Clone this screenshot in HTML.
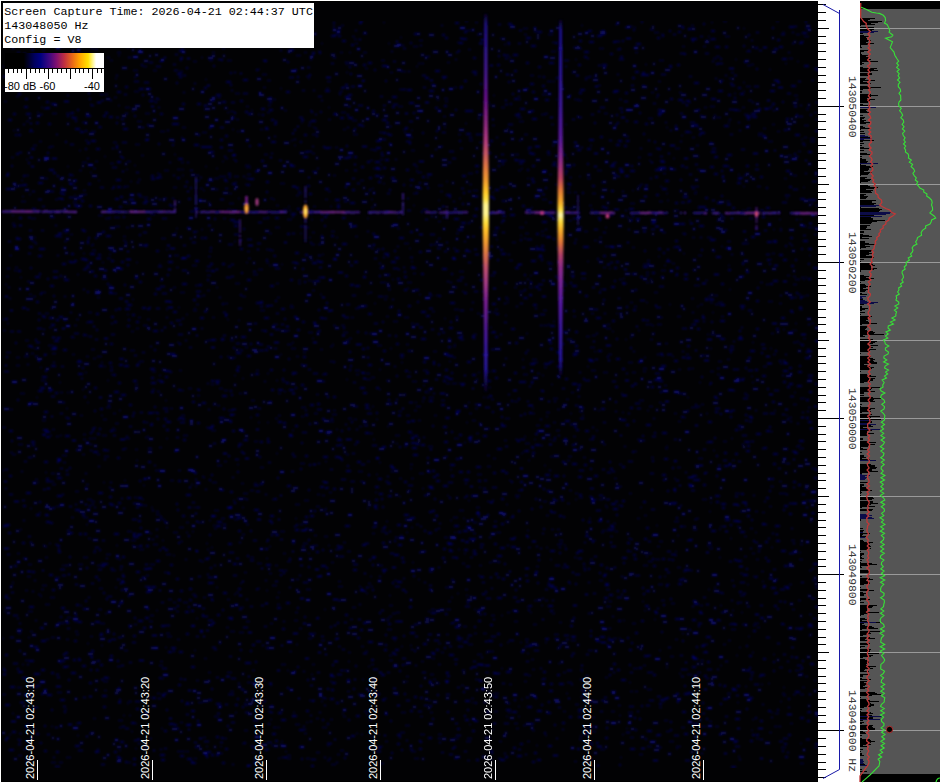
<!DOCTYPE html><html><head><meta charset="utf-8"><style>
html,body{margin:0;padding:0;background:#fff;width:941px;height:783px;overflow:hidden;position:relative}
.abs{position:absolute}
.mono{font-family:"Liberation Mono",monospace}
.sans{font-family:"Liberation Sans",sans-serif}
#label{left:3px;top:3px;width:311px;height:45px;background:#fff;color:#000;font-size:11.7px;line-height:14px}
#label div{white-space:pre;margin-left:1.3px}
.tl{color:#fff;font-size:11px;white-space:nowrap;transform-origin:0 0;transform:rotate(-90deg)}
.fl{color:#383838;font-size:11.4px;white-space:pre;transform-origin:0 0;transform:rotate(90deg)}
</style></head><body>
<svg class="abs" style="left:0;top:0" width="941" height="783" viewBox="0 0 941 783"><defs><linearGradient id="g1" x1="0" y1="14" x2="0" y2="392" gradientUnits="userSpaceOnUse"><stop offset="0.0000" stop-color="#180c70" stop-opacity="0.3"/><stop offset="0.0265" stop-color="#1e1080" stop-opacity="1"/><stop offset="0.0820" stop-color="#2c1490" stop-opacity="1"/><stop offset="0.1614" stop-color="#481490" stop-opacity="1"/><stop offset="0.2275" stop-color="#681088" stop-opacity="1"/><stop offset="0.2937" stop-color="#902a80" stop-opacity="1"/><stop offset="0.3333" stop-color="#b03a80" stop-opacity="1"/><stop offset="0.3730" stop-color="#c85a60" stop-opacity="1"/><stop offset="0.4048" stop-color="#e07840" stop-opacity="1"/><stop offset="0.4392" stop-color="#f09a30" stop-opacity="1"/><stop offset="0.4709" stop-color="#ffc828" stop-opacity="1"/><stop offset="0.4894" stop-color="#ffe040" stop-opacity="1"/><stop offset="0.5053" stop-color="#fff490" stop-opacity="1"/><stop offset="0.5291" stop-color="#fff490" stop-opacity="1"/><stop offset="0.5503" stop-color="#ffe040" stop-opacity="1"/><stop offset="0.5714" stop-color="#ffc028" stop-opacity="1"/><stop offset="0.6032" stop-color="#f09a30" stop-opacity="1"/><stop offset="0.6376" stop-color="#d87048" stop-opacity="1"/><stop offset="0.6720" stop-color="#c05070" stop-opacity="1"/><stop offset="0.7169" stop-color="#a03888" stop-opacity="1"/><stop offset="0.7566" stop-color="#7a2090" stop-opacity="1"/><stop offset="0.8095" stop-color="#5a1a90" stop-opacity="1"/><stop offset="0.8757" stop-color="#3a18a0" stop-opacity="1"/><stop offset="0.9418" stop-color="#24149a" stop-opacity="1"/><stop offset="1.0000" stop-color="#180c70" stop-opacity="0.2"/></linearGradient><linearGradient id="g2" x1="0" y1="20" x2="0" y2="375" gradientUnits="userSpaceOnUse"><stop offset="0.0000" stop-color="#180c70" stop-opacity="0.3"/><stop offset="0.0282" stop-color="#1a1088" stop-opacity="1"/><stop offset="0.1408" stop-color="#2a1598" stop-opacity="1"/><stop offset="0.2535" stop-color="#40189a" stop-opacity="1"/><stop offset="0.3380" stop-color="#5a1a98" stop-opacity="1"/><stop offset="0.3944" stop-color="#8a2a88" stop-opacity="1"/><stop offset="0.4451" stop-color="#b84060" stop-opacity="1"/><stop offset="0.4789" stop-color="#e07838" stop-opacity="1"/><stop offset="0.5155" stop-color="#f8b028" stop-opacity="1"/><stop offset="0.5352" stop-color="#ffe040" stop-opacity="1"/><stop offset="0.5493" stop-color="#fff8b0" stop-opacity="1"/><stop offset="0.5662" stop-color="#ffe040" stop-opacity="1"/><stop offset="0.5915" stop-color="#f8b028" stop-opacity="1"/><stop offset="0.6254" stop-color="#e07838" stop-opacity="1"/><stop offset="0.6620" stop-color="#b04068" stop-opacity="1"/><stop offset="0.6986" stop-color="#8a2a88" stop-opacity="1"/><stop offset="0.7887" stop-color="#5a1aa0" stop-opacity="1"/><stop offset="0.8732" stop-color="#3a18a0" stop-opacity="1"/><stop offset="0.9577" stop-color="#24149a" stop-opacity="1"/><stop offset="1.0000" stop-color="#180c70" stop-opacity="0.3"/></linearGradient>
<filter id="nb" x="0" y="0" width="100%" height="100%"><feGaussianBlur stdDeviation="0.9"/></filter>
<filter id="b1" x="-50%" y="-50%" width="200%" height="200%"><feGaussianBlur stdDeviation="0.8"/></filter>
<filter id="b2" x="-50%" y="-50%" width="200%" height="200%"><feGaussianBlur stdDeviation="1.2"/></filter>
</defs><rect x="1" y="1" width="817" height="781" fill="#000"/><rect x="2" y="2" width="815" height="779" fill="#020204"/><g filter="url(#nb)"><path fill="#04044a" d="M333 175h3v1h-3zM221 59h2v2h-2zM248 113h4v2h-4zM138 317h3v1h-3zM586 336h4v1h-4zM586 675h2v2h-2zM478 620h3v2h-3zM815 205h5v1h-5zM296 644h2v1h-2zM170 371h2v2h-2zM686 100h4v2h-4zM360 629h3v2h-3zM97 297h3v1h-3zM720 338h5v2h-5zM365 193h4v1h-4zM225 315h2v1h-2zM510 103h2v2h-2zM369 720h3v1h-3zM182 175h2v1h-2zM605 207h3v2h-3zM709 548h4v1h-4zM800 717h4v2h-4zM405 127h3v2h-3zM70 234h3v1h-3zM551 124h3v1h-3zM357 637h3v2h-3zM501 498h3v2h-3zM492 729h2v1h-2zM307 679h2v2h-2zM234 225h4v2h-4zM31 49h3v2h-3zM742 378h3v1h-3zM234 502h2v2h-2zM360 180h4v1h-4zM745 686h2v1h-2zM201 237h2v2h-2zM515 267h4v2h-4zM515 154h4v1h-4zM60 275h2v2h-2zM465 541h4v2h-4zM209 479h2v2h-2zM454 344h2v1h-2zM160 754h5v2h-5zM142 499h2v1h-2zM500 187h5v1h-5zM443 548h3v2h-3zM367 347h2v2h-2zM569 490h3v1h-3zM531 659h3v1h-3zM809 255h2v1h-2zM694 285h3v1h-3zM529 605h3v2h-3zM87 643h2v1h-2zM429 295h4v1h-4zM728 265h2v1h-2zM187 227h3v2h-3zM212 317h3v1h-3zM20 277h2v1h-2zM519 585h2v2h-2zM237 371h2v1h-2zM357 76h2v1h-2zM760 282h3v1h-3zM711 321h2v2h-2zM277 477h2v2h-2zM338 581h3v1h-3zM318 244h3v1h-3zM392 106h3v2h-3zM207 275h4v1h-4zM93 168h3v1h-3zM308 332h5v1h-5zM600 749h5v1h-5zM643 565h5v1h-5zM633 668h5v1h-5zM138 33h3v1h-3zM299 746h4v2h-4zM479 142h4v1h-4zM89 505h2v2h-2zM520 481h3v2h-3zM217 97h4v1h-4zM238 530h3v2h-3zM5 524h5v2h-5zM746 165h3v2h-3zM298 280h3v1h-3zM569 583h2v1h-2zM295 518h2v1h-2zM426 372h3v2h-3zM310 515h4v2h-4zM660 186h2v1h-2zM779 481h3v1h-3zM208 41h5v2h-5zM765 557h2v2h-2zM370 149h5v1h-5zM256 414h3v2h-3zM321 43h2v1h-2zM784 505h4v2h-4zM402 561h3v2h-3zM113 250h2v1h-2zM700 132h5v2h-5zM797 61h2v1h-2zM116 122h2v2h-2zM598 217h3v2h-3zM287 344h5v1h-5zM723 686h3v1h-3zM512 711h5v2h-5zM235 704h3v2h-3zM36 733h3v2h-3zM321 219h2v2h-2zM151 423h2v1h-2zM83 190h3v1h-3zM389 403h3v2h-3zM4 101h3v1h-3zM128 595h2v2h-2zM202 402h4v2h-4zM374 506h2v2h-2zM642 435h2v2h-2zM622 368h3v2h-3zM306 24h5v1h-5zM397 278h3v2h-3zM793 175h4v1h-4zM329 492h3v1h-3zM403 184h2v2h-2zM36 514h4v2h-4zM459 198h2v1h-2zM302 321h3v2h-3zM757 287h2v2h-2zM594 213h3v1h-3zM104 690h3v1h-3zM488 257h3v2h-3zM302 259h2v1h-2zM599 219h2v2h-2zM682 27h2v2h-2zM379 369h2v1h-2zM337 439h5v2h-5zM563 516h2v2h-2zM421 311h5v2h-5zM54 340h5v2h-5zM20 393h5v1h-5zM375 492h2v1h-2zM566 166h5v2h-5zM639 400h5v1h-5zM113 413h3v1h-3zM189 599h2v1h-2zM532 181h3v2h-3zM777 709h2v2h-2zM317 617h2v2h-2zM378 478h4v2h-4zM5 654h3v2h-3zM411 130h2v1h-2zM376 114h3v1h-3zM751 730h2v1h-2zM505 315h2v1h-2zM361 646h3v1h-3zM630 302h3v1h-3zM245 347h3v1h-3zM51 672h3v2h-3zM646 424h5v2h-5zM379 612h2v2h-2zM51 324h4v2h-4zM228 173h3v2h-3zM374 69h2v2h-2zM670 67h2v1h-2zM365 332h2v2h-2zM425 618h3v1h-3zM640 507h2v1h-2zM251 745h2v2h-2zM655 169h5v2h-5zM594 475h4v2h-4zM2 66h2v1h-2zM245 184h2v1h-2zM566 693h2v1h-2zM180 541h3v1h-3zM51 762h5v1h-5zM449 497h2v2h-2zM109 288h2v1h-2zM769 732h3v1h-3zM569 716h3v2h-3zM224 108h4v1h-4zM243 228h2v2h-2zM400 357h4v1h-4zM647 730h5v2h-5zM545 735h2v1h-2zM177 169h2v1h-2zM756 68h2v2h-2zM548 701h2v2h-2zM212 229h2v1h-2zM773 670h2v2h-2zM137 121h5v1h-5zM346 454h3v1h-3zM635 52h3v1h-3zM296 195h3v1h-3zM297 76h2v2h-2zM529 287h4v1h-4zM221 737h2v2h-2zM765 109h3v1h-3zM312 290h3v1h-3zM647 260h3v1h-3zM774 726h4v1h-4zM761 352h2v2h-2zM793 284h4v1h-4zM475 679h5v1h-5zM536 377h2v1h-2zM195 285h5v1h-5zM675 125h2v2h-2zM153 330h5v2h-5zM202 132h5v1h-5zM399 496h2v1h-2zM811 468h5v1h-5zM649 324h3v1h-3zM658 148h3v2h-3zM645 738h2v2h-2zM411 751h5v1h-5zM110 60h3v1h-3zM802 225h4v2h-4zM526 37h5v2h-5zM422 488h2v1h-2zM260 301h3v2h-3zM541 245h3v2h-3zM134 91h5v1h-5zM151 382h5v2h-5zM705 280h3v1h-3zM216 94h5v2h-5zM105 613h2v1h-2zM563 672h3v1h-3zM121 589h2v2h-2zM144 505h3v1h-3zM149 738h3v1h-3zM554 634h5v1h-5zM340 117h4v2h-4zM348 117h5v2h-5zM799 559h4v1h-4zM301 384h3v2h-3zM812 141h3v1h-3zM43 429h5v2h-5zM52 429h3v1h-3zM715 726h4v1h-4zM685 669h3v1h-3zM577 748h3v2h-3zM794 452h4v2h-4zM16 717h3v1h-3zM219 176h5v1h-5zM92 244h2v1h-2zM88 321h5v2h-5zM262 74h5v1h-5zM17 687h5v1h-5zM500 644h2v2h-2zM695 191h2v1h-2zM662 188h5v2h-5zM798 484h3v2h-3zM241 483h3v1h-3zM276 453h2v1h-2zM562 722h3v2h-3zM554 587h3v2h-3zM602 30h3v2h-3zM551 384h2v1h-2zM535 286h4v2h-4zM605 227h2v1h-2zM369 433h4v1h-4zM355 308h4v1h-4zM211 600h3v1h-3zM787 628h4v1h-4zM40 367h2v1h-2zM658 112h5v2h-5zM165 400h2v1h-2zM50 285h4v2h-4zM109 503h3v2h-3zM129 404h3v2h-3zM246 167h5v1h-5zM201 57h2v1h-2zM101 415h2v1h-2zM349 351h2v2h-2zM186 751h3v1h-3zM154 293h3v2h-3zM28 298h4v2h-4zM173 287h3v1h-3zM124 284h2v2h-2zM269 265h2v1h-2zM427 187h2v2h-2zM657 37h3v2h-3zM455 22h4v2h-4zM447 62h3v1h-3zM750 528h3v1h-3zM58 551h3v2h-3zM656 525h2v1h-2zM783 509h2v2h-2zM590 630h2v2h-2zM458 549h2v1h-2zM64 319h2v2h-2zM28 564h4v1h-4zM92 250h4v1h-4zM321 277h4v1h-4zM107 380h2v1h-2zM128 497h3v2h-3zM613 638h4v1h-4zM55 392h3v2h-3zM363 276h3v1h-3zM545 212h2v2h-2zM518 706h2v1h-2zM258 145h4v1h-4zM42 315h2v2h-2zM172 144h2v2h-2zM606 567h2v2h-2zM136 321h3v2h-3zM208 582h5v2h-5zM563 331h4v2h-4zM319 52h2v2h-2zM526 580h3v2h-3zM505 297h3v1h-3zM358 471h5v1h-5zM452 383h5v1h-5zM532 118h5v2h-5zM647 746h5v1h-5zM107 25h3v1h-3zM8 532h3v2h-3zM597 258h2v2h-2zM511 328h4v2h-4zM449 550h4v2h-4zM368 62h4v2h-4zM12 713h2v1h-2zM603 372h5v1h-5zM327 396h2v2h-2zM523 451h5v1h-5zM525 233h4v1h-4zM63 666h4v1h-4zM546 547h2v1h-2zM126 169h2v1h-2zM594 351h2v1h-2zM598 85h3v1h-3zM179 343h2v2h-2zM619 279h3v1h-3zM401 712h5v1h-5zM251 110h2v1h-2zM119 364h4v2h-4zM361 588h2v2h-2zM292 373h2v2h-2zM682 46h3v1h-3zM134 115h2v2h-2zM808 151h4v2h-4zM247 184h3v2h-3zM416 406h5v1h-5zM452 622h3v1h-3zM95 576h3v2h-3zM737 602h2v2h-2zM239 349h2v1h-2zM372 533h3v1h-3zM320 111h2v2h-2zM735 429h3v2h-3zM27 695h5v2h-5zM412 381h5v1h-5zM43 435h2v1h-2zM699 134h2v2h-2zM632 247h3v1h-3zM436 474h3v2h-3zM798 151h3v1h-3zM721 593h3v1h-3zM801 673h2v2h-2zM62 193h3v2h-3zM208 672h3v1h-3zM725 519h5v2h-5zM249 27h4v2h-4zM658 380h5v2h-5zM726 166h4v1h-4zM119 727h3v1h-3zM213 65h2v2h-2zM298 193h4v1h-4zM502 215h4v2h-4zM82 162h5v1h-5zM406 169h3v2h-3zM655 559h5v1h-5zM738 338h5v2h-5zM664 385h3v1h-3zM566 399h3v1h-3zM308 638h4v1h-4zM413 112h2v2h-2zM34 646h4v2h-4zM170 408h3v1h-3zM578 712h3v1h-3zM557 352h4v2h-4zM494 693h5v1h-5zM152 697h4v2h-4zM407 288h2v1h-2zM209 582h5v1h-5zM261 686h2v1h-2zM259 747h3v1h-3zM60 435h2v1h-2zM17 739h4v1h-4zM755 717h2v2h-2zM46 639h3v1h-3zM693 269h3v2h-3zM459 42h4v2h-4zM687 410h2v2h-2zM708 296h3v1h-3zM164 730h3v2h-3zM627 550h2v2h-2zM223 339h2v1h-2zM592 500h3v2h-3zM345 614h3v2h-3zM746 708h2v2h-2zM245 165h5v1h-5zM783 370h5v2h-5zM652 272h3v2h-3zM242 378h2v1h-2zM689 485h3v2h-3zM792 330h2v1h-2zM739 336h3v2h-3zM196 618h2v1h-2zM71 517h3v1h-3zM244 742h2v1h-2zM134 636h2v1h-2zM591 370h5v1h-5zM28 345h4v2h-4zM630 748h5v2h-5zM21 180h2v1h-2zM94 387h3v2h-3zM372 556h4v2h-4zM794 392h2v1h-2zM94 49h4v1h-4zM558 534h2v1h-2zM757 186h4v1h-4zM728 269h3v2h-3zM354 419h3v1h-3zM29 131h5v1h-5zM662 432h5v2h-5zM644 250h2v2h-2zM728 465h2v1h-2zM335 456h5v2h-5zM512 242h4v1h-4zM789 294h2v2h-2zM341 25h3v1h-3zM701 645h4v2h-4zM55 235h5v2h-5zM306 722h2v1h-2zM11 157h3v1h-3zM708 36h2v1h-2zM51 345h2v1h-2zM501 160h4v2h-4zM281 741h2v1h-2zM72 65h2v1h-2zM571 392h3v1h-3zM44 689h3v2h-3zM708 441h5v2h-5zM90 656h2v1h-2zM573 353h5v2h-5zM325 487h4v1h-4zM391 261h5v2h-5zM147 88h4v2h-4zM669 65h3v2h-3zM155 27h5v1h-5zM535 697h2v2h-2zM392 279h2v1h-2zM267 80h4v1h-4zM559 302h3v2h-3zM382 65h5v2h-5zM44 750h3v2h-3zM624 283h3v1h-3zM339 93h2v2h-2zM540 445h3v1h-3zM579 494h3v2h-3zM486 201h2v2h-2zM413 575h2v2h-2zM789 417h3v1h-3zM80 605h2v1h-2zM773 241h4v2h-4zM699 225h5v2h-5zM145 437h2v1h-2zM283 553h3v1h-3zM263 700h3v2h-3zM432 718h2v2h-2zM391 467h4v2h-4zM674 521h5v1h-5zM457 229h2v1h-2zM75 631h3v1h-3zM740 595h5v1h-5zM692 758h3v1h-3zM164 170h5v1h-5zM738 178h3v2h-3zM221 176h5v1h-5zM230 691h4v1h-4zM343 716h3v1h-3zM538 559h2v2h-2zM20 529h2v1h-2zM312 633h4v1h-4zM483 298h2v2h-2zM615 124h2v2h-2zM157 693h3v1h-3zM360 481h3v1h-3zM117 186h4v2h-4zM36 61h4v1h-4zM715 156h3v2h-3zM747 700h5v1h-5zM493 331h2v2h-2zM246 140h2v2h-2zM556 141h3v2h-3zM584 569h2v2h-2zM720 605h2v1h-2zM177 178h3v1h-3zM125 107h5v1h-5zM76 634h3v1h-3zM635 729h2v2h-2zM779 493h4v1h-4zM153 544h5v1h-5zM812 512h2v2h-2zM339 91h4v1h-4zM642 72h3v2h-3zM506 709h5v2h-5zM698 625h2v2h-2zM657 546h3v1h-3zM803 279h2v1h-2zM438 333h2v2h-2zM18 134h3v2h-3zM308 489h2v2h-2zM301 364h2v2h-2zM454 438h5v1h-5zM626 424h3v2h-3zM520 642h2v1h-2zM694 124h4v2h-4zM773 280h5v2h-5zM694 82h5v2h-5zM769 490h2v2h-2zM592 541h2v2h-2zM605 677h3v1h-3zM728 389h5v2h-5zM207 549h2v1h-2zM193 299h3v2h-3zM799 343h2v1h-2zM283 422h3v2h-3zM297 666h2v2h-2zM14 63h4v2h-4zM405 370h3v2h-3zM346 379h2v1h-2zM535 444h5v2h-5zM348 719h2v2h-2zM36 685h3v2h-3zM82 389h2v1h-2zM606 589h4v1h-4zM480 134h3v1h-3zM350 359h4v1h-4zM814 234h3v1h-3zM179 50h4v2h-4zM411 420h4v2h-4zM443 485h5v2h-5zM632 215h2v2h-2zM779 219h2v1h-2zM25 760h2v1h-2zM489 152h2v2h-2zM745 414h2v2h-2zM15 134h2v2h-2zM806 109h3v1h-3zM588 568h2v2h-2zM575 493h3v1h-3zM211 384h3v1h-3zM585 762h3v1h-3zM761 684h2v1h-2zM206 21h2v2h-2zM655 612h3v2h-3zM168 651h4v2h-4zM679 579h4v2h-4zM688 28h4v1h-4zM105 112h3v2h-3zM344 217h2v1h-2zM118 720h5v1h-5zM443 77h2v2h-2zM31 353h3v1h-3zM773 354h3v1h-3zM552 42h3v1h-3zM815 102h4v1h-4zM323 456h5v2h-5zM552 145h3v1h-3zM225 315h2v2h-2zM256 370h3v1h-3zM614 90h5v2h-5zM16 96h3v1h-3zM462 203h2v2h-2zM420 734h5v1h-5zM747 118h3v2h-3zM212 52h3v1h-3zM215 380h5v2h-5zM12 215h2v1h-2zM186 67h2v2h-2zM230 84h2v2h-2zM135 384h3v1h-3zM808 278h3v2h-3zM681 135h2v1h-2zM485 290h2v1h-2zM388 399h2v2h-2zM450 520h2v1h-2zM730 524h2v2h-2zM493 198h2v2h-2zM123 216h2v2h-2zM482 265h3v1h-3zM387 133h2v2h-2zM247 555h2v2h-2zM102 231h3v2h-3zM722 507h3v2h-3zM682 640h2v2h-2zM18 633h3v1h-3zM413 46h5v1h-5zM497 259h2v2h-2zM223 218h3v1h-3zM775 350h2v2h-2zM790 186h2v1h-2zM730 416h2v2h-2zM60 192h2v2h-2zM731 438h2v1h-2zM108 38h3v1h-3zM181 162h3v1h-3zM309 700h5v1h-5zM263 679h2v2h-2zM60 660h5v2h-5zM337 30h3v2h-3zM781 747h5v1h-5zM767 259h3v2h-3zM632 451h5v1h-5zM467 361h4v2h-4zM711 39h5v1h-5zM617 486h5v1h-5zM89 733h2v1h-2zM180 292h5v1h-5zM118 105h2v1h-2zM345 96h4v2h-4zM429 511h3v2h-3zM87 291h2v2h-2zM641 74h5v2h-5zM748 357h3v2h-3zM434 415h3v1h-3zM143 34h2v1h-2zM651 489h2v2h-2zM536 566h3v1h-3zM743 45h2v2h-2zM211 339h5v2h-5zM735 718h5v2h-5zM537 759h4v2h-4zM52 353h4v1h-4zM646 272h3v1h-3zM489 562h3v1h-3zM73 659h3v2h-3zM260 705h4v1h-4zM490 750h3v2h-3zM800 763h4v1h-4zM468 110h5v2h-5zM678 369h3v1h-3zM716 117h5v1h-5zM325 188h4v2h-4zM179 417h3v2h-3zM250 490h4v1h-4zM714 173h4v2h-4zM59 21h2v2h-2zM310 404h4v2h-4zM316 280h4v2h-4zM803 240h5v2h-5zM532 91h3v2h-3zM683 253h2v1h-2zM584 56h3v2h-3zM136 460h2v1h-2zM80 447h2v2h-2zM338 548h5v1h-5zM389 595h2v1h-2zM666 585h2v2h-2zM241 451h2v2h-2zM244 572h3v1h-3zM731 629h5v1h-5zM455 109h2v2h-2zM312 338h2v1h-2zM147 218h4v2h-4zM150 533h2v1h-2zM720 413h2v2h-2zM606 606h5v1h-5zM493 472h3v2h-3zM490 140h3v2h-3zM625 599h3v1h-3zM399 89h3v1h-3zM388 43h2v1h-2zM756 164h2v2h-2zM41 107h2v1h-2zM24 356h5v1h-5zM446 354h3v2h-3zM240 515h2v1h-2zM157 380h5v1h-5zM639 718h2v2h-2zM617 669h3v2h-3zM153 70h4v1h-4zM706 413h2v1h-2zM86 524h2v1h-2zM622 466h3v2h-3zM461 685h3v1h-3zM49 169h5v2h-5zM267 539h2v2h-2zM90 104h2v1h-2zM482 756h2v2h-2zM514 287h3v1h-3zM230 506h2v2h-2zM791 85h5v2h-5zM322 719h2v2h-2zM166 554h5v1h-5zM416 192h2v2h-2zM276 597h3v1h-3zM782 624h3v1h-3zM396 612h4v1h-4zM31 346h2v2h-2zM651 223h4v1h-4zM252 747h4v1h-4zM216 587h2v1h-2zM105 218h5v1h-5zM711 30h4v2h-4zM729 624h4v1h-4zM209 204h2v1h-2zM395 435h5v1h-5zM716 455h2v2h-2zM57 458h4v2h-4zM745 395h4v1h-4zM380 282h4v1h-4zM157 173h2v1h-2zM490 624h3v2h-3zM785 63h2v1h-2zM517 265h2v1h-2zM268 105h3v1h-3zM82 454h3v1h-3zM459 271h5v1h-5zM811 80h3v1h-3zM106 554h5v1h-5zM174 255h5v1h-5zM5 739h2v2h-2zM345 275h3v2h-3zM412 447h5v2h-5zM645 123h3v2h-3zM103 706h3v2h-3zM605 505h2v1h-2zM734 97h2v2h-2zM228 617h5v2h-5zM714 396h3v2h-3zM450 469h2v1h-2zM119 410h2v1h-2zM661 600h4v1h-4zM211 515h5v2h-5zM677 535h2v1h-2zM682 633h2v1h-2zM531 508h2v2h-2zM368 747h3v2h-3zM712 38h3v1h-3zM236 369h3v2h-3zM756 211h3v1h-3zM432 470h3v2h-3zM159 677h2v1h-2zM64 711h2v2h-2zM179 76h3v2h-3zM793 404h4v1h-4zM263 41h3v2h-3zM802 32h5v2h-5zM194 232h2v1h-2zM206 746h2v1h-2zM792 609h3v1h-3zM335 549h5v1h-5zM127 264h2v2h-2zM428 392h2v1h-2zM411 267h5v2h-5zM603 267h3v1h-3zM71 116h2v1h-2zM444 441h4v2h-4zM175 123h4v2h-4zM368 364h4v2h-4zM376 693h4v2h-4zM692 137h3v1h-3zM371 248h3v1h-3zM680 223h5v2h-5zM266 259h2v2h-2zM385 80h2v2h-2zM330 719h3v1h-3zM485 223h4v1h-4zM752 652h2v1h-2zM707 545h5v1h-5zM73 202h4v1h-4zM237 471h2v2h-2zM25 660h5v1h-5zM720 320h5v2h-5zM148 412h5v2h-5zM468 222h2v2h-2zM524 274h2v2h-2zM379 493h4v2h-4zM29 660h5v2h-5zM165 376h3v2h-3zM784 178h3v1h-3zM520 235h2v1h-2zM495 309h3v1h-3zM3 330h3v1h-3zM732 468h2v1h-2zM178 542h2v2h-2zM446 418h3v1h-3zM741 612h2v1h-2zM663 604h2v2h-2zM178 684h3v2h-3zM68 679h2v2h-2zM565 124h2v1h-2zM271 522h2v2h-2zM119 358h5v1h-5zM504 44h2v1h-2zM322 418h3v2h-3zM600 564h3v2h-3zM474 609h2v1h-2zM379 462h2v1h-2zM501 668h2v1h-2zM136 328h3v1h-3zM404 693h2v2h-2zM454 758h4v1h-4zM133 70h5v1h-5zM811 323h3v1h-3zM750 678h2v2h-2zM122 556h3v2h-3zM602 64h5v2h-5zM284 391h2v1h-2zM281 264h2v1h-2zM374 150h3v1h-3zM568 220h4v1h-4zM428 472h3v1h-3zM50 597h5v1h-5zM740 305h5v2h-5zM590 468h2v2h-2zM523 108h2v2h-2zM614 267h3v2h-3zM181 390h3v1h-3zM180 751h5v1h-5zM108 209h3v2h-3zM197 422h3v2h-3zM684 733h4v2h-4zM585 430h4v2h-4zM146 545h3v2h-3zM178 389h3v2h-3zM687 202h2v1h-2zM583 563h2v2h-2zM231 357h3v2h-3zM212 425h2v2h-2zM98 254h3v2h-3zM518 113h2v2h-2zM129 626h2v2h-2zM410 179h4v2h-4zM200 317h4v2h-4zM514 401h4v1h-4zM442 557h3v2h-3zM181 137h2v1h-2zM216 525h5v2h-5zM61 199h3v1h-3zM33 39h3v2h-3zM602 441h2v2h-2zM601 408h4v2h-4zM69 532h4v2h-4zM102 435h5v1h-5zM444 537h4v1h-4zM389 126h3v1h-3zM581 696h2v2h-2zM147 124h2v2h-2zM396 375h2v2h-2zM573 316h3v1h-3zM2 427h4v1h-4zM125 242h2v2h-2zM126 227h3v1h-3zM555 184h3v1h-3zM413 205h2v1h-2zM772 27h2v2h-2zM421 661h3v1h-3zM132 415h2v2h-2zM300 141h2v2h-2zM291 213h5v2h-5zM639 112h2v2h-2zM456 458h3v2h-3zM107 258h4v1h-4zM742 107h3v1h-3zM529 152h3v2h-3zM18 444h5v1h-5zM551 529h3v1h-3zM700 115h2v1h-2zM376 419h2v1h-2zM247 662h4v2h-4zM396 343h3v2h-3zM222 263h3v2h-3zM552 440h4v1h-4zM391 177h4v2h-4zM147 587h3v2h-3zM46 101h3v2h-3zM756 433h5v2h-5zM240 294h2v2h-2zM547 262h5v1h-5zM395 257h4v2h-4zM457 728h3v2h-3zM239 607h5v1h-5zM665 343h3v1h-3zM666 584h4v1h-4zM39 501h2v2h-2zM641 705h2v2h-2zM409 372h2v1h-2zM749 218h4v1h-4zM292 715h5v2h-5zM748 34h2v2h-2zM318 309h2v2h-2zM376 140h5v2h-5zM522 205h3v2h-3zM458 531h3v2h-3zM432 658h3v1h-3zM102 262h2v1h-2zM719 557h2v1h-2zM198 702h5v1h-5zM489 213h2v2h-2zM282 378h2v2h-2zM542 199h5v1h-5zM154 406h2v2h-2zM348 428h2v2h-2zM505 521h2v1h-2zM104 366h2v1h-2zM574 761h3v1h-3zM310 579h2v1h-2zM83 230h3v2h-3zM746 86h5v1h-5zM747 65h4v1h-4zM501 470h4v2h-4zM31 441h4v2h-4zM682 711h4v2h-4zM425 391h2v2h-2zM751 64h3v1h-3zM136 536h3v2h-3zM222 161h2v1h-2zM322 254h2v1h-2zM123 236h3v1h-3zM507 612h3v1h-3zM438 664h3v1h-3zM576 552h3v2h-3zM269 401h3v1h-3zM509 480h2v1h-2zM242 706h2v2h-2zM716 501h3v2h-3zM10 452h3v1h-3zM603 255h3v2h-3zM532 359h5v1h-5zM622 40h2v2h-2zM460 148h3v1h-3zM529 294h3v2h-3zM219 643h2v1h-2zM370 736h3v1h-3zM661 365h5v2h-5zM95 237h2v2h-2zM82 665h4v2h-4zM502 578h3v2h-3zM621 679h5v2h-5zM46 107h4v2h-4zM255 661h2v2h-2zM115 587h2v1h-2zM528 547h3v1h-3zM746 450h4v2h-4zM28 637h2v1h-2zM420 685h2v2h-2zM139 480h2v2h-2zM131 331h3v1h-3zM626 120h2v2h-2zM419 40h4v1h-4zM724 452h3v2h-3zM768 301h5v1h-5zM353 688h2v2h-2zM570 625h3v2h-3zM543 310h4v1h-4zM711 22h2v1h-2zM742 263h2v2h-2zM286 25h2v2h-2zM751 519h2v2h-2zM131 722h4v2h-4zM9 749h5v2h-5zM565 173h2v2h-2zM48 147h3v1h-3zM545 638h4v2h-4zM746 243h3v1h-3zM523 374h5v1h-5zM684 234h2v1h-2zM351 44h3v2h-3zM589 726h5v1h-5zM477 313h3v1h-3zM502 200h2v2h-2zM627 637h2v2h-2zM147 201h2v1h-2zM752 342h2v1h-2zM272 733h4v2h-4zM777 39h3v2h-3zM304 281h2v2h-2zM62 263h4v2h-4zM348 94h4v2h-4zM149 100h5v2h-5zM801 277h3v1h-3zM27 576h4v1h-4zM451 372h2v2h-2zM607 324h3v1h-3zM96 751h4v1h-4zM774 48h4v2h-4zM63 462h3v1h-3zM237 131h2v1h-2zM600 136h3v2h-3zM333 410h3v1h-3zM381 152h2v2h-2zM435 529h2v2h-2zM99 635h4v1h-4zM230 631h5v1h-5zM708 421h4v2h-4zM669 167h2v1h-2zM341 87h2v2h-2zM186 494h5v2h-5zM75 614h2v2h-2zM354 444h3v1h-3zM636 218h4v2h-4zM6 276h3v1h-3zM308 35h4v1h-4zM401 557h3v2h-3zM18 671h5v2h-5zM38 182h5v2h-5zM275 565h3v1h-3zM810 114h2v2h-2zM97 565h5v1h-5zM795 670h5v1h-5zM770 259h2v1h-2zM351 421h2v2h-2zM212 482h5v1h-5zM348 418h4v1h-4zM582 415h2v1h-2zM320 575h2v2h-2zM736 110h5v1h-5zM432 425h2v2h-2zM178 480h3v2h-3zM311 244h4v1h-4zM753 576h5v1h-5zM166 527h2v1h-2zM376 412h2v2h-2zM268 723h2v2h-2zM271 389h3v2h-3zM667 259h2v2h-2zM466 595h2v1h-2zM120 196h3v2h-3zM579 411h3v1h-3zM589 139h5v2h-5zM190 187h2v2h-2zM679 673h2v1h-2zM175 232h2v1h-2zM91 245h2v1h-2zM98 609h4v1h-4zM380 267h4v2h-4zM452 257h3v2h-3zM728 94h3v2h-3zM46 478h3v2h-3zM671 502h2v2h-2zM451 475h3v2h-3zM544 367h3v1h-3zM643 593h2v2h-2zM362 348h3v2h-3zM232 430h3v2h-3zM317 403h3v2h-3zM518 398h2v2h-2zM240 248h3v2h-3zM762 581h2v1h-2zM484 101h3v2h-3zM156 250h3v2h-3zM112 428h3v1h-3zM661 161h4v2h-4zM11 165h2v2h-2zM54 346h3v1h-3zM463 192h2v2h-2zM532 408h2v1h-2zM414 33h4v2h-4zM770 106h3v1h-3zM109 254h2v1h-2zM670 98h3v2h-3zM716 56h4v1h-4zM97 356h5v1h-5zM110 366h2v1h-2zM123 240h2v1h-2zM81 200h3v2h-3zM791 540h4v1h-4zM229 203h5v1h-5zM111 316h3v2h-3zM367 508h2v1h-2zM464 80h3v2h-3zM392 637h5v2h-5zM598 350h4v2h-4zM155 41h4v2h-4zM615 531h3v1h-3zM264 154h4v1h-4zM230 415h3v1h-3zM261 160h3v2h-3zM74 621h5v1h-5zM697 328h3v2h-3zM307 185h3v2h-3zM93 718h3v1h-3zM588 521h3v2h-3zM531 381h3v1h-3zM501 423h2v2h-2zM204 109h4v1h-4zM489 387h2v1h-2zM670 656h4v1h-4zM464 553h2v1h-2zM129 715h2v1h-2zM423 370h5v1h-5zM596 742h3v1h-3zM316 752h4v1h-4zM305 516h3v2h-3zM653 333h2v1h-2zM154 349h2v2h-2zM682 233h4v1h-4zM484 152h5v2h-5zM119 602h4v2h-4zM164 521h2v2h-2zM118 687h2v2h-2zM557 249h3v1h-3zM372 589h2v2h-2zM560 543h3v1h-3zM76 723h2v1h-2zM266 249h5v1h-5zM209 127h2v2h-2zM374 303h2v1h-2zM336 237h2v1h-2zM194 758h3v1h-3zM380 159h3v1h-3zM72 354h3v1h-3zM553 81h2v1h-2zM748 100h4v1h-4zM709 511h2v1h-2zM520 108h3v2h-3zM565 170h3v2h-3zM476 466h5v2h-5zM42 376h5v2h-5zM309 464h2v2h-2zM125 308h5v2h-5zM727 359h3v1h-3zM572 383h5v2h-5zM304 135h3v1h-3zM629 208h5v2h-5zM241 272h2v2h-2zM92 430h2v2h-2zM507 302h2v1h-2zM669 304h2v1h-2zM665 180h4v2h-4zM161 519h4v1h-4zM526 333h2v1h-2zM557 529h3v1h-3zM329 421h5v1h-5zM793 694h3v1h-3zM168 599h4v1h-4zM677 467h4v1h-4zM489 105h2v1h-2zM78 621h4v2h-4zM304 500h5v1h-5zM514 621h4v1h-4zM65 141h2v2h-2zM300 463h5v1h-5zM15 267h3v1h-3zM132 111h2v1h-2zM385 714h3v1h-3zM753 540h2v2h-2zM455 663h2v2h-2zM101 645h2v1h-2zM193 232h3v1h-3zM311 530h3v1h-3zM230 515h3v2h-3zM296 579h3v1h-3zM67 115h2v2h-2zM525 352h2v2h-2zM457 593h2v1h-2zM623 562h2v2h-2zM722 175h2v2h-2zM286 91h4v2h-4zM78 564h5v1h-5zM575 59h2v1h-2zM9 734h2v1h-2zM88 538h3v1h-3zM758 135h3v1h-3zM68 261h4v1h-4zM330 147h2v1h-2zM372 110h3v2h-3zM600 289h2v1h-2zM794 95h4v1h-4zM605 737h3v2h-3zM749 667h2v2h-2zM781 317h4v2h-4zM410 42h2v2h-2zM554 724h2v2h-2zM9 475h3v2h-3zM480 83h2v2h-2zM265 548h3v2h-3zM682 578h3v1h-3zM451 597h2v1h-2zM488 102h2v1h-2zM685 158h3v1h-3zM398 544h4v2h-4zM742 624h4v1h-4zM379 763h5v1h-5zM277 607h4v2h-4zM136 571h4v2h-4zM283 209h5v1h-5zM30 267h2v2h-2zM550 348h3v2h-3zM522 359h2v1h-2zM239 430h3v1h-3zM647 689h5v1h-5zM566 566h3v2h-3zM220 489h2v2h-2zM738 174h2v1h-2zM523 725h3v1h-3zM804 65h5v2h-5zM267 441h3v2h-3zM382 569h5v2h-5zM427 470h3v2h-3zM747 445h3v2h-3zM380 164h2v1h-2zM350 202h5v2h-5zM732 689h5v2h-5zM327 723h2v2h-2zM216 754h3v2h-3zM416 170h2v1h-2zM235 182h2v1h-2zM42 585h5v1h-5zM180 59h2v2h-2zM70 184h5v1h-5zM638 330h2v1h-2zM346 64h2v1h-2zM131 540h5v1h-5zM707 237h5v1h-5zM164 572h5v1h-5zM503 54h2v2h-2zM767 241h5v2h-5zM723 644h3v1h-3zM117 52h4v1h-4zM150 615h4v1h-4zM326 567h2v2h-2zM805 21h2v2h-2zM590 559h3v1h-3zM115 217h5v1h-5zM815 70h4v1h-4zM260 744h2v2h-2zM449 327h4v2h-4zM206 270h4v1h-4zM154 31h2v1h-2zM622 557h5v2h-5zM583 378h2v2h-2zM802 198h3v2h-3zM497 597h5v2h-5zM45 431h5v2h-5zM755 576h2v2h-2zM543 170h4v2h-4zM713 58h4v1h-4zM472 702h2v1h-2zM391 752h2v2h-2zM623 284h2v1h-2zM334 34h4v1h-4zM433 361h2v2h-2zM187 255h3v2h-3zM75 128h5v2h-5zM173 650h2v2h-2zM801 344h3v2h-3zM245 111h3v2h-3zM433 244h2v1h-2zM431 609h4v1h-4zM139 88h5v2h-5zM312 664h3v1h-3zM110 163h4v1h-4zM611 526h3v2h-3zM229 176h2v2h-2zM129 30h4v1h-4zM270 369h3v2h-3zM729 463h2v2h-2zM65 417h3v1h-3zM180 722h3v1h-3zM66 757h5v1h-5zM156 560h4v2h-4zM779 667h4v1h-4zM257 588h3v1h-3zM540 506h2v2h-2zM625 92h3v2h-3zM658 167h5v2h-5zM538 248h5v1h-5zM17 399h2v2h-2zM790 297h3v2h-3zM517 117h5v1h-5zM29 294h3v1h-3zM212 622h3v2h-3zM254 725h3v1h-3zM532 165h3v1h-3zM362 679h2v1h-2zM630 26h3v1h-3zM467 760h3v1h-3zM710 239h5v2h-5zM278 421h4v2h-4zM163 425h2v2h-2zM542 94h5v1h-5zM448 338h3v1h-3zM239 393h3v1h-3zM716 63h2v2h-2zM756 328h3v2h-3zM752 116h5v2h-5zM205 754h3v2h-3zM723 165h5v2h-5zM691 368h3v1h-3zM755 511h3v1h-3zM691 407h2v1h-2zM161 759h4v2h-4zM643 264h5v1h-5zM44 411h4v2h-4zM763 128h3v1h-3zM681 416h3v2h-3zM746 271h3v2h-3zM289 210h2v1h-2zM196 680h3v1h-3zM563 711h3v1h-3zM431 652h4v2h-4zM244 439h4v1h-4zM640 184h3v1h-3zM221 339h2v2h-2zM815 130h3v2h-3zM705 197h3v2h-3zM549 174h3v1h-3zM51 348h5v2h-5zM161 728h2v1h-2zM37 673h3v2h-3zM578 716h4v2h-4zM445 432h2v1h-2zM247 682h5v1h-5zM575 331h3v2h-3zM542 221h5v2h-5zM740 531h5v2h-5zM331 231h4v1h-4zM724 125h5v2h-5zM55 577h5v1h-5zM639 754h4v1h-4zM169 723h5v2h-5zM325 487h3v2h-3zM390 72h3v1h-3zM211 547h2v1h-2zM362 694h2v1h-2zM573 310h2v2h-2zM25 725h3v1h-3zM99 428h2v2h-2zM110 343h3v2h-3zM623 590h3v2h-3zM160 661h3v1h-3zM720 703h2v2h-2zM658 114h3v2h-3zM610 536h3v1h-3zM34 687h3v1h-3zM469 724h2v1h-2zM684 693h5v2h-5zM550 456h5v1h-5zM420 741h2v2h-2zM674 488h2v2h-2zM648 561h5v1h-5zM634 717h2v2h-2zM110 655h3v2h-3zM408 350h2v2h-2zM779 303h3v1h-3zM612 331h2v1h-2zM725 46h3v2h-3zM100 633h3v2h-3zM659 703h3v2h-3zM637 518h3v1h-3zM23 184h4v2h-4zM85 600h2v2h-2zM688 132h4v1h-4zM392 652h3v2h-3zM732 610h2v1h-2zM311 219h2v1h-2zM232 33h2v2h-2zM57 175h2v2h-2zM770 283h3v2h-3zM271 745h4v1h-4zM482 593h2v2h-2zM99 588h4v1h-4zM324 225h2v2h-2zM166 429h3v2h-3zM466 133h5v2h-5zM74 325h3v1h-3zM493 458h3v1h-3zM182 283h5v2h-5zM472 338h4v1h-4zM583 567h3v1h-3zM159 174h2v2h-2zM766 497h3v2h-3zM110 249h2v2h-2zM762 523h3v1h-3zM97 660h3v2h-3zM386 122h3v2h-3zM132 723h5v1h-5zM686 354h3v1h-3zM356 715h4v2h-4zM354 261h4v2h-4zM675 202h3v2h-3zM145 113h5v1h-5zM783 259h4v2h-4zM518 716h2v1h-2zM23 505h3v2h-3zM634 383h3v2h-3zM481 664h3v2h-3zM50 522h3v2h-3zM443 116h3v1h-3zM240 239h2v2h-2zM57 495h5v2h-5zM86 567h2v2h-2zM87 499h5v1h-5zM474 720h4v2h-4zM45 557h3v1h-3zM38 360h2v2h-2zM815 469h2v2h-2zM157 391h3v1h-3zM128 625h3v1h-3zM115 226h5v1h-5zM50 146h4v1h-4zM466 741h5v1h-5zM449 549h2v2h-2zM241 336h5v2h-5zM382 321h2v2h-2zM269 573h3v1h-3zM274 255h2v2h-2zM344 157h5v2h-5zM739 591h3v2h-3zM471 495h4v2h-4zM549 62h5v2h-5zM326 213h3v2h-3zM531 45h5v2h-5zM761 571h3v1h-3zM290 307h4v1h-4zM250 557h4v1h-4zM569 208h5v1h-5zM182 257h5v2h-5zM244 703h2v1h-2zM568 581h2v2h-2zM751 236h4v2h-4zM537 373h3v1h-3zM186 522h3v1h-3zM419 748h3v2h-3zM496 239h2v1h-2zM333 396h3v2h-3zM556 247h2v1h-2zM710 302h3v1h-3zM233 154h3v2h-3zM29 246h4v2h-4zM176 578h3v2h-3zM612 163h3v2h-3zM578 64h3v2h-3zM124 448h3v1h-3zM159 375h2v1h-2zM575 499h2v1h-2zM734 740h4v2h-4zM449 361h2v1h-2zM320 294h2v1h-2zM747 584h2v1h-2zM574 426h3v2h-3zM673 247h3v1h-3zM642 319h3v2h-3zM114 751h3v2h-3zM197 720h2v2h-2zM535 573h2v2h-2zM808 227h5v1h-5zM368 313h4v2h-4zM504 282h3v2h-3zM454 738h5v1h-5zM57 692h5v1h-5zM651 457h3v1h-3zM695 479h5v2h-5zM445 369h3v2h-3zM282 628h3v2h-3zM76 604h3v2h-3zM22 307h4v2h-4zM694 320h5v2h-5zM111 367h2v1h-2zM32 208h4v2h-4zM482 354h4v1h-4zM483 397h2v1h-2zM807 107h2v1h-2zM559 216h3v2h-3zM698 458h5v1h-5zM735 453h3v2h-3zM104 94h4v1h-4zM290 305h3v1h-3zM428 532h4v2h-4zM494 696h4v2h-4zM714 239h2v1h-2zM35 62h4v2h-4zM119 268h4v2h-4zM796 292h2v2h-2zM231 394h2v2h-2zM328 107h2v1h-2zM603 444h3v1h-3zM607 644h2v2h-2zM696 518h3v1h-3zM616 261h3v2h-3zM238 588h3v2h-3zM427 457h2v2h-2zM811 513h4v1h-4zM676 748h2v1h-2zM176 503h2v2h-2zM75 640h2v1h-2zM348 156h4v2h-4zM411 266h3v2h-3zM82 230h3v1h-3zM295 425h3v2h-3zM170 564h3v2h-3zM230 605h5v1h-5zM308 280h3v1h-3zM394 540h2v2h-2zM449 543h4v2h-4zM292 543h3v1h-3zM705 472h3v1h-3zM354 156h3v2h-3zM799 552h2v1h-2zM542 375h2v1h-2zM710 348h2v1h-2zM93 358h3v1h-3zM281 719h5v2h-5zM633 309h3v2h-3zM531 110h3v2h-3zM341 459h2v2h-2zM543 528h2v2h-2zM322 697h3v1h-3zM692 619h4v2h-4zM117 660h2v2h-2zM599 237h3v1h-3zM703 484h3v2h-3zM414 696h3v2h-3zM409 248h2v1h-2zM115 198h4v2h-4zM91 650h3v2h-3zM143 627h3v2h-3zM741 493h3v2h-3zM459 140h2v2h-2zM582 192h2v2h-2zM632 452h2v1h-2zM584 733h4v2h-4zM478 372h2v1h-2zM388 289h3v1h-3zM91 131h5v1h-5zM306 76h4v1h-4zM696 646h2v2h-2zM159 678h5v1h-5zM230 72h2v2h-2zM316 260h3v1h-3zM463 641h5v2h-5zM514 699h2v2h-2zM333 361h2v2h-2zM641 21h2v2h-2zM195 550h3v1h-3zM658 256h2v1h-2zM425 77h4v2h-4zM614 478h3v1h-3zM57 58h4v1h-4zM754 623h5v1h-5zM106 598h2v2h-2zM66 408h2v1h-2zM77 109h2v2h-2zM165 370h5v2h-5zM446 614h2v1h-2zM736 655h2v1h-2zM701 404h3v1h-3zM541 259h2v2h-2zM591 209h2v2h-2zM707 678h2v1h-2zM137 546h5v1h-5zM124 365h5v2h-5zM646 282h3v1h-3zM17 85h3v2h-3zM447 711h2v2h-2zM776 21h3v1h-3zM450 302h5v2h-5zM224 461h3v1h-3zM652 558h2v2h-2zM606 727h2v2h-2zM147 30h3v2h-3zM287 670h2v1h-2zM343 129h3v1h-3zM681 165h3v2h-3zM497 555h5v2h-5zM2 694h4v1h-4zM629 682h2v1h-2zM26 113h5v2h-5zM453 258h3v2h-3zM258 144h3v2h-3zM25 590h3v1h-3zM41 248h4v2h-4zM211 474h2v2h-2zM516 611h3v1h-3zM395 694h4v1h-4zM363 64h3v2h-3zM732 207h3v2h-3zM350 365h2v2h-2zM338 586h5v1h-5zM580 669h3v1h-3zM456 410h5v1h-5zM681 26h3v1h-3zM666 446h2v1h-2zM178 158h5v2h-5zM621 393h2v1h-2zM235 283h5v1h-5zM289 558h2v2h-2zM32 444h3v2h-3zM134 617h2v2h-2zM569 184h2v2h-2zM184 283h2v1h-2zM611 711h4v1h-4zM268 711h3v1h-3zM596 430h2v1h-2zM799 309h4v1h-4zM12 223h3v1h-3zM211 688h2v2h-2zM368 666h2v1h-2zM545 113h3v1h-3zM119 750h2v1h-2zM634 558h3v2h-3zM713 450h2v1h-2zM548 605h5v2h-5zM565 548h2v2h-2zM402 589h3v2h-3zM535 198h2v1h-2zM417 172h5v1h-5zM723 21h4v1h-4zM16 357h4v1h-4zM158 39h3v2h-3zM280 354h2v1h-2zM99 126h2v1h-2zM60 392h3v1h-3zM211 754h3v2h-3zM233 500h2v1h-2zM411 478h3v1h-3zM746 51h5v1h-5zM547 490h3v2h-3zM573 436h3v1h-3zM615 24h3v1h-3zM312 52h3v2h-3zM545 425h5v2h-5zM486 351h2v2h-2zM780 228h2v1h-2zM264 330h3v2h-3zM473 57h3v2h-3zM699 611h3v2h-3zM465 719h4v2h-4zM729 78h4v1h-4zM90 172h2v1h-2zM709 721h3v1h-3zM813 563h5v2h-5zM406 676h3v1h-3zM247 251h3v1h-3zM680 179h2v2h-2zM430 244h2v2h-2zM538 76h3v1h-3zM536 233h3v2h-3zM632 190h2v1h-2zM711 530h5v2h-5zM378 747h3v2h-3zM186 633h3v2h-3zM45 472h2v1h-2zM808 263h2v2h-2zM93 451h5v2h-5zM417 301h2v2h-2zM378 746h5v1h-5zM267 373h2v1h-2zM414 650h2v2h-2zM357 331h2v2h-2zM575 583h2v2h-2zM301 122h2v1h-2zM692 666h4v2h-4zM308 125h3v1h-3zM258 269h5v1h-5zM69 556h2v2h-2zM598 520h4v2h-4zM295 69h2v2h-2zM617 590h2v2h-2zM570 275h5v1h-5zM814 227h2v1h-2zM489 196h5v2h-5zM347 114h2v2h-2zM304 616h2v2h-2zM75 491h4v1h-4zM341 112h5v1h-5zM173 555h2v1h-2zM28 611h3v1h-3zM172 123h4v2h-4zM203 737h3v1h-3zM116 145h2v2h-2zM491 694h2v2h-2zM260 441h3v2h-3zM704 107h3v1h-3zM195 746h2v2h-2zM44 461h4v2h-4zM468 402h2v1h-2zM16 237h2v1h-2zM487 691h3v1h-3zM333 114h3v1h-3zM574 192h3v1h-3zM39 114h4v1h-4zM616 144h4v2h-4zM682 417h4v1h-4zM104 456h5v1h-5zM271 534h2v2h-2zM37 112h2v1h-2zM401 362h2v1h-2zM537 710h5v2h-5zM406 344h3v1h-3zM217 614h3v2h-3zM227 209h4v1h-4zM269 546h2v1h-2zM176 611h3v1h-3zM177 177h3v1h-3zM387 618h2v1h-2zM532 730h3v1h-3zM408 431h4v2h-4zM646 527h3v2h-3zM721 283h3v2h-3zM76 449h3v2h-3zM158 143h2v2h-2zM442 76h5v2h-5zM437 248h4v1h-4zM343 327h2v2h-2zM614 653h2v1h-2zM116 558h3v1h-3zM325 147h5v2h-5zM697 285h3v1h-3zM42 50h3v1h-3zM616 114h2v2h-2zM806 399h3v2h-3zM619 99h3v1h-3zM545 187h2v2h-2zM24 175h5v1h-5zM34 237h2v1h-2zM699 382h2v1h-2zM12 731h4v2h-4zM47 694h5v2h-5zM654 32h5v1h-5zM541 114h5v1h-5zM77 735h2v1h-2zM541 249h4v2h-4zM783 448h5v2h-5zM601 627h3v1h-3zM458 50h2v2h-2zM601 32h5v2h-5zM341 325h4v1h-4zM633 554h3v2h-3zM201 146h5v2h-5zM675 246h5v2h-5zM531 153h4v2h-4zM466 526h5v2h-5zM125 86h3v2h-3zM234 519h4v1h-4zM446 194h5v2h-5zM524 34h3v1h-3zM733 585h2v2h-2zM447 495h2v1h-2zM733 742h4v1h-4zM271 705h2v1h-2zM48 345h5v1h-5zM214 510h5v1h-5zM207 340h5v1h-5zM211 598h2v2h-2zM385 741h3v1h-3zM91 140h5v2h-5zM410 517h5v2h-5zM210 624h3v2h-3zM258 713h2v1h-2zM330 206h2v1h-2zM335 147h3v1h-3zM84 259h4v2h-4zM550 683h3v2h-3zM433 476h3v2h-3zM808 407h3v1h-3zM120 358h3v2h-3zM541 605h2v1h-2zM789 584h3v1h-3zM230 219h5v2h-5zM345 186h2v2h-2zM519 227h5v1h-5zM556 430h4v1h-4zM205 146h5v2h-5zM57 461h2v2h-2zM21 201h5v1h-5zM685 131h5v2h-5zM492 192h2v1h-2zM476 171h2v2h-2zM677 567h4v1h-4zM585 295h3v2h-3zM414 758h5v1h-5zM768 141h5v1h-5zM218 752h2v1h-2zM379 275h2v2h-2zM763 585h3v2h-3zM382 506h2v2h-2zM41 589h3v1h-3zM19 650h2v2h-2zM114 97h3v1h-3zM567 682h5v1h-5zM549 342h3v2h-3zM256 69h4v1h-4zM691 298h3v1h-3zM618 620h3v2h-3zM694 519h3v1h-3zM389 655h3v1h-3zM316 551h3v2h-3zM80 131h4v2h-4zM38 39h5v1h-5zM240 649h2v2h-2zM612 320h3v2h-3zM537 582h2v2h-2zM444 376h5v2h-5zM296 55h5v1h-5zM626 216h2v1h-2zM613 41h4v1h-4zM155 101h2v2h-2zM198 199h4v1h-4zM373 168h5v1h-5zM760 720h3v2h-3zM800 743h2v1h-2zM612 526h3v1h-3zM725 36h5v1h-5zM579 92h3v2h-3zM64 232h4v1h-4zM247 174h4v1h-4zM64 241h3v1h-3zM510 214h5v2h-5zM429 680h2v2h-2zM644 655h5v2h-5zM431 84h4v1h-4zM423 361h3v2h-3zM640 276h3v2h-3zM273 199h2v1h-2zM363 392h4v2h-4zM794 153h2v2h-2zM478 480h3v2h-3zM397 228h3v1h-3zM52 507h3v2h-3zM528 460h2v1h-2zM40 293h2v2h-2zM710 502h2v1h-2zM567 183h4v2h-4zM245 704h2v2h-2zM27 281h3v1h-3zM309 74h2v2h-2zM490 327h2v1h-2zM123 449h2v1h-2zM280 183h5v1h-5zM633 29h2v2h-2zM405 664h2v1h-2zM60 616h2v2h-2zM416 444h4v1h-4zM186 314h2v1h-2zM549 690h4v2h-4zM738 425h3v2h-3zM587 261h2v1h-2zM242 534h3v1h-3zM139 281h3v2h-3zM411 261h2v1h-2zM17 629h5v2h-5zM592 499h5v1h-5zM478 609h5v2h-5zM489 686h2v1h-2zM33 76h3v2h-3zM96 669h2v1h-2zM562 567h5v1h-5zM688 200h3v2h-3zM781 550h5v2h-5zM486 68h2v1h-2zM94 427h2v1h-2zM504 734h2v1h-2zM614 174h3v2h-3zM473 215h4v2h-4zM111 570h5v1h-5zM453 517h5v1h-5zM390 348h2v1h-2zM219 388h4v1h-4zM630 347h2v2h-2zM815 340h4v2h-4zM716 475h2v2h-2zM327 688h2v2h-2zM779 255h3v1h-3zM191 625h4v2h-4zM372 245h3v1h-3zM349 338h3v1h-3zM397 734h4v2h-4zM403 635h2v2h-2zM156 514h4v1h-4zM589 518h2v1h-2zM36 397h2v1h-2zM287 755h4v1h-4zM38 26h4v2h-4zM533 362h5v1h-5zM478 575h2v1h-2zM423 397h2v2h-2zM692 40h2v2h-2zM145 617h4v2h-4zM444 132h2v1h-2zM133 380h4v2h-4zM79 170h3v1h-3zM711 98h5v2h-5zM405 725h5v1h-5zM701 376h2v2h-2zM86 115h5v2h-5zM349 627h3v2h-3zM504 563h2v2h-2zM193 310h4v1h-4zM133 758h3v2h-3zM658 248h3v2h-3zM65 31h2v2h-2zM571 655h2v2h-2zM404 481h3v2h-3zM571 640h5v1h-5zM445 587h4v1h-4zM75 120h2v2h-2zM724 465h4v2h-4zM338 437h2v1h-2zM286 602h4v2h-4zM752 734h3v2h-3zM65 435h5v2h-5zM429 400h4v2h-4zM83 439h3v1h-3zM559 683h5v2h-5zM611 286h4v2h-4zM410 710h3v2h-3zM592 438h2v2h-2zM303 356h3v2h-3zM590 743h3v2h-3zM312 153h3v1h-3zM611 246h4v2h-4zM51 481h3v1h-3zM160 381h3v2h-3zM394 640h2v1h-2zM730 351h2v2h-2zM446 181h2v1h-2zM378 734h2v1h-2zM394 580h3v1h-3zM578 384h3v2h-3zM126 44h2v2h-2zM233 347h2v2h-2zM195 486h2v1h-2zM590 145h2v1h-2zM721 195h2v2h-2zM234 112h2v2h-2zM628 538h3v1h-3zM138 497h4v2h-4zM485 428h5v1h-5zM177 509h2v2h-2zM197 103h4v2h-4zM528 609h2v2h-2zM209 60h4v1h-4zM82 122h4v1h-4zM421 63h3v1h-3zM598 410h2v1h-2zM721 246h2v1h-2zM235 221h5v2h-5zM297 607h2v2h-2zM221 489h3v2h-3zM182 103h3v2h-3zM394 554h5v2h-5zM313 206h3v1h-3zM295 724h5v1h-5zM535 249h2v1h-2zM320 349h3v1h-3zM706 636h5v2h-5zM244 730h4v1h-4zM629 649h3v2h-3zM198 134h2v2h-2zM483 29h2v1h-2zM282 21h3v1h-3zM729 289h2v1h-2zM465 110h3v2h-3zM89 682h3v2h-3zM221 518h4v1h-4zM239 443h2v1h-2zM383 22h2v1h-2zM333 488h3v2h-3zM435 683h5v1h-5zM705 651h2v1h-2zM101 362h2v1h-2zM495 574h2v1h-2zM196 304h3v1h-3zM389 660h4v1h-4zM635 691h3v1h-3zM262 114h2v2h-2zM625 339h2v1h-2zM174 451h3v1h-3zM783 493h3v1h-3zM25 98h3v2h-3zM547 151h3v2h-3zM53 172h3v2h-3zM463 530h5v2h-5zM345 525h5v2h-5zM515 439h3v1h-3zM556 77h3v2h-3zM354 39h3v1h-3zM150 368h5v2h-5zM314 510h2v2h-2zM385 481h4v1h-4zM390 465h3v2h-3zM796 446h3v1h-3zM375 486h4v2h-4zM422 176h3v2h-3zM814 477h3v2h-3zM748 416h3v1h-3zM287 61h2v2h-2zM18 755h4v1h-4zM547 712h4v2h-4zM179 527h5v1h-5zM438 185h5v1h-5zM186 532h2v1h-2zM118 43h2v1h-2zM484 435h3v2h-3zM533 304h4v2h-4zM365 432h4v2h-4zM359 586h2v1h-2zM766 430h4v2h-4zM94 275h3v2h-3zM659 576h2v2h-2zM266 558h2v1h-2zM284 318h2v2h-2zM81 258h5v2h-5zM700 605h3v1h-3zM18 270h3v2h-3zM16 153h3v2h-3zM202 476h2v1h-2zM106 235h5v2h-5zM38 390h5v2h-5zM100 623h3v1h-3zM135 449h3v1h-3zM691 683h2v1h-2zM35 276h5v2h-5zM776 328h3v2h-3zM237 366h3v2h-3zM168 261h5v2h-5zM74 195h2v1h-2zM288 206h2v1h-2zM455 626h4v2h-4zM29 606h5v2h-5zM347 439h5v1h-5zM86 82h5v1h-5zM554 437h2v2h-2zM90 253h5v2h-5zM324 609h2v1h-2zM559 540h4v1h-4zM562 461h3v2h-3zM259 45h4v2h-4zM638 157h3v1h-3zM466 249h2v1h-2zM429 397h5v1h-5zM773 229h2v1h-2zM326 302h2v2h-2zM590 347h5v1h-5zM160 516h2v2h-2zM468 500h2v1h-2zM145 139h3v2h-3zM808 421h4v2h-4zM666 193h2v1h-2zM31 42h3v2h-3zM183 439h3v2h-3zM734 559h3v2h-3zM717 202h5v2h-5zM619 464h3v1h-3zM138 179h3v1h-3zM695 404h2v2h-2zM810 141h3v1h-3zM44 178h4v1h-4zM222 762h3v2h-3zM5 704h5v2h-5zM505 472h3v1h-3zM604 597h4v2h-4zM51 726h2v1h-2zM193 61h4v1h-4zM59 382h2v1h-2zM800 694h4v1h-4zM453 248h3v1h-3zM666 731h4v1h-4zM182 418h3v2h-3zM134 165h2v1h-2zM663 173h3v1h-3zM386 380h3v1h-3zM79 533h3v2h-3zM308 553h2v1h-2zM798 445h3v1h-3zM559 203h5v1h-5zM517 440h3v2h-3zM482 153h2v1h-2zM501 186h2v1h-2zM133 534h2v2h-2zM524 289h2v2h-2zM721 316h3v1h-3zM528 675h3v1h-3zM599 580h4v1h-4zM689 629h2v2h-2zM743 28h2v1h-2zM371 659h3v2h-3zM216 287h2v1h-2zM369 189h2v2h-2zM6 352h5v1h-5zM703 644h5v1h-5zM539 398h5v1h-5zM191 666h4v2h-4zM69 174h3v2h-3zM39 248h3v2h-3zM747 298h2v2h-2zM228 507h4v2h-4zM527 706h5v2h-5zM586 534h2v2h-2zM395 335h2v2h-2zM531 446h3v2h-3zM28 686h2v1h-2zM287 219h5v1h-5zM51 709h2v2h-2zM572 285h2v2h-2zM180 590h3v2h-3zM696 145h3v1h-3zM653 674h3v2h-3zM795 691h5v2h-5zM646 590h4v2h-4zM743 82h2v1h-2zM800 398h5v1h-5zM811 199h5v2h-5zM546 412h4v1h-4zM10 409h3v1h-3zM273 727h4v1h-4zM267 112h3v1h-3zM693 479h5v2h-5zM374 739h2v2h-2zM340 444h3v1h-3zM556 351h5v1h-5zM98 77h4v1h-4zM428 446h5v1h-5zM384 526h2v2h-2zM147 608h2v2h-2zM615 386h3v2h-3zM410 645h2v1h-2zM814 112h3v1h-3zM700 660h4v1h-4zM779 254h4v2h-4zM352 36h3v1h-3zM143 479h3v1h-3zM194 308h2v1h-2zM430 712h3v1h-3zM160 131h5v1h-5zM438 200h2v1h-2zM304 52h3v1h-3zM355 370h5v1h-5zM374 690h3v1h-3zM209 251h3v1h-3zM558 663h2v1h-2zM647 263h3v2h-3zM693 723h5v2h-5zM353 689h2v1h-2zM495 336h3v2h-3zM367 293h2v1h-2zM459 471h4v2h-4zM660 699h3v2h-3zM36 77h2v2h-2zM702 702h2v2h-2zM429 486h3v2h-3zM483 633h4v1h-4zM333 22h2v2h-2zM156 511h3v1h-3zM365 68h3v1h-3zM35 339h2v2h-2zM583 246h3v2h-3zM472 420h4v1h-4zM49 543h2v1h-2zM345 84h3v2h-3zM317 494h3v1h-3zM364 305h3v2h-3zM621 679h5v2h-5zM51 103h5v2h-5zM404 317h5v1h-5zM230 421h2v2h-2zM177 751h4v1h-4zM20 66h2v1h-2zM445 680h4v2h-4zM43 316h3v2h-3zM572 444h3v2h-3zM311 674h2v1h-2zM144 568h4v2h-4zM135 748h2v1h-2zM165 549h3v2h-3zM655 176h3v2h-3zM125 761h2v2h-2zM55 544h3v1h-3zM93 438h3v1h-3zM114 533h5v2h-5zM793 342h4v1h-4zM398 106h5v1h-5zM12 582h2v1h-2zM494 711h4v1h-4zM766 187h2v2h-2zM237 517h4v2h-4zM372 557h3v2h-3zM85 487h2v1h-2zM459 641h2v1h-2zM275 418h3v1h-3zM616 358h4v2h-4zM205 79h2v1h-2zM485 672h4v1h-4zM200 188h3v1h-3zM352 189h3v2h-3zM718 592h5v1h-5zM423 643h4v2h-4zM332 682h4v2h-4zM625 175h4v2h-4zM519 291h5v1h-5zM14 565h3v2h-3zM421 338h5v2h-5zM525 450h4v2h-4zM325 90h5v2h-5zM161 238h5v1h-5zM748 636h2v1h-2zM587 148h4v2h-4zM621 505h2v2h-2zM683 571h3v1h-3zM170 480h4v1h-4zM194 208h5v2h-5zM65 652h3v2h-3zM548 34h5v1h-5zM398 217h2v1h-2zM371 199h2v1h-2zM663 479h2v2h-2zM688 368h2v2h-2zM605 246h5v1h-5zM777 608h2v2h-2zM526 62h3v2h-3zM316 135h2v2h-2zM666 667h2v1h-2zM472 666h5v2h-5zM543 488h2v2h-2zM501 425h5v2h-5zM544 179h3v2h-3zM730 411h2v2h-2zM98 127h4v1h-4zM243 440h5v1h-5zM573 47h2v1h-2zM780 363h2v1h-2zM684 53h2v2h-2zM695 687h2v1h-2zM543 76h2v2h-2zM202 615h2v2h-2zM109 362h3v2h-3zM180 678h2v2h-2zM570 413h2v1h-2zM710 106h5v1h-5zM780 701h2v1h-2zM419 251h3v2h-3zM174 154h2v1h-2zM446 673h2v1h-2zM145 244h3v2h-3zM788 734h3v2h-3zM624 145h3v2h-3zM786 198h2v1h-2zM813 267h5v2h-5zM156 28h5v1h-5zM338 646h3v1h-3zM589 76h3v1h-3zM203 190h2v1h-2zM799 440h5v2h-5zM502 143h3v2h-3zM424 530h2v2h-2zM173 311h4v2h-4zM557 674h3v2h-3zM460 87h2v2h-2zM342 40h4v2h-4zM550 610h2v2h-2zM96 670h3v1h-3zM487 455h3v1h-3zM588 30h4v2h-4zM336 429h2v1h-2zM23 53h3v2h-3zM810 138h5v1h-5zM682 526h4v1h-4zM308 539h2v2h-2zM631 385h3v2h-3zM750 417h3v2h-3zM784 565h4v2h-4zM743 91h2v1h-2zM781 623h3v2h-3zM188 535h2v2h-2zM201 561h3v1h-3zM359 426h3v1h-3zM331 689h3v2h-3zM266 590h2v1h-2zM98 215h5v1h-5zM269 109h4v2h-4zM506 671h5v2h-5zM88 312h4v1h-4zM642 587h2v2h-2zM347 551h4v1h-4zM654 379h4v2h-4zM100 67h3v2h-3zM217 405h3v1h-3zM694 603h5v2h-5zM358 124h4v2h-4zM238 320h2v1h-2zM286 382h3v2h-3zM224 179h3v2h-3zM473 522h4v1h-4zM789 58h4v1h-4zM618 246h2v1h-2zM574 285h3v2h-3zM454 309h2v1h-2zM352 120h5v1h-5zM531 723h3v2h-3zM692 655h2v2h-2zM106 677h3v2h-3zM633 309h2v2h-2zM22 542h3v2h-3zM46 521h4v2h-4zM157 418h2v2h-2zM413 273h3v1h-3zM123 240h3v1h-3zM519 121h5v1h-5zM297 208h3v2h-3zM295 529h4v2h-4zM660 317h3v1h-3zM420 697h3v2h-3zM545 642h2v1h-2zM411 150h4v1h-4zM387 255h2v2h-2zM246 262h2v1h-2zM278 712h4v2h-4zM399 446h2v2h-2zM180 57h3v2h-3zM311 111h2v2h-2zM635 289h2v2h-2zM692 475h5v2h-5zM530 281h2v2h-2zM97 69h2v1h-2zM568 234h2v2h-2zM83 608h4v2h-4zM349 52h2v1h-2zM784 129h3v2h-3zM31 148h4v2h-4zM98 180h2v1h-2zM584 464h3v2h-3zM104 156h2v1h-2zM176 228h2v1h-2zM757 627h3v1h-3zM766 207h4v2h-4zM132 299h2v1h-2zM227 319h2v1h-2zM713 250h2v2h-2zM531 207h2v1h-2zM365 404h4v2h-4zM355 236h3v1h-3zM573 164h2v2h-2zM744 556h3v1h-3zM799 448h5v1h-5zM710 382h2v2h-2zM142 307h4v2h-4zM309 237h2v1h-2zM626 306h2v2h-2zM128 319h2v2h-2zM229 193h3v1h-3zM670 729h2v2h-2zM46 436h4v2h-4zM333 258h3v2h-3zM463 518h2v1h-2zM438 643h3v1h-3zM553 398h5v1h-5zM379 565h4v1h-4zM584 51h5v2h-5zM255 37h2v1h-2zM662 558h3v2h-3zM322 495h3v1h-3zM112 293h5v1h-5zM419 294h2v1h-2zM123 715h2v1h-2zM606 328h5v1h-5zM704 675h3v2h-3zM140 527h2v2h-2zM399 478h3v1h-3zM523 28h5v1h-5zM621 419h5v2h-5zM238 444h5v1h-5zM438 734h4v1h-4zM447 675h3v2h-3zM501 523h3v2h-3zM443 380h3v2h-3zM328 191h3v1h-3zM222 303h2v2h-2zM111 260h3v2h-3zM314 535h3v1h-3zM234 176h5v1h-5zM581 671h2v1h-2zM293 38h4v2h-4zM538 66h3v2h-3zM625 136h4v1h-4zM681 727h4v1h-4zM78 205h4v2h-4zM578 550h5v2h-5zM229 420h3v2h-3zM576 429h3v2h-3zM312 171h5v1h-5zM392 582h2v2h-2zM633 555h2v1h-2zM124 186h5v1h-5zM806 295h3v1h-3zM515 342h3v2h-3zM388 623h3v2h-3zM495 377h3v2h-3zM589 439h3v1h-3zM143 66h4v1h-4zM210 263h3v2h-3zM566 158h2v1h-2zM202 614h2v1h-2zM26 492h5v2h-5zM13 225h3v2h-3zM150 564h5v1h-5zM676 273h2v2h-2zM260 483h3v2h-3zM617 487h2v2h-2zM59 316h4v2h-4zM803 338h3v1h-3zM411 442h5v2h-5zM588 650h5v1h-5zM275 740h3v2h-3zM252 670h3v1h-3zM246 621h4v1h-4zM204 237h3v2h-3zM216 736h3v2h-3zM493 672h3v2h-3zM643 133h2v2h-2zM109 291h3v2h-3zM159 549h2v2h-2zM544 732h2v2h-2zM195 260h4v2h-4zM324 373h3v2h-3zM720 214h3v2h-3zM355 43h3v1h-3zM633 420h2v2h-2zM51 365h5v2h-5zM317 331h3v1h-3zM327 745h3v1h-3zM50 435h2v1h-2zM502 163h2v2h-2zM731 72h3v1h-3zM706 718h2v2h-2zM721 170h2v2h-2zM38 255h4v2h-4zM760 617h4v2h-4zM559 515h3v2h-3zM181 415h4v1h-4zM749 697h4v2h-4zM557 409h3v1h-3zM674 460h3v2h-3zM469 140h4v1h-4zM32 571h3v2h-3zM185 611h4v2h-4zM643 501h3v2h-3zM553 498h2v2h-2zM676 267h3v2h-3zM3 525h5v2h-5zM475 22h3v1h-3zM654 619h2v1h-2zM123 128h5v2h-5zM6 356h2v2h-2zM41 292h5v1h-5zM223 738h4v1h-4zM710 142h2v2h-2zM300 41h5v2h-5zM508 23h4v2h-4zM261 330h5v1h-5zM413 193h5v1h-5zM47 152h2v2h-2zM228 694h4v1h-4zM24 106h4v2h-4zM556 166h3v1h-3zM670 721h2v2h-2zM370 586h3v1h-3zM553 238h2v2h-2zM801 627h2v2h-2zM791 265h3v2h-3zM608 639h5v2h-5zM348 661h2v1h-2zM34 348h4v1h-4zM526 536h2v1h-2zM573 355h3v1h-3zM103 419h4v1h-4zM250 343h2v2h-2zM371 664h3v1h-3zM248 23h4v2h-4zM397 581h5v2h-5zM514 159h3v1h-3zM512 93h2v2h-2zM784 361h2v2h-2zM289 435h4v2h-4zM613 91h4v2h-4zM78 373h5v2h-5zM282 330h5v2h-5zM653 565h3v2h-3zM758 108h3v2h-3zM760 674h5v2h-5zM476 433h3v1h-3zM708 589h2v1h-2zM567 503h3v1h-3zM95 451h2v1h-2zM98 492h5v2h-5zM673 502h4v2h-4zM572 276h2v2h-2zM56 751h3v2h-3zM22 196h2v1h-2zM128 701h4v1h-4zM135 277h3v2h-3zM578 387h2v2h-2zM731 766h5v2h-5zM473 334h4v1h-4zM276 380h2v1h-2zM363 52h4v1h-4zM555 212h2v1h-2zM527 606h2v1h-2zM771 478h3v2h-3zM318 330h3v1h-3zM720 665h2v1h-2zM191 710h4v2h-4zM117 161h4v2h-4zM445 353h4v2h-4zM749 655h3v2h-3zM782 32h3v1h-3zM383 183h2v1h-2zM615 401h2v2h-2zM614 280h2v2h-2zM575 345h3v2h-3zM492 411h2v2h-2zM411 437h3v2h-3zM697 169h3v1h-3zM707 334h2v1h-2zM66 113h5v1h-5zM444 318h2v1h-2zM740 93h4v2h-4zM314 323h2v2h-2zM399 237h5v2h-5zM362 307h2v1h-2zM299 628h3v1h-3zM673 504h2v1h-2zM487 380h4v2h-4zM56 436h3v1h-3zM82 45h3v1h-3zM717 374h3v1h-3zM124 480h2v1h-2zM740 212h2v1h-2zM649 406h4v1h-4zM800 297h2v2h-2zM500 759h5v2h-5zM474 626h2v2h-2zM789 383h4v2h-4zM546 515h3v1h-3zM435 70h5v2h-5zM632 372h4v1h-4zM514 723h4v1h-4zM654 292h4v1h-4zM23 175h2v2h-2zM597 170h5v1h-5zM237 698h2v2h-2zM230 618h3v2h-3zM795 134h5v2h-5zM544 465h2v1h-2zM663 698h4v2h-4zM117 666h4v1h-4zM772 103h3v2h-3zM161 694h4v1h-4zM31 685h2v1h-2zM52 113h5v1h-5zM291 140h2v1h-2zM727 693h4v1h-4zM610 53h3v2h-3zM439 295h2v2h-2zM465 700h5v2h-5zM441 400h4v1h-4zM278 592h2v1h-2zM308 210h4v1h-4zM662 474h4v2h-4zM34 673h3v2h-3zM41 641h5v1h-5zM664 576h2v1h-2zM539 249h2v1h-2zM527 536h2v2h-2zM385 644h2v2h-2zM454 525h5v2h-5zM742 262h2v2h-2zM647 410h2v1h-2zM74 640h3v2h-3zM646 556h2v1h-2zM325 199h3v1h-3zM438 364h2v2h-2zM814 680h2v1h-2zM582 519h2v2h-2zM634 121h4v2h-4zM295 252h4v2h-4zM691 38h4v1h-4zM815 119h3v1h-3zM22 664h2v1h-2zM453 357h3v1h-3zM113 633h2v2h-2zM814 747h5v1h-5zM646 275h3v1h-3zM330 626h2v2h-2zM66 639h3v1h-3zM300 524h3v1h-3zM36 301h3v2h-3zM619 168h4v2h-4zM622 734h2v1h-2zM159 61h4v1h-4zM454 218h5v2h-5zM162 695h3v2h-3zM748 50h2v2h-2zM646 74h3v2h-3zM85 140h3v1h-3zM40 742h2v2h-2zM487 514h2v2h-2zM667 490h2v2h-2zM38 685h3v1h-3zM3 668h2v2h-2zM121 394h5v2h-5zM292 372h5v2h-5zM642 601h2v1h-2zM790 637h2v2h-2zM88 85h4v2h-4zM490 759h3v1h-3zM772 124h3v1h-3zM253 274h5v1h-5zM808 248h4v2h-4zM536 246h2v2h-2zM284 110h3v1h-3zM608 601h4v1h-4zM350 619h3v1h-3zM265 127h3v2h-3zM508 712h3v1h-3zM421 444h4v2h-4zM701 726h5v1h-5zM529 644h5v2h-5zM292 342h2v1h-2zM486 166h3v1h-3zM38 319h2v2h-2zM350 73h2v2h-2zM89 205h3v2h-3zM322 481h3v1h-3zM64 709h3v1h-3zM331 562h3v1h-3zM275 300h2v2h-2zM91 349h4v1h-4zM138 620h5v2h-5zM397 314h5v1h-5zM281 757h3v1h-3zM622 282h3v2h-3zM363 622h4v2h-4zM375 161h5v2h-5zM182 127h4v1h-4zM585 536h5v1h-5zM702 317h3v2h-3zM442 34h3v2h-3zM2 470h2v1h-2zM348 652h3v1h-3zM515 589h2v2h-2zM57 477h5v2h-5zM687 674h5v1h-5zM731 623h4v1h-4zM147 308h3v2h-3zM45 604h5v1h-5zM300 468h2v2h-2zM429 683h3v1h-3zM458 134h3v1h-3zM493 275h2v1h-2zM459 434h3v2h-3zM660 353h3v2h-3zM42 420h4v1h-4zM25 726h3v2h-3zM256 302h5v2h-5zM560 644h2v2h-2zM587 366h2v1h-2zM18 93h3v2h-3zM543 213h3v1h-3zM142 94h2v2h-2zM808 711h3v1h-3zM806 417h3v2h-3zM305 455h3v2h-3zM473 190h5v1h-5zM786 118h3v2h-3zM415 402h2v1h-2zM127 161h4v1h-4zM608 637h2v1h-2zM537 430h2v2h-2zM698 255h4v1h-4zM513 54h5v2h-5zM169 204h3v2h-3zM357 461h4v2h-4zM209 520h2v1h-2zM195 180h5v1h-5zM532 452h3v2h-3zM242 743h4v1h-4zM237 498h3v1h-3zM160 280h3v1h-3zM773 453h5v2h-5zM19 217h3v2h-3zM271 119h3v2h-3zM474 633h3v1h-3zM222 101h4v2h-4zM103 592h2v2h-2zM221 338h3v2h-3zM103 482h2v1h-2zM493 95h2v1h-2zM801 667h2v2h-2zM383 571h2v2h-2zM496 313h3v2h-3zM493 231h5v1h-5zM715 495h5v2h-5zM553 321h2v1h-2zM418 579h2v1h-2zM255 373h4v2h-4zM173 187h4v1h-4zM78 360h3v2h-3zM433 351h4v1h-4zM325 461h2v1h-2zM620 171h3v2h-3zM214 218h2v2h-2zM638 361h3v2h-3zM206 427h5v1h-5zM631 219h2v2h-2zM246 178h3v1h-3zM465 21h3v1h-3zM541 231h3v1h-3zM199 296h3v1h-3zM579 739h3v1h-3zM524 134h4v1h-4zM557 544h4v1h-4zM39 512h2v1h-2zM718 302h5v1h-5zM773 240h4v1h-4zM567 460h3v1h-3zM30 508h2v1h-2zM475 165h4v2h-4zM601 182h5v1h-5zM4 87h2v2h-2zM234 594h2v1h-2zM118 55h2v1h-2zM113 186h2v2h-2zM551 577h2v1h-2zM261 108h4v2h-4zM72 175h2v1h-2zM664 265h2v1h-2zM165 647h2v1h-2zM247 766h2v1h-2zM35 479h3v1h-3zM469 538h4v2h-4zM610 468h3v2h-3zM311 214h2v1h-2zM88 237h2v2h-2zM194 650h2v1h-2zM491 615h4v1h-4zM603 299h2v2h-2zM762 375h4v2h-4zM674 413h3v1h-3zM390 720h2v2h-2zM679 92h3v1h-3zM520 160h5v2h-5zM675 551h2v1h-2zM117 457h3v2h-3zM508 43h2v2h-2zM115 423h4v1h-4zM16 238h5v2h-5zM325 508h2v1h-2zM376 147h5v2h-5zM389 143h2v2h-2zM41 669h4v2h-4zM125 485h2v2h-2zM689 102h2v1h-2zM677 64h3v2h-3zM445 417h5v1h-5zM444 127h2v1h-2zM742 210h2v1h-2zM290 279h3v2h-3zM726 201h4v1h-4zM602 206h3v2h-3zM776 540h4v2h-4zM39 141h3v1h-3zM491 752h2v2h-2zM396 443h2v1h-2zM517 755h5v2h-5zM782 101h2v2h-2zM617 122h2v2h-2zM755 47h3v2h-3zM769 426h2v2h-2zM90 669h2v2h-2zM327 81h4v1h-4zM151 178h4v2h-4zM119 33h2v2h-2zM269 101h3v2h-3zM436 480h4v2h-4zM372 233h2v1h-2zM476 759h3v2h-3zM305 528h3v2h-3zM362 81h2v1h-2zM782 58h5v2h-5zM600 636h5v2h-5zM515 114h5v2h-5zM76 197h5v2h-5zM674 478h2v1h-2zM652 325h2v1h-2zM585 77h5v1h-5zM134 497h3v1h-3zM151 586h5v2h-5zM678 421h3v1h-3zM240 100h3v2h-3zM659 541h4v1h-4zM167 274h2v2h-2zM386 521h2v1h-2zM188 606h2v2h-2zM523 381h3v2h-3zM694 193h3v1h-3zM342 217h3v2h-3zM769 108h3v1h-3zM801 248h2v2h-2zM395 257h3v2h-3zM515 495h5v1h-5zM802 660h2v2h-2zM802 687h3v1h-3zM82 62h2v1h-2zM809 391h3v2h-3zM91 501h4v1h-4zM559 645h3v1h-3zM491 399h3v1h-3zM270 198h3v1h-3zM333 325h3v1h-3zM574 99h5v1h-5zM314 423h5v1h-5zM298 283h3v1h-3zM287 233h3v2h-3zM676 517h2v2h-2zM124 650h4v1h-4zM397 743h3v2h-3zM150 424h3v2h-3zM412 562h2v1h-2zM440 191h3v1h-3zM751 376h2v1h-2zM656 97h2v1h-2zM216 168h2v1h-2zM448 346h3v2h-3zM648 118h5v1h-5zM286 602h2v1h-2zM143 325h5v1h-5zM629 664h2v2h-2zM291 348h5v1h-5zM114 217h3v1h-3zM464 715h2v2h-2zM466 30h5v1h-5zM790 159h2v1h-2zM762 216h3v2h-3zM17 36h4v2h-4zM143 202h4v2h-4zM675 240h3v2h-3zM626 140h3v2h-3zM469 184h3v1h-3zM62 622h2v2h-2zM612 529h3v1h-3zM774 410h2v1h-2zM518 170h3v1h-3zM351 735h4v2h-4zM807 712h4v1h-4zM432 311h3v1h-3zM200 631h3v2h-3zM213 525h2v1h-2zM127 40h4v2h-4zM384 296h4v1h-4zM156 288h5v2h-5zM782 693h3v1h-3zM87 264h2v2h-2zM694 186h5v1h-5zM230 491h3v2h-3zM750 350h5v2h-5zM59 623h2v1h-2zM644 538h3v2h-3zM494 521h3v1h-3zM579 40h3v2h-3zM798 600h3v1h-3zM800 544h3v1h-3zM773 654h2v1h-2zM137 363h3v1h-3zM466 422h2v1h-2zM738 380h3v1h-3zM230 390h2v2h-2zM387 629h5v1h-5zM541 704h2v2h-2zM730 614h2v1h-2zM107 596h2v1h-2zM107 283h2v2h-2zM507 642h2v1h-2zM575 704h4v1h-4zM400 535h3v1h-3zM295 263h2v1h-2zM430 674h4v1h-4zM188 198h3v2h-3zM666 127h2v1h-2zM366 593h2v1h-2zM789 513h3v2h-3zM509 684h3v1h-3zM752 553h3v1h-3zM696 750h2v2h-2zM173 141h2v1h-2zM611 503h5v2h-5zM788 698h2v2h-2zM451 431h2v2h-2zM203 44h4v1h-4zM809 500h5v2h-5zM200 748h2v1h-2zM483 435h2v2h-2zM376 168h5v2h-5zM208 699h4v2h-4zM775 713h4v1h-4zM691 25h3v1h-3zM535 498h2v2h-2zM310 110h2v1h-2zM530 363h5v2h-5zM532 669h3v1h-3zM368 474h2v2h-2zM235 93h5v1h-5zM610 529h3v2h-3zM470 557h3v1h-3zM546 236h5v2h-5zM410 468h2v1h-2zM321 701h2v1h-2zM222 417h3v1h-3zM533 624h4v1h-4zM277 28h3v1h-3zM509 260h4v1h-4zM581 25h2v1h-2zM789 26h5v2h-5zM17 553h3v1h-3zM139 88h2v2h-2zM343 332h5v1h-5zM364 711h4v1h-4zM714 437h2v2h-2zM103 449h3v2h-3zM532 413h3v1h-3zM305 414h3v2h-3zM627 542h3v2h-3zM795 330h2v1h-2zM521 699h2v1h-2zM338 35h3v2h-3zM746 568h2v2h-2zM233 357h3v1h-3zM139 549h5v1h-5zM800 219h2v1h-2zM384 649h3v2h-3zM796 114h2v2h-2zM177 73h5v2h-5zM807 720h3v2h-3zM73 64h3v2h-3zM404 243h4v1h-4zM734 109h4v2h-4zM83 334h3v2h-3zM544 363h5v2h-5zM95 621h5v2h-5zM308 566h2v2h-2zM214 178h5v1h-5zM47 278h2v2h-2zM652 460h2v2h-2zM295 504h5v1h-5zM467 738h5v1h-5zM745 441h5v2h-5zM574 557h3v1h-3zM738 756h2v1h-2zM144 45h3v1h-3zM270 515h4v2h-4zM619 638h2v1h-2zM234 375h2v1h-2zM511 481h2v2h-2zM16 365h4v1h-4zM71 337h4v1h-4zM85 372h2v1h-2zM487 501h3v1h-3zM252 644h3v2h-3zM758 548h3v1h-3zM69 467h2v2h-2zM87 240h2v2h-2zM783 329h2v1h-2zM735 493h5v1h-5zM397 524h4v2h-4zM166 249h2v1h-2zM294 620h4v1h-4zM278 727h2v1h-2zM272 499h2v1h-2zM108 640h3v2h-3zM217 521h5v2h-5zM653 741h3v1h-3zM358 306h3v2h-3zM478 515h2v2h-2zM435 244h2v1h-2zM61 187h2v1h-2zM180 755h4v2h-4zM222 609h2v2h-2zM67 392h2v1h-2zM89 438h3v1h-3zM260 467h4v1h-4zM290 165h5v2h-5zM771 333h3v1h-3zM451 579h3v1h-3zM127 304h5v2h-5zM74 260h3v2h-3zM201 229h2v1h-2zM518 510h2v2h-2zM490 651h4v1h-4zM22 677h5v2h-5zM534 600h4v1h-4zM730 538h2v1h-2zM173 532h5v1h-5zM737 526h2v1h-2zM166 709h2v2h-2zM548 582h2v2h-2zM372 564h2v2h-2zM689 539h4v1h-4zM4 670h2v2h-2zM40 627h4v2h-4zM657 734h4v2h-4zM686 104h2v2h-2zM519 381h5v2h-5zM609 268h2v1h-2zM484 613h2v2h-2zM118 308h3v2h-3zM97 454h3v1h-3zM166 438h2v1h-2zM705 300h3v1h-3zM675 555h2v1h-2zM5 284h2v1h-2zM562 154h4v2h-4zM529 412h3v2h-3zM123 187h2v1h-2zM603 575h3v2h-3zM170 322h3v2h-3zM784 586h5v2h-5zM217 465h5v1h-5zM772 253h3v1h-3zM783 687h2v1h-2zM318 51h3v1h-3zM650 339h3v1h-3zM642 85h3v2h-3zM303 156h5v2h-5zM60 663h2v1h-2zM547 585h2v1h-2zM324 536h4v1h-4zM191 484h2v1h-2zM410 231h3v2h-3zM793 276h3v1h-3zM588 727h5v1h-5zM121 580h3v2h-3zM381 674h4v2h-4zM354 225h3v2h-3zM597 35h5v2h-5zM171 206h5v1h-5zM100 408h3v2h-3zM290 43h3v1h-3zM623 278h2v1h-2zM25 80h5v2h-5zM667 200h2v1h-2zM185 704h5v1h-5zM791 656h2v2h-2zM594 240h3v1h-3zM227 672h5v1h-5zM250 417h2v1h-2zM758 133h5v1h-5zM353 134h5v1h-5zM796 34h4v1h-4zM805 28h5v1h-5zM676 746h5v1h-5zM177 342h2v1h-2zM125 438h5v1h-5zM753 630h3v2h-3zM287 561h4v1h-4zM282 381h4v1h-4zM408 305h3v2h-3zM243 493h5v1h-5zM711 151h5v2h-5zM539 31h3v2h-3zM220 753h2v1h-2zM143 485h2v1h-2zM362 125h2v2h-2zM710 371h4v1h-4zM462 175h4v2h-4zM659 707h3v1h-3zM799 42h4v2h-4zM306 29h4v2h-4zM149 621h4v1h-4zM305 37h2v1h-2zM331 764h5v1h-5zM513 747h3v2h-3zM111 504h3v2h-3zM509 57h2v1h-2zM500 38h2v1h-2zM208 35h5v2h-5zM717 368h3v1h-3zM618 140h4v2h-4zM71 112h3v2h-3zM785 756h3v2h-3zM276 283h3v1h-3zM535 571h3v2h-3zM725 248h3v1h-3zM305 254h3v2h-3zM630 203h5v1h-5zM768 431h5v1h-5zM647 672h2v1h-2zM227 60h5v1h-5zM436 130h2v2h-2zM249 178h5v2h-5zM596 640h3v2h-3zM399 670h2v2h-2zM266 181h3v2h-3zM150 214h5v1h-5zM453 346h3v1h-3zM386 274h4v2h-4zM94 410h2v2h-2zM95 751h3v2h-3zM368 641h5v2h-5zM475 702h2v2h-2zM225 303h3v1h-3zM56 338h4v1h-4zM569 177h3v1h-3zM709 384h2v1h-2zM468 644h5v1h-5zM28 405h2v1h-2zM389 189h2v2h-2zM330 698h4v2h-4zM290 43h4v2h-4zM227 356h2v1h-2zM203 597h3v1h-3zM226 627h3v1h-3zM665 448h3v1h-3zM604 113h4v1h-4zM512 610h2v1h-2zM174 724h3v2h-3zM737 702h2v1h-2zM618 705h3v1h-3zM243 498h3v1h-3zM25 190h3v1h-3zM630 337h2v1h-2zM589 496h3v1h-3zM316 394h3v1h-3zM256 709h2v1h-2zM613 42h3v1h-3zM786 415h2v1h-2zM23 500h2v1h-2zM806 351h3v2h-3zM574 242h2v2h-2zM32 241h4v1h-4zM432 510h3v2h-3zM809 570h3v1h-3zM684 278h4v2h-4zM769 69h2v1h-2zM197 395h3v1h-3zM739 647h2v1h-2zM48 391h3v1h-3zM395 649h4v2h-4zM560 683h3v2h-3zM389 616h3v1h-3zM59 762h4v1h-4zM551 610h3v1h-3zM567 192h4v1h-4zM426 315h4v2h-4zM810 663h4v2h-4zM176 82h2v2h-2zM162 547h3v2h-3zM288 358h2v2h-2zM779 46h4v2h-4zM775 525h5v2h-5zM381 531h5v1h-5zM456 639h4v1h-4zM498 55h2v2h-2zM63 349h4v2h-4zM511 25h3v2h-3zM673 158h2v1h-2zM95 161h3v1h-3zM30 631h3v1h-3zM223 408h2v2h-2zM276 205h3v1h-3zM52 589h3v2h-3zM9 430h4v2h-4zM87 402h2v1h-2zM658 584h5v1h-5zM795 279h5v1h-5zM486 711h4v2h-4zM88 183h3v2h-3zM674 210h5v1h-5zM356 441h3v2h-3zM457 42h2v1h-2zM151 507h2v1h-2zM44 355h2v1h-2zM545 99h4v2h-4zM634 27h2v1h-2zM220 139h3v2h-3zM81 229h3v1h-3zM275 534h4v2h-4zM312 54h2v1h-2zM409 102h5v2h-5zM209 534h2v2h-2zM321 640h4v1h-4zM193 507h2v1h-2zM158 99h2v1h-2zM140 45h4v1h-4zM804 125h5v1h-5zM718 361h4v1h-4zM209 151h5v2h-5zM238 198h2v1h-2zM49 327h3v1h-3zM225 135h3v2h-3zM359 22h3v2h-3zM430 705h2v2h-2zM401 749h2v2h-2zM710 166h4v2h-4zM242 296h4v1h-4zM561 272h2v1h-2zM520 239h2v2h-2zM109 292h4v2h-4zM670 598h2v2h-2zM485 591h2v2h-2zM371 207h3v1h-3zM792 551h4v1h-4zM728 640h3v1h-3zM472 374h4v2h-4zM189 588h3v2h-3zM293 712h2v1h-2zM63 667h4v1h-4zM444 105h3v2h-3zM51 637h4v1h-4zM436 649h3v2h-3zM737 560h5v2h-5zM103 563h5v2h-5zM480 279h3v2h-3zM635 632h3v2h-3zM386 316h3v1h-3zM414 435h4v2h-4zM631 165h2v2h-2zM768 710h3v2h-3zM250 650h2v2h-2zM186 181h2v2h-2zM782 360h3v1h-3zM151 377h3v2h-3zM50 217h5v1h-5zM346 72h2v1h-2zM763 366h4v1h-4zM445 101h3v1h-3zM744 536h3v1h-3zM654 432h2v2h-2zM659 60h5v1h-5zM66 622h3v2h-3zM198 389h2v2h-2zM737 182h4v2h-4zM691 39h4v1h-4zM769 506h3v1h-3zM67 617h4v1h-4zM719 529h2v1h-2zM361 734h2v1h-2zM68 83h5v2h-5zM101 565h4v2h-4zM132 30h4v2h-4zM436 295h4v1h-4zM752 382h2v1h-2zM447 542h4v2h-4zM290 49h4v2h-4zM10 686h5v2h-5zM170 353h5v2h-5zM609 461h2v2h-2zM138 504h5v2h-5zM299 729h5v2h-5zM563 285h4v1h-4zM547 154h4v1h-4zM356 374h3v1h-3zM278 758h2v1h-2zM331 35h5v2h-5zM546 416h2v1h-2zM178 599h3v2h-3zM302 268h2v2h-2zM137 27h3v2h-3zM662 35h2v2h-2zM83 557h5v1h-5zM230 111h4v1h-4zM114 321h3v2h-3zM464 222h2v2h-2zM473 533h3v1h-3zM464 442h2v1h-2zM797 156h2v1h-2zM33 296h3v1h-3zM594 122h2v2h-2zM465 250h4v2h-4zM631 642h2v2h-2zM92 68h3v1h-3zM393 665h5v2h-5zM246 524h3v1h-3zM127 497h4v2h-4zM52 484h4v1h-4zM480 654h2v1h-2zM211 430h5v1h-5zM751 113h5v2h-5zM23 25h3v2h-3zM591 497h2v1h-2zM602 530h3v1h-3zM313 545h5v1h-5zM461 222h4v2h-4zM151 391h3v2h-3zM273 99h3v1h-3zM93 552h3v1h-3zM451 273h2v2h-2zM661 276h3v2h-3zM113 374h3v2h-3zM296 187h3v2h-3zM278 415h3v1h-3zM443 426h4v2h-4zM622 412h2v1h-2zM660 160h4v2h-4zM777 131h3v1h-3zM630 691h3v1h-3zM223 43h2v2h-2zM755 369h3v2h-3zM376 457h3v2h-3zM2 319h2v1h-2zM340 52h3v1h-3zM349 66h2v2h-2zM784 506h3v1h-3zM375 499h3v2h-3zM467 471h3v2h-3zM549 362h2v2h-2zM589 360h5v2h-5zM525 443h5v1h-5zM344 757h2v2h-2zM265 349h3v2h-3zM630 737h4v1h-4zM534 752h3v2h-3zM702 499h5v1h-5zM337 754h3v1h-3zM260 129h3v1h-3zM744 393h3v1h-3zM280 744h2v1h-2zM420 716h3v1h-3zM219 417h4v2h-4zM691 324h3v1h-3zM475 208h3v2h-3zM270 250h4v1h-4zM488 640h5v2h-5zM389 605h4v1h-4zM389 134h3v2h-3zM801 139h2v1h-2zM445 613h2v2h-2zM381 498h2v2h-2zM532 447h2v2h-2zM629 493h3v1h-3zM252 752h2v1h-2zM744 114h5v1h-5zM116 147h2v2h-2zM592 335h4v1h-4zM364 272h2v1h-2zM75 509h5v2h-5zM770 348h2v1h-2zM619 715h2v1h-2zM4 611h2v1h-2zM664 720h4v1h-4zM531 178h3v2h-3zM208 557h2v1h-2zM587 178h4v1h-4zM672 559h2v2h-2zM373 688h2v1h-2zM599 572h2v2h-2zM492 370h4v2h-4zM141 155h3v1h-3zM797 385h5v2h-5zM206 756h2v2h-2zM750 672h2v1h-2zM49 317h4v2h-4zM700 304h3v1h-3zM384 299h3v1h-3zM181 700h2v2h-2zM214 528h3v1h-3zM686 357h5v2h-5zM226 81h5v2h-5zM271 141h5v2h-5zM84 533h3v2h-3zM534 439h2v1h-2zM78 66h2v1h-2zM506 504h2v1h-2zM498 561h2v2h-2zM260 310h5v1h-5zM771 547h2v1h-2zM721 80h3v1h-3zM543 325h5v1h-5zM179 651h4v2h-4zM613 523h3v1h-3zM109 496h3v2h-3zM332 344h2v1h-2zM328 119h3v1h-3zM641 620h3v2h-3zM33 145h4v1h-4zM656 194h3v2h-3zM659 201h4v1h-4zM366 714h2v1h-2zM693 407h5v1h-5zM739 330h2v2h-2zM2 638h2v1h-2zM173 602h3v1h-3zM467 709h2v2h-2zM675 148h5v1h-5zM783 695h3v1h-3zM28 162h2v2h-2zM701 249h2v2h-2zM368 583h3v1h-3zM550 361h4v1h-4zM41 640h5v2h-5zM419 182h2v2h-2zM666 697h3v2h-3zM505 756h3v2h-3zM77 53h3v1h-3zM283 572h2v2h-2zM542 85h3v2h-3zM135 144h5v1h-5zM331 418h2v2h-2zM746 645h2v2h-2zM133 412h2v2h-2zM118 382h3v2h-3zM300 233h2v1h-2zM301 119h3v2h-3zM718 90h5v2h-5zM369 333h4v1h-4zM136 262h2v1h-2zM96 329h2v2h-2zM136 708h3v2h-3zM138 520h3v2h-3zM619 764h2v2h-2zM312 262h5v2h-5zM466 495h2v2h-2zM573 617h2v2h-2zM630 407h3v2h-3zM646 302h2v1h-2zM456 233h3v1h-3zM743 186h2v1h-2zM382 542h3v2h-3zM152 389h3v1h-3zM545 474h5v2h-5zM592 185h3v2h-3zM228 455h2v2h-2zM376 387h3v2h-3zM680 629h3v1h-3zM156 177h3v2h-3zM599 48h5v1h-5zM269 233h3v1h-3zM316 718h3v1h-3zM767 560h3v2h-3zM459 383h4v1h-4zM747 515h3v2h-3zM330 681h2v1h-2zM254 483h3v1h-3zM95 78h5v1h-5zM755 532h2v1h-2zM99 549h2v2h-2zM176 267h3v1h-3zM216 587h2v1h-2zM383 132h3v2h-3zM404 132h2v1h-2zM503 187h4v1h-4zM86 356h3v1h-3zM224 390h4v1h-4zM419 473h5v1h-5zM632 77h3v2h-3zM674 360h4v2h-4zM731 580h3v1h-3zM280 531h5v1h-5zM643 371h3v1h-3zM306 710h3v2h-3zM5 318h3v2h-3zM497 633h3v2h-3zM405 243h4v1h-4zM632 623h4v1h-4zM183 602h5v1h-5zM79 150h2v1h-2zM60 699h5v2h-5zM134 77h2v1h-2zM411 434h2v1h-2zM281 308h4v2h-4zM448 601h3v1h-3zM743 574h5v2h-5zM248 258h3v1h-3zM76 319h3v1h-3zM756 559h3v1h-3zM41 693h2v2h-2zM343 542h3v1h-3zM106 407h5v1h-5zM409 606h3v2h-3zM160 113h3v2h-3zM643 665h3v1h-3zM506 299h3v1h-3zM480 576h4v2h-4zM551 51h5v1h-5zM516 634h3v1h-3zM407 421h3v2h-3zM83 335h5v1h-5zM558 215h3v1h-3zM192 531h2v1h-2zM768 683h2v1h-2zM607 356h2v2h-2zM506 716h2v1h-2zM805 277h2v1h-2zM629 551h3v1h-3zM197 294h2v2h-2zM323 146h2v2h-2zM193 231h5v1h-5zM234 241h2v1h-2zM632 273h3v2h-3zM71 672h5v2h-5zM662 701h3v1h-3zM803 501h2v2h-2zM156 610h2v1h-2zM225 748h3v2h-3zM753 625h3v1h-3zM222 48h3v1h-3zM369 177h3v2h-3zM394 250h2v2h-2zM793 297h4v1h-4zM555 42h3v2h-3zM501 107h4v1h-4zM608 354h4v1h-4zM714 587h2v1h-2zM64 279h5v2h-5zM211 425h2v2h-2zM590 635h2v2h-2zM408 137h5v1h-5zM583 457h3v1h-3zM648 553h4v1h-4zM514 70h3v2h-3zM30 129h2v2h-2zM587 163h2v2h-2zM455 250h4v2h-4zM183 435h5v1h-5zM78 659h3v2h-3zM207 279h2v2h-2zM104 45h3v2h-3zM177 639h3v1h-3zM774 605h3v2h-3zM685 569h5v2h-5zM803 187h2v1h-2zM21 67h2v1h-2zM182 169h2v1h-2zM609 214h4v2h-4zM564 438h3v2h-3zM541 679h4v1h-4zM110 430h3v2h-3zM645 64h2v1h-2zM554 475h5v2h-5zM53 295h2v2h-2zM369 559h2v2h-2zM321 213h2v2h-2zM630 539h3v1h-3zM692 237h3v1h-3zM505 418h5v1h-5zM87 75h2v1h-2zM687 692h5v2h-5zM678 583h4v2h-4zM383 167h3v2h-3zM548 264h5v1h-5zM402 664h2v2h-2zM538 257h5v1h-5zM500 547h5v2h-5zM327 760h3v1h-3zM611 190h3v2h-3zM521 651h3v2h-3zM404 289h3v2h-3zM203 477h2v1h-2zM800 198h5v2h-5zM469 413h3v1h-3zM498 758h3v1h-3zM322 727h5v1h-5zM51 473h4v1h-4zM756 300h3v2h-3zM72 117h5v2h-5zM208 427h5v2h-5zM671 603h4v1h-4zM678 99h5v2h-5zM773 463h3v2h-3zM233 563h4v2h-4zM723 698h4v2h-4zM143 421h2v2h-2zM698 206h5v2h-5zM429 90h5v2h-5zM273 255h3v1h-3zM178 169h3v1h-3zM382 119h5v2h-5zM277 297h3v1h-3zM141 64h2v2h-2zM236 119h3v1h-3zM84 396h2v2h-2zM456 364h2v1h-2zM523 298h5v1h-5zM86 322h4v1h-4zM628 712h5v1h-5zM353 569h4v2h-4zM630 170h5v2h-5zM550 325h5v2h-5zM354 128h2v2h-2zM134 624h3v1h-3zM208 256h3v1h-3zM179 43h5v2h-5zM661 270h5v1h-5zM740 573h3v1h-3zM117 756h3v2h-3zM266 305h3v2h-3zM591 731h5v1h-5zM299 21h3v2h-3zM606 530h5v1h-5zM651 92h3v1h-3zM476 404h2v1h-2zM501 615h2v1h-2zM82 514h3v2h-3zM486 371h4v1h-4zM477 511h2v2h-2zM151 22h2v2h-2zM79 511h2v1h-2zM125 34h5v1h-5zM266 541h2v1h-2zM112 188h2v1h-2zM99 365h4v2h-4zM98 579h2v2h-2zM748 357h2v1h-2zM568 456h4v1h-4zM251 400h4v1h-4zM789 186h3v2h-3zM715 398h4v1h-4zM320 486h4v2h-4zM591 313h3v1h-3zM205 166h2v1h-2zM454 746h2v2h-2zM346 470h5v2h-5zM132 545h2v1h-2zM719 684h2v2h-2zM303 543h5v1h-5zM57 545h3v2h-3zM446 609h5v1h-5zM609 594h4v2h-4zM750 740h3v2h-3zM525 639h4v1h-4zM400 732h5v1h-5zM298 191h3v1h-3zM289 651h3v1h-3zM314 413h4v1h-4zM560 329h2v1h-2zM159 447h3v1h-3zM484 594h2v1h-2zM428 737h4v2h-4zM146 591h5v2h-5zM242 507h2v1h-2zM186 724h5v2h-5zM687 345h3v2h-3zM798 294h3v1h-3zM531 260h5v2h-5zM269 97h3v1h-3zM442 268h5v2h-5zM372 188h2v1h-2zM524 297h3v2h-3zM511 546h5v2h-5zM347 691h3v1h-3zM720 304h5v2h-5zM114 391h5v2h-5zM132 314h3v2h-3zM561 499h3v2h-3zM346 342h4v1h-4zM330 675h3v2h-3zM661 631h2v2h-2zM468 49h3v1h-3zM379 132h5v1h-5zM331 235h3v2h-3zM596 743h2v1h-2zM86 484h3v1h-3zM240 583h2v1h-2zM527 646h5v1h-5zM498 165h2v2h-2zM61 607h4v2h-4zM456 309h3v1h-3zM362 372h3v2h-3zM510 538h5v2h-5zM243 79h5v2h-5zM235 36h3v2h-3zM207 751h4v2h-4zM489 395h3v1h-3zM464 31h3v2h-3zM326 88h3v1h-3zM279 211h3v1h-3zM516 99h5v1h-5zM752 719h2v1h-2zM789 367h3v2h-3zM410 464h3v1h-3zM321 565h5v2h-5zM815 383h2v2h-2zM369 409h2v1h-2zM269 520h3v2h-3zM89 98h2v2h-2zM720 526h2v1h-2zM273 324h5v1h-5zM445 456h3v1h-3zM187 758h5v2h-5zM28 611h5v1h-5zM77 274h2v1h-2zM784 601h2v2h-2zM744 441h4v1h-4zM367 161h3v2h-3zM644 610h2v1h-2zM152 371h4v1h-4zM444 98h4v1h-4zM146 575h3v1h-3zM695 38h2v2h-2zM12 39h5v2h-5zM365 408h4v1h-4zM161 625h4v2h-4zM689 220h2v1h-2zM111 227h3v1h-3zM14 270h3v1h-3zM398 310h2v2h-2zM674 490h2v2h-2zM305 151h3v2h-3zM220 356h2v2h-2zM96 313h3v2h-3zM178 470h3v1h-3zM473 553h4v2h-4zM461 383h4v2h-4zM762 135h4v2h-4zM267 422h2v1h-2zM270 623h3v1h-3zM382 699h3v2h-3zM211 270h4v2h-4zM67 166h2v1h-2zM337 204h3v2h-3zM548 745h4v2h-4zM795 323h2v1h-2zM477 474h5v1h-5zM85 130h2v2h-2zM472 730h3v2h-3zM392 613h4v1h-4zM738 177h5v2h-5zM634 306h3v1h-3zM791 312h3v1h-3zM785 245h2v2h-2zM404 271h2v2h-2zM167 307h3v1h-3zM714 295h4v1h-4zM672 263h3v1h-3zM414 410h3v1h-3zM115 78h2v1h-2zM433 679h3v1h-3zM808 199h4v2h-4zM198 522h5v1h-5zM581 278h5v1h-5zM120 648h2v1h-2zM514 98h4v2h-4zM186 25h3v2h-3zM365 651h3v1h-3zM392 96h5v2h-5zM658 747h4v1h-4zM516 497h3v1h-3zM166 309h2v1h-2zM616 338h2v2h-2zM770 90h5v2h-5zM335 638h2v2h-2zM652 221h4v2h-4zM675 618h5v2h-5zM538 190h5v2h-5zM476 507h4v1h-4zM521 453h2v1h-2zM741 379h3v2h-3zM350 284h4v2h-4zM469 436h2v2h-2zM292 430h2v1h-2zM270 285h4v2h-4zM267 438h2v2h-2zM580 89h5v2h-5zM127 46h2v2h-2zM614 162h3v1h-3zM194 472h3v2h-3zM210 567h2v2h-2zM441 404h4v2h-4zM192 265h5v1h-5zM416 524h3v1h-3zM350 481h5v1h-5zM643 368h4v1h-4zM237 464h2v1h-2zM465 123h2v1h-2zM12 454h4v1h-4zM661 355h3v1h-3zM306 589h5v1h-5zM120 741h4v2h-4zM110 568h4v1h-4zM463 691h2v2h-2zM721 503h5v2h-5zM3 38h4v1h-4zM328 545h2v1h-2zM577 149h4v2h-4zM77 361h5v2h-5zM535 433h3v2h-3zM116 545h2v1h-2zM341 430h2v2h-2zM815 606h3v2h-3zM797 341h2v1h-2zM117 91h4v2h-4zM649 160h2v1h-2zM11 440h2v2h-2zM58 622h3v1h-3zM463 626h3v1h-3zM6 188h5v2h-5zM449 654h5v2h-5zM663 252h2v2h-2zM448 543h2v1h-2zM206 543h2v1h-2zM355 285h5v2h-5zM456 411h4v2h-4zM111 374h5v1h-5zM401 646h2v1h-2zM461 335h2v2h-2zM177 605h2v2h-2zM220 746h2v1h-2zM166 421h5v2h-5zM712 312h2v1h-2zM784 743h3v2h-3zM153 412h5v1h-5zM400 37h2v1h-2zM702 315h2v2h-2zM411 527h2v1h-2zM556 99h2v1h-2zM532 761h3v2h-3zM352 607h4v1h-4zM385 634h2v2h-2zM459 510h5v1h-5zM782 363h3v1h-3zM272 585h5v1h-5zM715 411h3v2h-3zM41 380h5v1h-5zM192 594h4v1h-4zM403 129h4v1h-4zM404 276h3v2h-3zM497 448h5v2h-5zM370 160h3v1h-3zM804 137h3v1h-3zM359 344h3v1h-3zM400 354h4v2h-4zM545 600h3v1h-3zM83 517h5v1h-5zM266 191h2v2h-2zM147 436h2v1h-2zM296 356h3v1h-3zM339 457h3v2h-3zM119 206h3v2h-3zM158 41h3v2h-3zM236 592h3v1h-3zM367 461h3v1h-3zM239 632h5v1h-5zM450 321h2v2h-2zM462 291h2v1h-2zM804 36h5v1h-5zM541 235h4v1h-4zM342 243h5v2h-5zM127 314h2v1h-2zM109 285h3v1h-3zM677 699h3v2h-3zM259 456h2v2h-2zM501 416h2v2h-2zM589 205h3v1h-3zM438 221h3v1h-3zM563 475h2v2h-2zM487 466h4v1h-4zM717 619h2v2h-2zM274 123h3v2h-3zM148 461h3v2h-3zM425 145h4v1h-4zM479 487h2v1h-2zM467 602h2v2h-2zM312 134h4v1h-4zM320 317h3v2h-3zM809 614h3v1h-3zM316 506h4v1h-4zM514 372h3v2h-3zM305 523h2v1h-2zM385 159h4v2h-4zM547 214h5v2h-5zM236 352h5v2h-5zM19 225h3v1h-3zM707 661h3v2h-3zM787 386h3v2h-3zM737 685h3v2h-3zM159 264h2v1h-2zM372 527h3v1h-3zM96 148h4v2h-4zM434 498h2v2h-2zM325 199h2v1h-2zM446 634h3v1h-3zM605 583h4v2h-4zM258 422h2v1h-2zM372 406h2v1h-2zM147 319h3v1h-3zM626 140h4v1h-4zM564 283h2v1h-2zM657 94h2v2h-2zM265 129h4v1h-4zM127 325h3v2h-3zM521 168h2v1h-2zM620 757h2v1h-2zM373 439h2v1h-2zM763 658h3v2h-3zM278 211h3v1h-3zM728 122h2v1h-2zM550 510h2v2h-2zM342 713h2v1h-2zM621 111h2v2h-2zM661 34h3v1h-3zM179 71h4v1h-4zM188 388h4v1h-4zM470 309h3v1h-3zM596 317h5v2h-5zM90 636h3v1h-3zM283 369h2v2h-2zM19 733h3v1h-3zM527 653h2v1h-2zM552 164h4v2h-4zM274 498h3v2h-3zM366 379h5v1h-5zM584 231h4v1h-4zM264 317h5v2h-5zM698 209h2v1h-2zM518 490h5v1h-5zM266 262h3v1h-3zM697 109h3v2h-3zM96 451h2v1h-2zM423 385h2v1h-2zM550 210h5v1h-5zM379 389h2v1h-2zM628 362h5v1h-5zM805 357h5v2h-5zM532 165h3v2h-3zM134 211h4v1h-4zM727 154h5v2h-5zM799 365h2v2h-2zM145 245h2v2h-2zM259 42h5v1h-5zM227 112h2v1h-2zM311 120h5v2h-5zM422 132h2v2h-2zM127 531h5v1h-5zM366 407h3v2h-3zM456 557h2v2h-2zM448 355h5v2h-5zM565 420h5v2h-5zM505 473h3v1h-3zM715 304h4v1h-4zM44 725h2v2h-2zM578 476h4v2h-4zM287 485h4v2h-4zM669 741h5v1h-5zM40 387h5v2h-5zM662 169h5v1h-5zM45 370h2v2h-2zM26 159h2v1h-2zM747 208h4v1h-4zM738 87h3v2h-3zM527 178h2v1h-2zM363 590h3v2h-3zM471 698h3v1h-3zM393 321h5v1h-5zM40 596h2v1h-2zM458 229h5v2h-5zM511 400h2v2h-2zM204 87h3v2h-3zM26 121h3v1h-3zM472 71h5v2h-5zM580 48h2v1h-2zM677 316h4v1h-4zM356 733h2v1h-2zM564 545h2v1h-2zM30 402h3v2h-3zM167 636h5v1h-5zM415 289h4v2h-4zM644 515h3v1h-3zM536 425h4v1h-4zM425 56h5v1h-5zM222 395h5v2h-5zM378 181h3v2h-3zM6 737h3v2h-3zM265 749h2v2h-2zM675 639h3v1h-3zM143 197h5v1h-5zM33 708h2v1h-2zM204 658h3v1h-3zM345 170h3v1h-3zM313 127h2v1h-2zM130 181h2v1h-2zM264 61h3v1h-3zM507 42h3v1h-3zM501 253h5v2h-5zM17 668h2v2h-2zM246 106h3v1h-3zM495 573h3v2h-3zM280 88h2v1h-2zM500 249h3v2h-3zM748 125h2v1h-2zM100 664h3v2h-3zM227 599h3v1h-3zM805 676h3v1h-3zM618 505h4v1h-4zM346 145h2v2h-2zM779 360h2v2h-2zM740 511h3v1h-3zM456 316h2v2h-2zM119 559h2v1h-2zM103 681h5v1h-5zM294 129h2v2h-2zM384 698h3v1h-3zM703 23h2v2h-2zM13 113h3v2h-3zM598 641h3v1h-3zM770 486h4v1h-4zM669 30h2v2h-2zM658 81h3v1h-3zM404 514h5v2h-5zM578 709h4v2h-4zM367 218h2v1h-2zM657 324h5v1h-5zM62 455h5v1h-5zM745 210h3v1h-3zM486 317h3v1h-3zM795 259h2v2h-2zM454 532h2v1h-2zM286 330h4v1h-4zM450 464h5v2h-5zM83 434h3v1h-3zM524 681h3v1h-3zM15 342h2v2h-2zM689 570h4v1h-4zM783 381h3v2h-3zM406 415h4v1h-4zM732 460h3v1h-3zM756 738h3v1h-3zM620 56h3v2h-3zM192 401h3v2h-3zM672 356h2v1h-2zM771 712h2v1h-2zM745 504h2v2h-2zM812 580h5v1h-5zM170 301h2v2h-2zM162 381h2v2h-2zM788 155h4v1h-4zM407 89h5v2h-5zM418 63h2v1h-2zM87 242h2v2h-2zM693 658h5v2h-5zM622 500h3v2h-3zM49 389h4v2h-4zM466 407h2v1h-2zM552 613h3v1h-3zM186 702h3v2h-3zM119 699h2v2h-2zM347 679h3v2h-3zM636 43h5v2h-5zM75 745h5v2h-5zM131 731h2v1h-2zM179 370h3v1h-3zM799 628h3v2h-3zM429 568h4v2h-4zM350 284h3v1h-3zM525 222h2v1h-2zM446 383h4v1h-4zM613 508h5v2h-5zM214 716h5v1h-5zM561 151h3v2h-3zM294 316h3v2h-3zM562 290h3v1h-3zM411 323h3v1h-3zM462 38h5v2h-5zM309 193h3v2h-3zM526 88h3v1h-3zM303 352h3v1h-3zM247 279h4v2h-4zM85 148h2v2h-2zM428 700h3v1h-3zM27 723h2v1h-2zM210 146h2v2h-2zM127 762h4v1h-4zM250 530h2v2h-2zM370 576h2v1h-2zM278 389h5v2h-5zM22 75h2v2h-2zM381 60h4v1h-4zM790 310h3v2h-3zM578 100h4v1h-4zM263 87h3v1h-3zM235 712h2v1h-2zM645 605h4v2h-4zM464 479h5v2h-5zM11 585h2v1h-2zM684 685h2v2h-2zM419 740h2v2h-2zM121 261h3v2h-3zM45 313h4v1h-4zM405 591h2v2h-2zM266 564h5v2h-5zM275 217h4v2h-4zM464 292h3v2h-3zM766 284h3v1h-3zM471 436h2v1h-2zM437 694h2v2h-2zM543 678h3v1h-3zM31 218h5v1h-5zM448 378h5v2h-5zM745 367h2v2h-2zM658 109h4v2h-4zM660 391h2v2h-2zM37 482h2v1h-2zM697 672h4v1h-4zM450 623h4v1h-4zM465 589h3v1h-3zM83 253h2v1h-2zM48 123h3v2h-3zM164 418h3v2h-3zM330 346h3v1h-3zM599 499h4v1h-4zM687 397h2v1h-2zM644 357h2v1h-2zM475 408h3v1h-3zM254 509h5v2h-5zM115 309h2v2h-2zM639 667h3v2h-3zM304 134h3v1h-3zM808 378h4v1h-4zM133 536h3v2h-3zM431 612h5v2h-5zM210 247h2v2h-2zM480 40h4v1h-4zM182 515h3v2h-3zM727 241h4v1h-4zM677 701h2v2h-2zM267 217h2v2h-2zM103 115h3v2h-3zM45 514h3v2h-3zM360 387h5v2h-5zM756 734h3v2h-3zM139 234h2v2h-2zM559 622h3v1h-3zM803 145h3v1h-3zM121 35h5v1h-5zM762 512h3v1h-3zM676 693h3v2h-3zM82 367h2v2h-2zM232 129h2v1h-2zM376 474h2v1h-2zM664 458h4v2h-4zM312 701h2v1h-2zM512 515h2v2h-2zM247 355h4v2h-4zM318 261h5v2h-5zM706 442h2v1h-2zM477 654h4v1h-4zM767 388h2v2h-2zM301 442h2v2h-2zM557 231h5v1h-5zM102 695h5v2h-5zM406 532h2v1h-2zM258 114h2v1h-2zM588 741h4v1h-4zM410 632h5v2h-5zM473 550h3v2h-3zM715 46h5v2h-5zM492 303h4v2h-4zM530 83h4v2h-4zM194 144h5v2h-5zM166 633h4v1h-4zM705 298h3v2h-3zM378 182h2v1h-2zM737 505h3v1h-3zM39 273h2v2h-2zM723 441h4v1h-4zM221 753h2v1h-2zM495 227h4v2h-4zM570 282h2v2h-2zM609 674h2v2h-2zM444 647h2v2h-2zM559 552h2v2h-2zM80 415h3v1h-3zM398 411h4v1h-4zM71 336h2v1h-2zM116 179h5v2h-5zM328 310h2v2h-2zM441 652h3v1h-3zM640 359h2v1h-2zM108 212h4v1h-4zM490 275h5v1h-5zM296 524h2v2h-2zM549 439h2v1h-2zM55 199h3v1h-3zM672 467h2v2h-2zM49 574h4v2h-4zM205 558h4v2h-4zM349 369h2v2h-2zM623 620h2v1h-2zM579 497h4v1h-4zM54 36h5v2h-5zM97 433h3v2h-3zM530 75h4v1h-4zM171 647h5v2h-5zM13 130h2v1h-2zM108 404h2v2h-2zM555 162h2v1h-2zM383 282h3v1h-3zM493 312h3v1h-3zM295 387h2v2h-2zM318 277h5v1h-5zM162 540h2v1h-2zM118 502h3v2h-3zM601 532h3v1h-3zM177 419h3v1h-3zM445 37h3v2h-3zM422 401h2v1h-2zM469 440h3v2h-3zM468 173h5v1h-5zM659 650h2v1h-2zM497 64h3v2h-3zM499 741h3v1h-3zM771 587h5v2h-5zM109 217h2v1h-2zM562 343h2v2h-2zM527 169h2v2h-2zM504 160h3v1h-3zM464 549h4v2h-4zM191 610h3v2h-3zM433 363h2v2h-2zM56 506h4v1h-4zM278 393h3v1h-3zM401 621h2v1h-2zM266 647h3v2h-3zM294 145h2v1h-2zM148 438h2v1h-2zM789 670h2v2h-2zM406 681h2v1h-2zM103 623h2v1h-2zM703 46h3v1h-3zM592 540h4v1h-4zM739 429h3v1h-3zM113 430h3v1h-3zM113 142h4v1h-4zM78 658h2v1h-2zM312 232h3v1h-3zM82 194h5v1h-5zM337 622h2v2h-2zM769 263h2v2h-2zM55 626h2v1h-2zM415 166h3v1h-3zM228 410h5v1h-5zM800 669h2v1h-2zM659 402h3v1h-3zM401 71h5v1h-5zM734 93h2v1h-2zM404 446h3v1h-3zM461 384h3v2h-3zM245 662h3v2h-3zM801 41h3v1h-3zM122 157h2v2h-2zM373 233h2v2h-2zM111 188h2v1h-2zM524 436h2v1h-2zM109 116h4v2h-4zM130 350h5v1h-5zM697 306h2v1h-2zM744 61h3v2h-3zM496 532h5v1h-5zM155 470h5v1h-5zM572 463h5v2h-5zM322 549h2v2h-2zM260 36h2v2h-2zM479 680h4v2h-4zM547 81h5v1h-5zM637 439h4v1h-4zM207 290h3v1h-3zM495 189h4v2h-4zM613 663h3v2h-3zM782 750h2v2h-2zM228 543h4v2h-4zM592 193h4v1h-4zM211 380h3v2h-3zM30 726h2v1h-2zM703 206h3v2h-3zM428 611h2v1h-2zM787 275h3v1h-3zM304 733h3v1h-3zM589 41h5v2h-5zM323 698h4v1h-4zM337 545h2v2h-2zM7 323h2v1h-2zM616 313h2v1h-2zM635 71h4v2h-4zM281 664h5v1h-5zM306 758h4v1h-4zM413 454h5v2h-5zM472 538h4v2h-4zM227 725h2v2h-2zM695 126h4v1h-4zM464 626h3v1h-3zM582 407h2v2h-2zM815 743h4v2h-4zM280 574h2v2h-2zM516 728h3v1h-3zM454 87h3v1h-3zM261 302h2v2h-2zM301 407h5v1h-5zM76 207h3v1h-3zM355 665h2v2h-2zM321 235h2v2h-2zM720 58h2v2h-2zM384 253h5v2h-5zM216 703h5v2h-5zM651 386h3v2h-3zM462 563h3v1h-3zM407 282h5v1h-5zM56 319h3v2h-3zM139 361h5v1h-5zM90 432h2v2h-2zM543 501h4v1h-4zM335 199h5v2h-5zM479 565h3v1h-3zM764 447h3v2h-3zM550 550h5v2h-5zM558 49h5v1h-5zM449 196h2v2h-2zM36 122h3v2h-3zM107 57h3v1h-3zM361 166h3v2h-3zM233 159h2v1h-2zM46 79h3v2h-3zM388 495h4v2h-4zM257 563h5v1h-5zM87 142h3v2h-3zM362 544h4v2h-4zM191 762h5v2h-5zM773 661h2v2h-2zM435 107h3v2h-3zM626 728h2v1h-2zM531 382h2v2h-2zM256 70h2v1h-2zM38 594h3v1h-3zM534 27h2v1h-2zM592 717h3v1h-3zM725 229h2v2h-2zM536 745h2v1h-2zM371 377h4v1h-4zM619 48h2v2h-2zM772 401h3v2h-3zM101 563h2v1h-2zM308 78h2v1h-2zM295 612h3v1h-3zM270 685h2v1h-2zM301 758h2v2h-2zM790 237h3v2h-3zM775 592h3v2h-3zM800 296h5v1h-5zM235 160h2v2h-2zM524 413h2v2h-2zM798 371h4v2h-4zM548 324h2v1h-2zM662 232h4v1h-4zM540 390h4v1h-4zM790 723h3v1h-3zM57 337h4v1h-4zM553 422h3v1h-3zM643 266h5v2h-5zM494 543h3v2h-3zM133 635h3v2h-3zM254 441h4v1h-4zM324 216h3v2h-3zM25 340h4v1h-4zM678 31h3v2h-3zM309 423h2v2h-2zM421 211h2v2h-2zM565 378h3v2h-3zM151 175h3v2h-3zM289 389h5v2h-5zM585 729h2v2h-2zM735 59h2v1h-2zM287 758h4v1h-4zM377 345h5v1h-5zM418 420h3v1h-3zM332 414h5v1h-5zM675 275h3v1h-3zM793 481h3v2h-3zM9 255h3v1h-3zM332 664h2v2h-2zM375 175h5v2h-5zM765 541h3v2h-3zM460 86h3v2h-3zM301 416h3v1h-3zM275 227h5v1h-5zM572 637h3v1h-3zM127 703h2v1h-2zM366 373h4v1h-4zM610 165h3v2h-3zM78 722h3v2h-3zM285 751h2v1h-2zM520 743h3v2h-3zM287 687h2v2h-2zM23 749h3v1h-3zM527 530h2v1h-2zM230 340h4v1h-4zM589 759h4v1h-4zM225 181h3v1h-3zM223 592h4v2h-4zM530 275h2v1h-2zM387 426h2v1h-2zM760 176h3v2h-3zM178 307h2v1h-2zM616 514h2v2h-2zM126 203h3v1h-3zM543 671h3v2h-3zM654 141h2v2h-2zM336 702h3v2h-3zM492 125h3v1h-3zM554 638h5v1h-5zM71 253h3v2h-3zM62 565h2v1h-2zM579 176h2v1h-2zM309 633h4v2h-4zM347 465h2v2h-2zM200 522h2v1h-2zM297 329h3v2h-3zM530 612h2v1h-2zM225 158h3v1h-3zM550 559h2v1h-2zM508 81h2v2h-2zM277 604h3v1h-3zM158 520h2v1h-2zM249 145h2v2h-2zM683 196h5v2h-5zM806 500h2v1h-2zM726 698h3v1h-3zM247 211h2v2h-2zM664 169h2v1h-2zM504 440h3v1h-3zM270 719h2v1h-2zM382 248h2v2h-2zM606 507h2v1h-2zM292 453h2v2h-2zM159 665h4v1h-4zM527 741h3v1h-3zM733 520h5v2h-5zM382 446h4v2h-4zM322 374h5v1h-5zM398 314h3v1h-3zM351 317h3v1h-3zM8 119h4v2h-4zM416 66h2v1h-2zM716 256h5v2h-5zM585 246h4v2h-4zM29 194h2v1h-2zM438 238h3v1h-3zM421 273h3v2h-3zM383 350h3v2h-3zM232 183h4v2h-4zM199 284h3v2h-3zM510 517h4v1h-4zM340 750h4v1h-4zM786 170h4v2h-4zM253 762h3v1h-3zM693 600h3v2h-3zM436 516h2v1h-2zM311 765h3v2h-3z"/><path fill="#070766" d="M581 147h2v1h-2zM408 71h2v1h-2zM731 85h4v1h-4zM510 717h4v2h-4zM309 558h3v2h-3zM286 161h3v2h-3zM617 74h2v1h-2zM214 649h3v1h-3zM149 125h5v2h-5zM542 391h2v1h-2zM173 385h2v2h-2zM629 220h2v2h-2zM711 640h3v2h-3zM446 672h3v1h-3zM741 426h3v2h-3zM132 49h2v2h-2zM151 647h4v2h-4zM680 618h4v2h-4zM21 471h2v1h-2zM155 197h2v2h-2zM125 590h2v2h-2zM545 589h3v1h-3zM102 540h3v1h-3zM66 474h3v1h-3zM42 206h3v1h-3zM277 38h5v1h-5zM459 129h5v2h-5zM561 423h4v2h-4zM683 411h4v2h-4zM543 179h5v2h-5zM739 527h2v2h-2zM660 169h2v2h-2zM519 163h4v1h-4zM387 483h4v1h-4zM5 488h2v1h-2zM69 506h3v1h-3zM238 686h3v2h-3zM80 511h5v2h-5zM152 360h3v2h-3zM690 122h5v1h-5zM538 289h3v1h-3zM648 541h3v1h-3zM125 360h2v2h-2zM605 99h3v2h-3zM51 308h2v1h-2zM448 544h3v1h-3zM751 441h3v1h-3zM758 689h3v2h-3zM251 113h2v2h-2zM328 265h3v2h-3zM772 84h3v2h-3zM643 278h4v2h-4zM407 223h2v2h-2zM780 323h2v2h-2zM612 166h3v1h-3zM190 423h3v2h-3zM539 499h2v2h-2zM318 463h2v1h-2zM66 84h3v1h-3zM510 208h2v2h-2zM438 128h2v2h-2zM637 711h2v1h-2zM253 262h2v2h-2zM253 540h4v1h-4zM184 480h4v2h-4zM263 60h4v1h-4zM321 100h2v1h-2zM406 700h4v1h-4zM95 689h2v2h-2zM435 137h2v2h-2zM46 515h3v1h-3zM653 418h2v1h-2zM229 656h3v1h-3zM254 763h2v1h-2zM615 487h4v2h-4zM783 654h3v1h-3zM135 105h5v2h-5zM525 102h2v2h-2zM493 234h4v2h-4zM415 186h5v2h-5zM387 193h3v1h-3zM85 473h2v1h-2zM601 700h3v1h-3zM272 32h2v2h-2zM532 643h5v2h-5zM744 260h4v2h-4zM402 658h4v1h-4zM638 186h3v1h-3zM33 63h2v1h-2zM789 637h4v2h-4zM793 121h3v2h-3zM552 600h2v1h-2zM505 732h2v2h-2zM653 103h3v1h-3zM336 555h2v2h-2zM275 329h5v1h-5zM442 738h4v2h-4zM685 760h5v1h-5zM435 515h3v1h-3zM590 488h4v1h-4zM783 146h5v2h-5zM78 449h3v2h-3zM303 582h5v1h-5zM482 384h2v2h-2zM741 308h3v1h-3zM330 512h3v2h-3zM396 79h2v2h-2zM145 564h3v1h-3zM812 568h2v1h-2zM220 564h2v2h-2zM330 500h5v2h-5zM694 98h2v2h-2zM31 42h4v1h-4zM149 55h2v2h-2zM352 453h3v1h-3zM280 539h3v1h-3zM308 151h4v1h-4zM196 507h4v1h-4zM558 647h3v1h-3zM673 34h3v1h-3zM37 347h2v2h-2zM594 76h3v1h-3zM424 582h2v1h-2zM376 751h5v1h-5zM64 657h5v2h-5zM745 36h2v2h-2zM254 406h3v2h-3zM770 760h2v2h-2zM187 738h3v2h-3zM507 404h2v2h-2zM808 104h2v2h-2zM30 73h2v2h-2zM725 113h3v2h-3zM264 381h2v1h-2zM150 346h2v1h-2zM307 624h4v2h-4zM635 403h5v1h-5zM376 167h3v1h-3zM496 137h2v1h-2zM808 705h2v2h-2zM187 162h2v1h-2zM629 706h5v1h-5zM209 31h2v2h-2zM578 396h2v1h-2zM252 349h5v2h-5zM717 220h3v1h-3zM654 611h3v1h-3zM126 436h2v1h-2zM152 705h4v2h-4zM170 39h5v2h-5zM345 753h3v2h-3zM408 485h5v1h-5zM640 300h5v1h-5zM755 110h5v2h-5zM626 732h4v1h-4zM363 187h2v2h-2zM792 43h2v1h-2zM695 179h3v2h-3zM145 712h2v2h-2zM587 174h3v2h-3zM623 134h3v2h-3zM363 421h4v2h-4zM551 332h2v2h-2zM12 47h2v2h-2zM385 533h3v1h-3zM433 519h3v2h-3zM115 692h3v2h-3zM648 672h5v1h-5zM409 121h4v1h-4zM203 200h3v2h-3zM79 195h4v2h-4zM629 461h2v1h-2zM175 54h3v1h-3zM598 65h3v1h-3zM410 749h3v1h-3zM193 28h3v2h-3zM668 88h2v2h-2zM489 537h2v1h-2zM693 155h5v2h-5zM524 238h2v1h-2zM729 109h5v1h-5zM119 298h4v1h-4zM777 331h2v2h-2zM567 339h5v1h-5zM116 692h3v1h-3zM694 736h2v2h-2zM122 582h3v1h-3zM160 634h3v2h-3zM167 353h3v2h-3zM95 680h3v2h-3zM223 527h3v2h-3zM234 188h2v2h-2zM636 104h2v2h-2zM353 564h5v1h-5zM229 715h5v2h-5zM428 389h4v1h-4zM233 575h4v1h-4zM604 601h2v2h-2zM452 158h4v1h-4zM740 548h2v2h-2zM403 578h2v1h-2zM795 116h2v2h-2zM365 193h3v2h-3zM383 546h5v2h-5zM23 520h2v1h-2zM191 174h4v2h-4zM156 519h4v2h-4zM38 97h2v2h-2zM256 491h4v1h-4zM67 533h3v2h-3zM791 118h2v2h-2zM651 122h3v2h-3zM723 366h5v2h-5zM363 500h3v2h-3zM265 580h2v1h-2zM460 226h4v2h-4zM665 122h2v1h-2zM279 570h5v1h-5zM30 238h3v2h-3zM29 685h3v2h-3zM347 199h2v2h-2zM91 662h4v2h-4zM614 430h3v2h-3zM698 623h4v1h-4zM618 609h3v1h-3zM266 749h3v1h-3zM318 688h4v2h-4zM11 592h3v1h-3zM794 470h2v2h-2zM362 120h2v2h-2zM94 445h3v2h-3zM35 620h2v1h-2zM239 609h3v1h-3zM231 722h4v1h-4zM560 533h2v2h-2zM81 378h2v1h-2zM652 26h2v2h-2zM749 407h2v1h-2zM664 502h4v2h-4zM67 423h4v2h-4zM785 292h3v2h-3zM358 555h4v2h-4zM542 194h3v1h-3zM158 698h3v1h-3zM440 146h3v1h-3zM386 126h3v2h-3zM537 554h3v2h-3zM283 426h3v2h-3zM462 670h3v1h-3zM450 114h4v2h-4zM208 152h3v2h-3zM730 615h3v1h-3zM140 545h2v1h-2zM58 584h5v2h-5zM351 226h3v1h-3zM333 57h3v1h-3zM300 226h5v1h-5zM656 148h2v1h-2zM426 250h5v2h-5zM455 723h3v1h-3zM714 157h2v1h-2zM302 259h4v2h-4zM35 356h3v1h-3zM374 204h2v2h-2zM743 593h3v1h-3zM680 113h3v1h-3zM17 129h2v2h-2zM641 551h2v2h-2zM611 546h5v1h-5zM423 437h2v1h-2zM736 378h4v1h-4zM712 331h2v2h-2zM470 596h2v2h-2zM703 748h2v2h-2zM406 662h5v2h-5zM417 110h2v2h-2zM87 383h3v2h-3zM701 663h2v2h-2zM467 599h5v2h-5zM710 39h2v1h-2zM460 339h4v1h-4zM9 298h2v1h-2zM559 47h3v2h-3zM330 469h3v1h-3zM372 424h3v2h-3zM639 482h4v2h-4zM550 502h5v2h-5zM370 292h2v1h-2zM100 638h5v2h-5zM730 134h3v1h-3zM742 670h5v1h-5zM5 608h5v1h-5zM415 240h4v2h-4zM697 156h2v1h-2zM723 741h3v2h-3zM792 638h4v2h-4zM231 337h2v2h-2zM334 244h2v2h-2zM66 666h3v1h-3zM58 401h4v2h-4zM259 94h5v2h-5zM204 741h5v1h-5zM208 594h5v2h-5zM429 34h5v2h-5zM315 128h2v1h-2zM433 51h5v2h-5zM353 130h2v2h-2zM484 518h2v2h-2zM199 748h3v2h-3zM131 225h3v2h-3zM653 722h5v2h-5zM691 751h2v2h-2zM615 411h2v1h-2zM236 26h3v1h-3zM481 39h3v1h-3zM729 119h2v1h-2zM807 411h2v1h-2zM571 684h2v1h-2zM521 489h2v1h-2zM629 109h4v2h-4zM782 323h2v2h-2zM752 102h2v1h-2zM33 707h5v1h-5zM725 158h3v2h-3zM168 690h5v2h-5zM419 552h5v1h-5zM123 201h4v2h-4zM172 728h5v2h-5zM216 677h3v1h-3zM677 698h4v2h-4zM60 413h3v1h-3zM391 51h2v1h-2zM782 414h3v1h-3zM229 516h5v1h-5zM473 155h2v2h-2zM13 663h5v1h-5zM705 53h4v1h-4zM331 63h3v1h-3zM38 313h3v1h-3zM762 524h5v1h-5zM424 705h5v1h-5zM266 642h3v2h-3zM536 159h4v2h-4zM601 484h3v2h-3zM573 218h3v1h-3zM261 605h3v1h-3zM538 284h5v1h-5zM508 394h2v1h-2zM274 136h2v1h-2zM778 468h3v1h-3zM121 665h3v1h-3zM723 627h2v2h-2zM310 685h3v1h-3zM17 630h4v2h-4zM280 50h2v1h-2zM621 594h2v1h-2zM75 504h2v1h-2zM197 745h3v2h-3zM238 658h2v2h-2zM65 252h3v2h-3zM124 539h5v2h-5zM572 153h2v2h-2zM37 328h5v1h-5zM788 707h2v1h-2zM620 316h3v2h-3zM504 130h4v2h-4zM30 282h4v2h-4zM748 370h5v1h-5zM422 672h4v1h-4zM661 74h5v1h-5zM316 157h2v2h-2zM58 374h2v2h-2zM144 714h4v1h-4zM562 487h3v2h-3zM67 123h2v2h-2zM28 253h3v1h-3zM511 74h2v2h-2zM320 509h3v2h-3zM592 502h3v2h-3zM321 381h4v1h-4zM373 695h5v1h-5zM529 386h2v1h-2zM620 80h2v2h-2zM757 464h2v2h-2zM772 533h2v1h-2zM575 239h2v1h-2zM33 455h2v2h-2zM794 26h3v1h-3zM208 620h5v1h-5zM235 186h3v2h-3zM305 209h3v2h-3zM484 551h2v2h-2zM753 456h3v2h-3zM403 681h2v2h-2zM588 582h2v1h-2zM150 662h3v2h-3zM162 583h4v2h-4zM294 139h2v1h-2zM22 379h4v2h-4zM60 468h3v1h-3zM739 130h2v1h-2zM154 465h2v1h-2zM749 416h3v1h-3zM167 130h2v1h-2zM591 35h3v2h-3zM806 739h4v1h-4zM372 445h5v1h-5zM706 355h3v2h-3zM86 608h3v2h-3zM439 742h2v1h-2zM138 126h3v2h-3zM741 327h2v1h-2zM286 400h2v2h-2zM711 684h3v2h-3zM555 155h3v2h-3zM625 210h2v1h-2zM293 487h5v2h-5zM680 141h2v1h-2zM126 294h4v2h-4zM516 601h4v1h-4zM424 495h4v1h-4zM7 268h3v1h-3zM754 684h5v1h-5zM449 151h5v1h-5zM242 673h2v2h-2zM365 543h4v1h-4zM284 142h5v2h-5zM302 432h5v1h-5zM496 349h5v1h-5zM774 390h5v1h-5zM805 463h5v2h-5zM421 54h3v2h-3zM330 361h2v1h-2zM565 332h3v2h-3zM492 500h2v1h-2zM475 254h4v1h-4zM482 582h3v1h-3zM95 339h3v1h-3zM299 575h2v1h-2zM88 653h5v2h-5zM180 731h2v2h-2zM515 160h5v1h-5zM323 318h4v1h-4zM310 715h2v1h-2zM762 348h4v1h-4zM374 526h3v1h-3zM670 130h2v1h-2zM188 228h3v2h-3zM754 110h2v2h-2zM289 587h2v1h-2zM235 336h2v2h-2zM98 291h3v2h-3zM617 597h5v1h-5zM176 320h5v1h-5zM696 466h3v2h-3zM552 218h3v2h-3zM212 107h3v2h-3zM474 249h3v1h-3zM742 444h2v1h-2zM429 95h4v2h-4zM418 438h2v1h-2zM743 398h5v1h-5zM391 225h3v2h-3zM389 423h4v2h-4zM209 178h3v2h-3zM113 435h3v1h-3zM156 536h2v1h-2zM674 439h3v1h-3zM104 459h2v1h-2zM335 327h4v2h-4zM379 138h3v2h-3zM384 274h3v2h-3zM628 229h2v1h-2zM573 36h2v2h-2zM85 267h5v1h-5zM321 636h3v1h-3zM106 558h2v1h-2zM479 33h3v2h-3zM609 122h3v2h-3zM61 402h4v1h-4zM410 185h2v1h-2zM588 700h5v2h-5zM262 744h5v2h-5zM779 601h3v1h-3zM814 68h5v1h-5zM90 444h2v1h-2zM505 446h3v1h-3zM519 30h3v1h-3zM29 117h2v2h-2zM503 735h3v2h-3zM394 664h3v2h-3zM615 501h3v1h-3zM433 701h4v2h-4zM4 506h2v2h-2zM567 670h5v1h-5zM491 332h5v1h-5zM684 35h2v2h-2zM170 289h2v2h-2zM765 742h5v2h-5zM506 74h2v1h-2zM556 738h2v1h-2zM472 540h2v2h-2zM134 210h3v2h-3zM694 601h3v2h-3zM621 576h2v1h-2zM382 176h2v1h-2zM102 309h5v2h-5zM254 485h5v1h-5zM350 226h2v2h-2zM805 485h4v2h-4zM197 27h3v2h-3zM353 406h5v1h-5zM481 315h4v2h-4zM638 163h2v2h-2zM22 500h3v1h-3zM209 445h3v2h-3zM533 138h4v2h-4zM425 698h3v2h-3zM513 597h4v1h-4zM164 78h3v2h-3zM69 197h5v1h-5zM782 485h5v2h-5zM139 631h5v2h-5zM68 216h3v2h-3zM742 669h3v2h-3zM715 408h2v1h-2zM772 51h4v2h-4zM2 732h3v2h-3zM784 161h5v2h-5zM751 313h2v2h-2zM153 119h3v2h-3zM339 158h2v2h-2zM508 379h3v2h-3zM122 726h3v1h-3zM395 494h3v2h-3zM279 160h3v1h-3zM505 200h2v2h-2zM246 139h3v2h-3zM37 115h3v2h-3zM674 735h5v1h-5zM148 589h5v2h-5zM173 64h3v1h-3zM665 69h5v2h-5zM246 599h2v1h-2zM192 395h2v2h-2zM436 241h2v2h-2zM486 652h2v1h-2zM334 113h3v1h-3zM640 200h5v2h-5zM745 180h3v2h-3zM160 394h2v2h-2zM662 277h2v2h-2zM392 299h2v1h-2zM336 633h2v2h-2zM808 375h5v1h-5zM581 690h5v1h-5zM25 189h4v2h-4zM314 283h2v2h-2zM366 587h3v1h-3zM383 109h2v2h-2zM303 726h2v1h-2zM567 266h3v2h-3zM91 562h3v2h-3zM98 569h4v1h-4zM46 368h3v2h-3zM105 343h2v2h-2zM545 434h5v2h-5zM74 333h5v1h-5zM674 461h2v1h-2zM107 717h2v2h-2zM409 402h4v1h-4zM411 350h2v2h-2zM665 101h3v2h-3zM808 595h3v2h-3zM633 351h2v1h-2zM348 359h5v2h-5zM455 627h5v1h-5zM110 482h2v1h-2zM488 187h3v2h-3zM697 663h2v2h-2zM507 128h2v1h-2zM485 407h5v1h-5zM540 668h2v1h-2zM806 25h4v2h-4zM228 144h5v2h-5zM133 533h3v1h-3zM741 149h4v1h-4zM593 701h5v2h-5zM229 694h5v1h-5zM519 337h5v2h-5zM635 575h5v1h-5zM637 408h4v1h-4zM202 608h3v1h-3zM392 441h2v2h-2zM80 501h3v2h-3zM350 404h5v2h-5zM575 574h5v1h-5zM780 230h2v1h-2zM449 291h5v2h-5zM503 516h2v1h-2zM579 470h4v1h-4zM610 262h3v1h-3zM78 445h4v2h-4zM122 123h3v2h-3zM156 529h2v1h-2zM716 227h4v2h-4zM626 312h2v2h-2zM262 481h2v2h-2zM118 162h2v1h-2zM102 506h4v2h-4zM653 590h2v2h-2zM129 662h3v1h-3zM116 117h3v1h-3zM625 27h2v1h-2zM530 283h2v2h-2zM33 403h5v2h-5zM572 653h3v1h-3zM505 104h3v1h-3zM506 574h3v2h-3zM279 510h2v2h-2zM395 586h5v1h-5zM393 61h3v1h-3zM641 736h3v2h-3zM555 534h2v2h-2zM652 233h2v2h-2zM758 551h2v1h-2zM646 705h4v1h-4zM399 395h2v1h-2zM452 581h3v2h-3zM535 308h2v1h-2zM801 582h3v1h-3zM700 613h3v1h-3zM693 526h3v2h-3zM375 508h3v1h-3zM527 279h2v1h-2zM468 191h3v1h-3zM198 404h3v2h-3zM448 162h3v1h-3zM440 609h4v2h-4zM519 585h2v2h-2zM207 574h2v1h-2zM810 521h2v1h-2zM720 487h2v2h-2zM423 209h5v1h-5zM480 227h3v1h-3zM94 550h2v1h-2zM534 31h5v1h-5zM480 544h4v1h-4zM715 78h2v1h-2zM26 353h2v2h-2zM649 265h5v2h-5zM772 37h2v2h-2zM338 27h3v2h-3zM239 498h4v2h-4zM511 154h3v2h-3zM333 608h2v2h-2zM509 183h3v2h-3zM524 674h4v1h-4zM155 54h3v2h-3zM110 100h2v1h-2zM730 346h4v1h-4zM44 108h4v1h-4zM350 254h2v2h-2zM761 344h4v1h-4zM779 726h2v1h-2zM257 243h4v1h-4zM486 598h5v1h-5zM107 630h2v2h-2zM668 647h3v1h-3zM228 150h5v1h-5zM436 682h2v2h-2zM636 548h2v2h-2zM504 322h3v1h-3zM646 320h3v1h-3zM329 732h2v2h-2zM54 104h3v2h-3zM755 169h4v1h-4zM745 60h4v2h-4zM45 506h5v2h-5zM11 188h4v2h-4zM134 687h3v2h-3zM345 424h2v1h-2zM528 149h2v1h-2zM313 700h2v1h-2zM686 105h2v1h-2zM775 579h3v1h-3zM183 245h3v1h-3zM573 206h3v2h-3zM96 614h3v2h-3zM605 585h4v1h-4zM410 539h4v2h-4zM756 32h3v1h-3zM631 89h4v2h-4zM31 56h2v2h-2zM640 148h2v1h-2zM7 598h3v1h-3zM810 518h3v2h-3zM503 364h2v2h-2zM122 449h2v1h-2zM120 485h5v2h-5zM490 396h2v1h-2zM692 606h2v1h-2zM324 705h2v1h-2zM63 706h3v1h-3zM351 86h4v1h-4zM526 642h2v1h-2zM135 465h3v2h-3zM123 348h3v2h-3zM746 602h2v2h-2zM724 346h3v2h-3zM498 160h3v2h-3zM74 612h2v2h-2zM177 536h3v2h-3zM660 156h3v1h-3zM338 248h3v2h-3zM744 175h3v1h-3zM412 290h3v2h-3zM352 560h3v2h-3zM18 744h3v1h-3zM583 726h3v1h-3zM508 342h3v2h-3zM361 464h4v1h-4zM742 435h5v1h-5zM433 654h2v1h-2zM696 220h3v2h-3zM23 558h2v1h-2zM352 178h3v1h-3zM140 412h3v1h-3zM129 563h5v2h-5zM674 210h2v2h-2zM80 585h5v2h-5zM79 676h3v2h-3zM732 78h2v2h-2zM490 246h3v1h-3zM793 270h2v2h-2zM473 661h3v1h-3zM595 74h2v2h-2zM483 488h3v1h-3zM195 479h2v1h-2zM571 636h5v1h-5zM542 280h3v1h-3zM169 139h5v2h-5zM448 54h4v2h-4zM109 395h3v2h-3zM148 451h4v2h-4zM646 324h2v1h-2zM682 328h5v1h-5zM742 510h4v2h-4zM357 183h3v1h-3zM624 101h4v1h-4zM736 695h3v1h-3zM644 552h4v2h-4zM191 655h3v2h-3zM267 346h3v1h-3zM740 602h2v1h-2zM501 154h3v1h-3zM379 448h5v2h-5zM713 117h2v2h-2zM594 752h3v2h-3zM783 738h5v1h-5zM53 271h5v1h-5zM182 318h2v1h-2zM612 172h3v2h-3zM605 746h2v2h-2zM450 536h5v1h-5zM359 604h2v1h-2zM642 227h5v2h-5zM456 52h2v1h-2zM368 245h3v2h-3zM751 675h2v1h-2zM479 536h3v2h-3zM790 396h4v1h-4zM712 249h2v2h-2zM17 437h5v2h-5zM307 67h3v1h-3zM610 668h3v2h-3zM119 151h2v2h-2zM530 248h5v2h-5zM764 501h2v1h-2zM416 443h3v1h-3zM19 741h2v1h-2zM98 736h2v2h-2zM275 581h3v1h-3zM672 540h2v2h-2zM219 234h3v2h-3zM368 501h2v2h-2zM452 557h5v1h-5zM553 500h5v1h-5zM111 334h4v1h-4zM325 393h3v2h-3zM23 89h4v1h-4zM446 394h2v2h-2zM583 693h4v1h-4zM694 269h2v2h-2zM783 323h5v2h-5zM190 170h3v1h-3zM780 589h5v1h-5zM31 737h2v2h-2zM144 674h2v1h-2zM223 312h3v1h-3zM695 164h3v1h-3zM650 279h2v1h-2zM344 451h2v2h-2zM304 729h2v1h-2zM743 446h2v2h-2zM390 445h2v2h-2zM595 638h4v2h-4zM565 333h3v1h-3zM21 600h3v2h-3zM241 537h2v2h-2zM154 273h4v2h-4zM807 380h5v2h-5zM122 115h4v2h-4zM346 304h4v1h-4zM609 140h3v1h-3zM379 576h2v1h-2zM223 524h3v1h-3zM399 737h2v1h-2zM580 446h3v2h-3zM24 461h3v1h-3zM259 702h3v1h-3zM742 243h4v1h-4zM425 621h4v2h-4zM643 278h3v1h-3zM683 393h3v2h-3zM521 599h3v2h-3zM341 304h2v2h-2zM242 616h5v2h-5zM364 90h2v2h-2zM514 462h2v2h-2zM796 219h2v1h-2zM302 546h3v1h-3zM115 85h2v2h-2zM13 541h2v2h-2zM684 580h3v2h-3zM431 329h3v1h-3zM465 606h5v1h-5zM760 210h4v1h-4zM582 313h2v2h-2zM724 685h2v1h-2zM427 177h2v1h-2zM476 689h2v2h-2zM783 448h4v2h-4zM185 340h2v1h-2zM82 480h2v2h-2zM554 699h5v2h-5zM351 62h3v2h-3zM312 548h2v2h-2zM809 635h2v1h-2zM396 112h3v2h-3zM313 322h3v1h-3zM656 735h2v1h-2zM361 372h3v1h-3zM681 94h5v2h-5zM684 569h2v1h-2zM89 271h2v2h-2zM280 693h3v2h-3zM564 463h3v2h-3zM319 267h3v1h-3zM446 642h4v2h-4zM93 539h5v2h-5zM239 542h2v1h-2zM690 148h4v2h-4zM570 424h5v1h-5zM168 608h5v2h-5zM741 252h2v2h-2zM426 261h2v2h-2zM191 761h2v1h-2zM143 232h4v1h-4zM138 225h5v2h-5zM397 246h2v1h-2zM316 131h3v2h-3zM225 107h2v2h-2zM692 188h3v1h-3zM62 482h3v2h-3zM655 214h2v2h-2zM520 303h3v1h-3zM208 680h2v2h-2zM427 462h2v2h-2zM229 552h5v1h-5zM525 754h2v1h-2zM681 676h3v1h-3zM260 306h3v1h-3zM613 672h2v1h-2zM420 526h2v1h-2zM159 361h2v2h-2zM434 640h5v1h-5zM145 743h2v1h-2zM510 26h5v2h-5zM310 721h2v1h-2zM122 142h5v1h-5zM619 108h4v1h-4zM584 320h4v2h-4zM213 404h3v1h-3zM335 534h3v2h-3zM529 482h4v2h-4zM453 201h2v1h-2zM436 610h4v2h-4zM206 630h3v1h-3zM312 146h2v1h-2zM549 280h3v2h-3zM750 672h4v1h-4zM252 698h2v2h-2zM57 473h3v2h-3zM132 642h4v1h-4zM798 350h3v2h-3zM280 472h3v1h-3zM581 410h2v2h-2zM548 237h2v1h-2zM545 229h2v1h-2zM94 507h2v1h-2zM631 334h3v2h-3zM219 297h2v1h-2zM557 648h2v1h-2zM761 381h3v2h-3zM497 577h3v1h-3zM560 202h4v2h-4zM231 605h3v2h-3zM455 756h5v2h-5zM387 283h2v2h-2zM8 287h2v1h-2zM688 29h3v1h-3zM149 307h2v1h-2zM303 671h2v1h-2zM752 46h2v2h-2zM413 706h3v2h-3zM555 565h5v1h-5zM777 643h3v1h-3zM152 510h2v1h-2zM341 479h5v1h-5zM208 57h5v2h-5zM152 539h2v1h-2zM398 282h5v2h-5zM578 33h4v2h-4zM132 246h2v2h-2zM16 530h3v2h-3zM246 699h2v2h-2zM500 70h2v2h-2zM476 147h2v2h-2zM600 711h3v1h-3zM225 704h3v1h-3zM254 351h4v2h-4zM325 440h3v2h-3zM130 286h4v2h-4zM407 491h2v2h-2zM292 233h3v1h-3zM563 440h5v2h-5zM557 219h2v2h-2zM487 651h3v1h-3zM540 478h4v2h-4zM236 558h3v1h-3zM612 641h2v2h-2zM417 33h3v2h-3zM617 246h5v1h-5zM484 480h3v1h-3zM489 255h4v2h-4zM731 410h4v1h-4zM119 248h4v2h-4zM585 318h2v2h-2zM713 402h2v2h-2zM135 692h2v2h-2zM389 307h3v1h-3zM654 749h5v2h-5zM678 393h5v1h-5zM375 251h3v2h-3zM231 264h3v1h-3zM801 540h2v2h-2zM55 225h2v1h-2zM99 268h5v2h-5zM338 546h5v1h-5zM377 249h3v1h-3zM272 531h5v2h-5zM67 38h5v1h-5zM474 74h3v1h-3zM423 87h3v1h-3zM518 749h3v1h-3zM136 507h3v1h-3zM503 594h3v2h-3zM368 245h3v2h-3zM453 287h4v1h-4zM336 114h2v2h-2zM634 547h2v2h-2zM803 235h3v1h-3zM609 398h2v2h-2zM303 521h5v2h-5zM208 103h4v2h-4zM300 152h4v2h-4zM129 593h5v2h-5zM368 504h3v2h-3zM305 300h3v2h-3zM680 190h2v2h-2zM789 553h5v1h-5zM585 79h2v1h-2zM116 75h2v1h-2zM112 167h5v1h-5zM148 697h2v1h-2zM194 236h2v2h-2zM589 538h3v2h-3zM634 231h5v2h-5zM46 481h5v1h-5zM590 460h4v2h-4zM23 705h2v2h-2zM637 220h2v2h-2zM197 692h4v2h-4zM739 759h2v1h-2zM194 742h3v1h-3zM171 615h3v2h-3zM507 545h2v1h-2zM100 94h3v1h-3zM196 636h3v1h-3zM309 738h2v2h-2zM205 108h5v2h-5zM390 757h2v2h-2zM457 636h3v1h-3zM385 363h5v2h-5zM808 29h3v2h-3zM343 408h3v2h-3zM451 718h3v2h-3zM622 191h2v1h-2zM330 674h3v1h-3zM139 196h3v1h-3zM393 268h5v1h-5zM327 743h5v1h-5zM241 431h4v1h-4zM61 45h3v2h-3zM122 644h3v2h-3zM384 115h4v2h-4zM118 512h5v2h-5zM719 201h5v2h-5zM542 533h2v1h-2zM610 568h3v2h-3zM351 491h2v2h-2zM388 335h3v1h-3zM703 321h2v1h-2zM497 403h4v2h-4zM83 269h4v1h-4zM721 220h3v2h-3zM730 83h3v1h-3zM165 625h5v1h-5zM392 180h5v2h-5zM347 632h3v2h-3zM200 630h3v1h-3zM396 399h2v1h-2zM373 669h5v1h-5zM478 114h3v2h-3zM276 313h3v1h-3zM265 230h4v2h-4zM407 198h2v1h-2zM792 32h2v1h-2zM358 694h5v1h-5zM811 504h3v2h-3zM46 158h3v2h-3zM807 349h3v1h-3zM198 576h3v1h-3zM573 423h4v2h-4zM393 104h5v1h-5zM605 211h2v1h-2zM45 73h5v2h-5zM309 122h2v1h-2zM293 456h3v1h-3zM34 502h3v2h-3zM540 548h2v1h-2zM10 331h4v1h-4zM263 401h2v2h-2zM536 476h3v2h-3zM146 422h2v1h-2zM808 163h3v2h-3zM89 63h2v2h-2zM746 297h3v2h-3zM464 405h3v2h-3zM768 223h3v1h-3zM406 141h5v1h-5zM85 386h2v2h-2zM388 101h3v2h-3zM132 519h5v1h-5zM192 625h3v1h-3zM473 495h5v2h-5zM125 728h4v1h-4zM450 537h5v2h-5zM550 57h5v2h-5zM474 381h3v2h-3zM251 374h2v2h-2zM591 114h3v1h-3zM299 170h5v2h-5zM242 517h3v2h-3zM546 479h5v2h-5zM219 641h2v2h-2zM502 38h3v2h-3zM49 508h3v2h-3zM498 50h2v2h-2zM693 529h4v1h-4zM134 81h5v1h-5zM274 745h4v2h-4zM714 115h2v1h-2zM791 245h2v1h-2zM263 165h4v2h-4zM374 596h2v2h-2zM431 684h3v2h-3zM55 727h3v1h-3zM259 344h4v1h-4zM442 159h5v2h-5zM120 569h2v1h-2zM579 372h2v1h-2zM191 515h3v2h-3zM667 551h4v1h-4zM438 146h3v2h-3zM34 580h2v1h-2zM714 590h3v2h-3zM440 501h3v2h-3zM300 565h3v1h-3zM718 63h5v1h-5zM566 164h5v2h-5zM603 181h3v2h-3zM270 712h3v1h-3zM7 554h3v1h-3zM220 742h3v1h-3zM461 27h4v2h-4zM118 758h4v1h-4zM546 711h2v2h-2zM382 265h2v2h-2zM478 274h2v2h-2zM517 476h2v2h-2zM269 305h4v1h-4zM753 495h2v1h-2zM254 323h3v1h-3zM347 737h3v2h-3zM53 757h2v1h-2zM484 428h4v2h-4zM162 153h3v2h-3zM798 81h3v1h-3zM317 672h3v1h-3zM230 414h3v1h-3zM745 239h2v2h-2zM374 323h4v1h-4zM736 279h2v2h-2zM352 295h4v1h-4zM639 441h3v1h-3zM728 696h2v2h-2zM262 645h2v1h-2zM23 124h2v1h-2zM785 472h2v2h-2zM778 403h4v2h-4zM747 606h3v1h-3zM142 273h2v2h-2zM226 636h2v2h-2zM655 88h2v2h-2zM380 96h3v1h-3zM27 664h2v1h-2zM558 211h2v1h-2zM741 254h3v1h-3zM179 324h3v1h-3zM432 85h4v2h-4zM564 635h5v1h-5zM755 542h3v1h-3zM59 75h5v1h-5zM663 621h4v2h-4zM269 647h5v2h-5zM449 754h4v1h-4zM387 476h2v1h-2zM377 564h2v2h-2zM454 208h3v2h-3zM711 334h4v1h-4zM746 360h4v2h-4zM259 350h5v1h-5zM407 519h5v2h-5zM737 369h2v1h-2zM335 73h3v2h-3zM339 556h5v1h-5zM527 239h5v1h-5zM756 103h3v2h-3zM319 695h3v2h-3zM597 91h3v2h-3zM592 287h3v1h-3zM457 332h5v2h-5zM603 497h2v2h-2zM219 488h3v2h-3zM709 143h5v2h-5zM751 40h2v1h-2zM520 294h2v2h-2zM110 227h5v2h-5zM254 759h2v1h-2zM19 288h2v2h-2zM785 354h2v1h-2zM602 544h2v2h-2zM618 298h2v1h-2zM797 423h2v1h-2zM186 714h3v1h-3zM717 669h2v1h-2zM540 419h2v1h-2zM443 123h3v2h-3zM438 244h5v2h-5zM441 340h2v2h-2zM595 211h2v1h-2zM337 674h5v1h-5zM417 188h5v1h-5zM587 58h2v1h-2zM685 472h2v1h-2zM314 422h3v2h-3zM533 377h5v2h-5zM580 418h4v1h-4zM442 132h3v1h-3zM674 215h4v2h-4zM195 133h3v2h-3zM187 272h2v2h-2zM603 700h2v1h-2zM394 45h5v2h-5zM54 329h3v2h-3zM440 328h3v2h-3zM151 199h3v2h-3zM450 282h2v1h-2zM347 670h2v2h-2zM395 122h5v2h-5zM631 728h3v2h-3zM572 119h3v1h-3zM195 27h3v1h-3zM606 721h3v2h-3zM365 271h2v2h-2zM29 236h4v2h-4zM38 199h4v1h-4zM372 113h3v2h-3zM374 258h3v1h-3zM501 222h2v1h-2zM560 496h3v2h-3zM148 448h4v1h-4zM725 75h2v1h-2zM504 303h2v1h-2zM173 175h2v1h-2zM565 646h2v2h-2zM752 178h3v2h-3zM387 672h3v1h-3zM446 242h2v1h-2zM773 110h2v1h-2zM788 52h2v1h-2zM305 410h2v1h-2zM161 278h2v2h-2zM8 241h3v1h-3zM789 243h2v1h-2zM415 324h4v1h-4zM620 640h4v2h-4zM425 219h3v1h-3zM732 688h3v1h-3zM737 378h2v2h-2zM352 633h5v2h-5zM44 354h3v1h-3zM429 308h4v1h-4zM70 262h5v1h-5zM224 419h5v2h-5zM574 146h5v1h-5zM275 264h2v2h-2zM682 628h5v2h-5zM557 375h2v2h-2zM534 315h4v2h-4zM680 655h3v1h-3zM714 402h4v2h-4zM309 256h3v2h-3zM225 314h3v1h-3zM231 102h4v1h-4zM449 646h3v1h-3zM700 237h2v1h-2zM793 189h5v1h-5zM63 318h5v2h-5zM596 510h5v1h-5zM179 108h5v2h-5zM534 650h5v1h-5zM466 181h2v2h-2zM602 303h2v2h-2zM711 294h2v2h-2zM700 355h2v2h-2zM702 94h5v2h-5zM695 465h4v1h-4zM378 643h5v2h-5zM125 163h2v2h-2zM508 254h2v1h-2zM235 326h3v2h-3zM321 237h3v2h-3zM162 218h5v1h-5zM492 169h4v2h-4zM223 335h3v1h-3zM637 188h2v2h-2zM411 626h3v2h-3zM84 363h5v2h-5zM657 343h4v2h-4zM771 717h2v1h-2zM788 294h4v2h-4zM671 554h5v1h-5zM164 693h3v1h-3zM708 542h3v2h-3zM347 681h3v2h-3zM723 460h4v1h-4zM691 186h2v1h-2zM346 87h3v2h-3zM140 579h2v2h-2zM318 96h4v1h-4zM809 204h2v2h-2zM559 547h2v1h-2zM387 393h3v2h-3zM566 646h3v2h-3zM703 652h5v1h-5zM4 371h5v1h-5zM680 505h2v1h-2zM600 31h5v2h-5zM772 268h4v2h-4zM688 510h3v2h-3zM762 704h2v1h-2zM798 674h4v2h-4zM189 347h3v1h-3zM691 490h4v1h-4zM417 97h3v2h-3zM64 276h2v2h-2zM418 440h2v2h-2zM294 267h2v2h-2zM618 721h2v2h-2zM526 41h2v2h-2zM577 215h2v2h-2zM415 105h5v2h-5zM600 34h5v1h-5zM540 314h5v1h-5zM782 375h2v1h-2zM560 85h3v1h-3zM681 669h5v1h-5zM474 291h4v1h-4zM192 34h3v2h-3zM356 429h2v1h-2zM410 499h2v2h-2zM558 707h3v1h-3zM303 348h5v2h-5zM143 680h2v1h-2zM491 349h5v1h-5zM228 560h3v2h-3zM802 143h3v1h-3zM342 649h3v1h-3zM59 587h2v2h-2zM535 645h4v1h-4zM131 241h2v2h-2zM554 455h5v2h-5zM190 578h3v2h-3zM231 678h5v1h-5zM141 245h5v1h-5zM47 734h3v1h-3zM591 449h5v2h-5zM613 653h2v2h-2zM218 59h4v1h-4zM370 282h2v2h-2zM317 168h2v1h-2zM225 121h5v2h-5zM355 30h2v1h-2zM611 115h2v2h-2zM549 268h3v2h-3zM58 198h5v1h-5zM442 164h5v2h-5zM188 548h3v2h-3zM438 126h2v2h-2zM44 546h3v1h-3zM410 257h3v1h-3zM288 50h4v2h-4zM668 559h3v1h-3zM457 624h2v1h-2zM52 737h2v2h-2zM164 748h3v1h-3zM124 245h3v2h-3zM520 439h5v1h-5zM375 709h2v1h-2zM213 363h2v2h-2zM715 408h5v1h-5zM702 713h3v1h-3zM557 278h4v1h-4zM454 659h4v1h-4zM314 172h3v2h-3zM603 232h3v1h-3zM458 638h5v1h-5zM735 746h5v1h-5zM118 605h2v2h-2zM89 336h3v1h-3zM657 354h2v1h-2zM655 373h5v1h-5zM91 623h3v2h-3zM70 144h4v1h-4zM319 181h3v2h-3zM47 190h3v2h-3zM6 607h5v2h-5zM42 333h2v2h-2zM629 574h3v2h-3zM603 107h2v1h-2zM642 86h5v2h-5zM125 113h3v1h-3zM753 335h3v2h-3zM467 638h2v1h-2zM580 736h2v1h-2zM212 55h3v2h-3zM106 450h3v1h-3zM483 516h5v2h-5zM464 497h2v1h-2zM479 423h2v1h-2zM774 593h2v1h-2zM815 583h2v2h-2zM303 275h5v2h-5zM14 186h5v1h-5zM16 640h5v2h-5zM438 208h3v2h-3zM627 533h2v2h-2zM692 485h2v2h-2zM91 583h3v1h-3zM244 691h3v2h-3zM419 327h4v1h-4zM615 374h2v2h-2zM183 92h2v1h-2zM115 271h2v1h-2zM378 296h5v1h-5zM86 113h3v2h-3zM588 359h4v1h-4zM338 600h4v1h-4zM394 366h2v1h-2zM538 599h3v2h-3zM234 234h5v1h-5zM267 742h5v1h-5zM18 185h5v1h-5zM779 741h4v1h-4zM648 608h2v2h-2zM526 697h3v1h-3zM537 189h5v2h-5zM444 561h2v2h-2zM571 271h3v2h-3zM428 707h2v2h-2zM720 217h5v1h-5zM4 408h5v2h-5zM707 669h5v1h-5zM630 672h3v1h-3zM348 261h2v2h-2zM738 461h3v1h-3zM78 750h5v1h-5zM340 670h4v1h-4zM562 729h2v1h-2zM768 164h2v2h-2zM629 721h2v2h-2zM689 174h3v1h-3zM57 255h2v1h-2zM92 34h3v2h-3zM764 108h5v1h-5zM57 677h3v1h-3zM476 134h5v1h-5zM759 676h2v1h-2zM243 93h5v1h-5zM340 488h3v2h-3zM327 434h3v1h-3zM395 537h3v1h-3zM510 60h4v2h-4zM239 563h3v2h-3zM789 565h5v2h-5zM324 648h2v2h-2zM815 327h4v2h-4zM593 309h5v1h-5zM391 471h2v1h-2zM352 626h5v2h-5zM57 637h3v2h-3zM591 612h2v2h-2zM163 369h3v2h-3zM611 254h5v2h-5zM472 195h3v2h-3zM75 584h3v1h-3zM578 216h3v2h-3zM176 437h3v1h-3zM403 267h2v1h-2zM91 732h3v2h-3zM136 172h3v1h-3zM27 445h3v2h-3zM493 619h2v1h-2zM773 569h3v1h-3zM703 449h3v1h-3zM491 588h2v1h-2zM62 575h4v1h-4zM555 701h5v2h-5zM472 236h3v1h-3zM763 587h2v1h-2zM612 616h2v1h-2zM348 106h3v1h-3zM766 254h4v1h-4zM452 286h3v2h-3zM190 600h2v1h-2zM789 503h5v1h-5zM768 538h2v1h-2zM308 579h3v2h-3zM271 153h2v1h-2zM476 673h2v2h-2zM321 242h3v2h-3zM296 81h3v2h-3zM121 498h2v1h-2zM580 679h4v1h-4zM651 229h4v1h-4zM711 678h2v2h-2zM510 198h2v1h-2zM438 528h2v1h-2zM580 470h4v1h-4zM689 76h3v1h-3zM706 347h2v2h-2zM234 72h2v1h-2zM525 575h3v1h-3zM437 248h3v1h-3zM815 228h4v2h-4zM609 628h2v1h-2zM105 717h4v2h-4zM782 421h4v2h-4zM653 63h2v2h-2zM381 155h3v1h-3zM156 66h5v1h-5zM390 490h2v2h-2zM148 93h3v2h-3zM194 596h3v1h-3zM183 75h3v1h-3zM484 254h5v2h-5zM238 308h4v1h-4zM178 334h5v1h-5zM498 24h3v1h-3zM804 200h4v2h-4zM418 711h4v1h-4zM109 596h3v1h-3zM26 298h5v2h-5zM134 36h5v2h-5zM755 228h3v1h-3zM121 25h2v1h-2zM156 342h3v2h-3zM344 317h5v1h-5zM78 365h2v2h-2zM182 270h5v1h-5zM553 162h3v1h-3zM312 281h5v1h-5zM507 703h3v1h-3zM575 405h3v1h-3zM92 661h4v2h-4zM243 627h5v1h-5zM351 488h2v2h-2zM502 493h5v2h-5zM144 606h2v2h-2zM317 409h5v1h-5zM561 88h3v2h-3zM676 480h3v1h-3zM699 128h3v2h-3zM38 560h4v2h-4zM516 548h4v2h-4zM139 39h3v2h-3zM455 364h3v2h-3zM329 758h2v1h-2zM624 446h2v1h-2zM815 175h2v1h-2zM540 344h3v2h-3zM348 696h5v2h-5zM797 665h5v1h-5zM446 694h4v1h-4zM549 470h2v1h-2zM60 569h5v1h-5zM241 350h2v1h-2zM259 94h3v2h-3zM714 607h2v2h-2zM575 47h5v2h-5zM622 195h5v2h-5zM55 766h5v1h-5zM330 550h2v2h-2zM56 674h3v1h-3zM762 448h2v1h-2zM565 443h2v2h-2zM35 243h2v1h-2zM238 643h3v2h-3zM144 60h4v2h-4zM765 404h2v2h-2zM443 457h3v2h-3zM38 159h2v2h-2zM740 582h5v1h-5zM28 298h5v2h-5zM431 321h2v2h-2zM516 306h2v1h-2zM21 210h3v1h-3zM406 740h2v1h-2zM135 387h3v2h-3zM429 723h4v2h-4zM650 29h4v1h-4zM789 563h3v2h-3zM697 266h3v2h-3zM341 700h2v2h-2zM67 691h3v2h-3zM138 431h2v2h-2zM91 105h3v1h-3zM139 244h3v2h-3zM602 401h3v2h-3zM310 242h2v1h-2zM458 624h3v2h-3zM137 182h2v1h-2zM644 686h2v2h-2zM811 203h2v1h-2zM472 302h2v1h-2zM224 156h2v1h-2zM457 280h5v1h-5zM686 565h2v2h-2zM291 471h3v1h-3zM480 547h3v1h-3zM461 188h3v1h-3zM392 412h3v2h-3zM690 327h3v2h-3zM121 119h3v1h-3zM476 379h2v1h-2zM511 138h3v2h-3zM328 174h2v2h-2zM758 545h4v2h-4zM208 577h5v1h-5zM376 115h2v2h-2zM127 610h4v2h-4zM792 451h4v1h-4zM48 387h3v2h-3zM729 349h5v1h-5zM140 51h3v1h-3zM184 186h3v1h-3zM584 542h2v1h-2zM730 614h2v1h-2zM318 255h3v1h-3zM477 611h3v2h-3zM795 628h5v1h-5zM64 296h2v1h-2zM626 373h2v1h-2zM598 607h5v2h-5zM133 546h3v2h-3zM562 406h3v2h-3zM733 101h4v2h-4zM798 465h5v2h-5zM705 41h4v2h-4zM716 335h5v2h-5zM362 80h3v1h-3zM753 388h5v2h-5zM85 488h3v2h-3zM41 230h3v1h-3zM526 723h5v2h-5zM162 369h3v1h-3zM353 382h3v1h-3zM442 332h3v1h-3zM65 67h4v1h-4zM719 228h4v2h-4zM291 490h4v2h-4zM710 461h2v2h-2zM111 489h3v2h-3zM786 463h4v1h-4zM789 229h5v2h-5zM68 179h3v2h-3zM19 623h2v1h-2zM95 751h4v1h-4zM403 394h2v2h-2zM628 413h2v1h-2zM665 478h2v2h-2zM38 24h5v1h-5zM530 295h2v1h-2zM267 402h5v2h-5zM437 634h3v2h-3zM650 473h4v1h-4zM67 418h3v1h-3zM160 749h2v1h-2zM90 450h2v1h-2zM604 697h3v1h-3zM567 188h3v1h-3zM80 742h3v2h-3zM656 409h2v2h-2zM512 185h4v2h-4zM550 587h4v1h-4zM798 116h5v1h-5zM100 501h2v2h-2zM289 434h3v1h-3zM403 48h3v1h-3zM360 695h5v2h-5zM628 461h5v1h-5zM95 290h4v1h-4zM502 683h3v1h-3zM408 490h3v1h-3zM615 41h5v1h-5zM793 487h2v1h-2zM321 241h3v2h-3zM245 288h2v2h-2zM134 740h3v1h-3zM427 120h2v2h-2zM710 497h2v2h-2zM206 308h2v2h-2zM283 59h3v2h-3zM425 691h3v2h-3zM424 183h4v2h-4zM563 404h4v2h-4zM111 247h3v2h-3zM248 703h4v2h-4zM699 719h2v2h-2zM27 740h2v2h-2zM247 323h5v2h-5zM32 591h2v1h-2zM578 558h4v1h-4zM200 177h2v1h-2zM617 608h5v2h-5zM456 497h2v2h-2zM17 693h4v2h-4zM679 439h2v2h-2zM594 408h2v2h-2zM611 691h5v1h-5zM29 230h3v1h-3zM236 343h4v1h-4zM93 513h5v2h-5zM172 234h4v2h-4zM161 602h3v1h-3zM504 753h2v1h-2zM120 566h3v1h-3zM196 291h5v1h-5zM14 758h3v2h-3zM49 191h5v1h-5zM423 380h5v2h-5zM683 308h2v2h-2zM465 687h4v2h-4zM362 356h3v2h-3zM786 121h2v2h-2zM424 677h2v2h-2zM659 286h5v1h-5zM402 89h4v1h-4zM302 90h3v1h-3zM467 203h3v2h-3zM308 369h3v1h-3zM281 330h3v2h-3zM435 216h2v2h-2zM123 508h2v1h-2zM231 116h2v1h-2zM135 390h2v1h-2zM65 620h3v2h-3zM324 510h2v1h-2zM374 505h4v1h-4zM733 369h4v1h-4zM345 62h3v1h-3zM604 574h3v1h-3zM221 441h3v2h-3zM28 536h3v1h-3zM399 394h3v2h-3zM577 46h2v1h-2zM27 364h2v1h-2zM755 410h2v1h-2zM83 289h2v1h-2zM367 231h2v1h-2zM680 341h3v2h-3zM590 562h5v2h-5zM27 758h3v1h-3zM700 414h2v2h-2zM228 266h3v1h-3zM426 618h3v2h-3zM667 572h3v1h-3zM66 238h3v2h-3zM67 216h4v1h-4zM680 628h4v2h-4zM192 242h4v1h-4zM313 373h5v1h-5zM808 626h5v1h-5zM814 690h2v2h-2zM163 198h4v1h-4zM367 413h5v1h-5zM738 122h2v1h-2zM536 546h2v1h-2zM608 528h2v1h-2zM540 325h2v1h-2zM332 448h2v2h-2zM113 743h2v2h-2zM246 499h2v1h-2zM518 43h3v1h-3zM673 695h4v2h-4zM791 528h2v1h-2zM787 93h4v1h-4zM119 398h3v2h-3zM368 690h2v2h-2zM662 404h3v2h-3zM492 105h3v2h-3zM666 663h2v2h-2zM232 210h5v2h-5zM777 659h2v2h-2zM770 413h5v1h-5zM361 305h3v2h-3zM439 523h2v1h-2zM721 612h5v1h-5zM122 574h2v1h-2zM711 209h4v2h-4zM193 604h4v2h-4zM310 259h3v1h-3zM652 333h2v2h-2zM415 371h2v2h-2zM527 401h2v1h-2zM464 241h2v1h-2zM698 406h2v1h-2zM5 595h3v1h-3zM469 137h3v1h-3zM455 59h2v1h-2zM724 610h4v2h-4zM437 374h4v2h-4zM51 396h4v1h-4zM63 78h5v1h-5zM28 217h3v1h-3zM297 263h2v1h-2zM17 52h3v1h-3zM551 512h5v1h-5zM604 313h2v1h-2zM236 349h2v2h-2zM281 324h3v1h-3zM712 676h5v2h-5zM173 325h2v2h-2zM781 34h4v1h-4zM712 148h4v1h-4zM717 620h4v1h-4zM249 407h4v2h-4zM91 48h2v1h-2zM43 692h4v2h-4zM749 421h3v1h-3zM471 220h2v2h-2zM427 639h2v2h-2zM358 619h3v1h-3zM232 409h4v1h-4zM92 428h3v1h-3zM723 32h3v2h-3zM157 177h5v1h-5zM479 523h4v2h-4zM591 502h3v1h-3zM672 169h4v1h-4zM275 268h5v1h-5zM211 229h2v2h-2zM54 301h3v2h-3zM454 701h3v2h-3zM484 701h2v2h-2zM792 250h3v2h-3zM703 597h3v1h-3zM362 201h5v2h-5zM505 358h2v1h-2zM435 149h2v1h-2zM682 102h3v1h-3zM429 264h4v2h-4zM575 350h4v2h-4zM652 436h4v1h-4zM732 465h4v2h-4zM228 244h5v1h-5zM347 127h2v1h-2zM786 375h5v2h-5zM701 753h2v1h-2zM709 526h2v2h-2zM43 416h3v2h-3zM718 218h3v2h-3zM612 471h3v1h-3zM498 210h4v2h-4zM688 449h2v2h-2zM656 307h5v1h-5zM332 607h3v2h-3zM407 210h4v1h-4zM363 277h3v1h-3zM435 379h3v1h-3zM169 590h4v2h-4zM26 614h2v2h-2zM601 441h2v2h-2zM509 668h3v2h-3zM619 59h5v1h-5zM637 646h2v2h-2zM24 694h3v2h-3zM712 61h2v1h-2zM148 586h2v1h-2zM158 107h2v1h-2zM366 621h5v2h-5zM729 561h3v1h-3zM299 117h4v1h-4zM281 709h2v2h-2zM556 639h3v2h-3zM617 307h5v2h-5zM181 48h3v1h-3zM737 27h2v2h-2zM450 739h5v2h-5zM111 323h2v1h-2zM428 634h4v1h-4zM763 319h2v2h-2zM415 636h3v1h-3zM808 324h2v1h-2zM223 554h2v2h-2zM706 88h4v2h-4zM358 105h5v1h-5zM469 251h2v1h-2zM555 276h3v1h-3zM256 641h5v1h-5zM310 59h2v1h-2zM208 409h2v1h-2zM422 75h4v1h-4zM687 540h5v1h-5zM602 469h3v1h-3zM575 218h5v1h-5zM232 477h2v1h-2zM589 308h4v2h-4zM202 521h2v2h-2zM363 33h4v1h-4zM205 116h4v2h-4zM763 413h5v1h-5zM604 72h3v2h-3zM511 752h3v2h-3zM102 278h5v1h-5zM447 407h3v2h-3zM519 282h3v2h-3zM7 612h3v2h-3zM238 683h2v1h-2zM778 211h2v2h-2zM180 236h2v2h-2zM97 206h5v2h-5zM756 379h3v2h-3zM652 367h3v2h-3zM14 34h3v2h-3zM634 273h3v2h-3zM82 165h2v2h-2zM793 543h2v1h-2zM802 412h2v1h-2zM399 70h3v1h-3zM594 229h4v1h-4zM210 552h5v2h-5zM149 438h4v2h-4zM17 331h4v1h-4zM353 102h2v2h-2zM366 688h2v2h-2zM207 266h4v1h-4zM213 443h3v1h-3zM585 380h5v1h-5zM124 94h3v1h-3zM418 622h3v2h-3zM363 420h2v2h-2zM274 348h3v1h-3zM468 635h4v1h-4zM14 207h2v2h-2zM274 618h3v2h-3zM74 198h3v2h-3zM807 318h4v2h-4zM562 642h5v2h-5zM809 355h2v2h-2zM577 644h2v2h-2zM379 263h2v1h-2zM80 247h2v2h-2zM649 700h5v1h-5zM618 199h5v2h-5zM162 293h5v1h-5zM685 167h3v1h-3zM336 762h2v1h-2zM43 489h3v1h-3zM174 70h4v1h-4zM635 543h4v2h-4zM211 282h5v2h-5zM403 394h3v1h-3zM230 357h2v2h-2zM697 570h2v2h-2zM678 25h3v2h-3zM575 443h2v2h-2zM681 202h4v1h-4zM530 694h4v2h-4zM61 177h3v2h-3zM657 316h3v2h-3zM36 342h4v1h-4zM232 117h3v1h-3zM656 745h3v2h-3zM258 513h4v2h-4zM223 192h5v2h-5zM502 232h3v1h-3zM208 202h2v1h-2zM518 96h2v1h-2zM312 678h3v2h-3zM166 522h2v2h-2zM629 573h5v2h-5zM603 422h3v1h-3zM212 647h4v1h-4zM194 83h2v1h-2zM134 355h3v1h-3zM42 434h4v1h-4zM763 270h3v2h-3zM231 276h3v1h-3zM537 37h2v2h-2zM657 696h4v1h-4zM463 672h2v2h-2zM106 632h4v1h-4zM452 182h2v2h-2zM109 487h2v1h-2zM458 646h5v1h-5zM437 99h2v1h-2zM70 526h3v2h-3zM493 560h4v2h-4zM69 54h2v2h-2zM782 202h5v1h-5zM6 33h2v1h-2zM217 713h3v1h-3zM805 173h2v1h-2zM192 502h3v1h-3zM806 507h2v1h-2zM526 535h2v1h-2zM52 317h2v2h-2zM482 756h4v2h-4zM662 143h3v2h-3zM662 409h3v2h-3zM587 478h5v2h-5zM17 618h2v1h-2zM152 203h5v2h-5zM593 593h3v1h-3zM134 431h3v2h-3zM67 95h2v1h-2zM556 27h4v2h-4zM706 40h2v2h-2zM568 329h2v2h-2zM607 472h4v1h-4zM144 578h2v2h-2zM5 469h3v1h-3zM61 366h3v1h-3zM232 764h2v1h-2zM562 388h3v1h-3zM420 45h2v1h-2zM349 62h5v2h-5zM511 461h2v2h-2zM368 629h5v2h-5zM101 100h3v1h-3zM248 713h4v2h-4zM733 341h2v1h-2zM549 491h4v2h-4zM430 234h5v1h-5zM766 637h4v1h-4zM188 724h3v1h-3zM32 634h4v2h-4zM313 90h2v1h-2zM257 78h4v2h-4zM383 257h2v1h-2zM387 285h3v2h-3zM267 98h5v2h-5zM107 629h2v2h-2zM80 242h4v2h-4zM457 687h3v1h-3zM19 152h3v1h-3zM157 413h2v1h-2zM91 733h2v2h-2zM138 51h3v2h-3zM316 618h3v1h-3zM78 80h4v2h-4zM97 749h2v1h-2zM522 367h3v1h-3zM794 41h2v2h-2zM466 566h4v1h-4zM383 105h3v1h-3zM137 194h4v1h-4zM270 347h2v2h-2zM725 661h3v1h-3zM535 719h5v2h-5zM706 604h3v1h-3zM74 576h3v2h-3zM402 62h3v2h-3zM414 624h4v1h-4zM32 191h3v1h-3zM136 503h4v2h-4zM40 177h4v2h-4zM162 668h5v1h-5zM625 273h5v2h-5zM793 102h4v2h-4zM204 681h5v2h-5zM361 55h2v2h-2zM447 248h2v2h-2zM218 102h3v2h-3zM559 359h4v1h-4zM214 565h2v1h-2zM245 435h3v2h-3zM78 82h5v1h-5zM572 72h2v1h-2zM748 310h4v1h-4zM324 757h2v1h-2zM346 98h5v2h-5zM324 420h5v2h-5zM487 397h2v1h-2zM216 189h2v1h-2zM537 34h2v2h-2zM795 550h2v1h-2zM492 487h5v1h-5zM470 529h4v2h-4zM505 58h3v1h-3zM344 201h3v1h-3zM640 648h2v2h-2zM800 615h2v2h-2zM69 564h2v2h-2zM719 80h2v2h-2zM429 682h3v1h-3zM482 291h2v1h-2zM169 162h2v1h-2zM790 421h2v1h-2zM223 55h2v2h-2zM524 282h2v2h-2zM407 376h4v1h-4zM767 616h5v2h-5zM465 483h2v1h-2zM648 655h3v1h-3zM760 605h3v1h-3zM417 569h4v2h-4zM750 548h2v1h-2zM244 392h3v2h-3zM291 383h4v2h-4zM631 85h3v1h-3zM169 344h5v2h-5zM621 265h2v2h-2zM301 67h3v2h-3zM201 328h2v1h-2zM712 200h3v1h-3zM233 414h2v1h-2zM269 706h5v2h-5zM118 637h4v1h-4zM438 567h2v1h-2zM491 636h5v1h-5zM64 611h5v2h-5zM577 227h5v1h-5zM178 201h2v2h-2zM606 721h3v2h-3zM333 26h2v1h-2zM787 123h5v2h-5zM814 577h2v2h-2zM495 428h4v2h-4zM350 265h3v1h-3zM133 503h3v1h-3zM139 515h2v2h-2zM679 85h2v2h-2zM411 336h5v2h-5zM731 390h4v1h-4zM481 657h2v1h-2zM475 404h3v1h-3zM188 332h2v2h-2zM692 28h3v2h-3zM79 568h3v2h-3zM304 388h3v2h-3zM78 205h2v2h-2zM514 537h2v1h-2zM258 222h4v1h-4zM292 44h3v2h-3zM613 177h3v2h-3zM309 529h3v2h-3zM658 386h3v2h-3zM346 340h3v1h-3zM478 440h2v2h-2zM226 277h5v1h-5zM172 198h2v1h-2zM172 355h5v2h-5zM13 574h3v2h-3zM394 470h4v2h-4zM357 75h5v2h-5zM562 207h5v1h-5zM540 398h3v2h-3zM96 530h4v2h-4zM197 697h3v2h-3zM702 355h3v1h-3zM253 720h5v1h-5zM588 613h2v1h-2zM97 233h5v2h-5zM504 723h5v1h-5zM787 661h2v1h-2zM60 236h2v1h-2zM566 639h3v1h-3zM163 408h5v1h-5zM456 319h2v2h-2zM640 440h5v1h-5zM336 445h5v1h-5zM175 32h3v2h-3zM416 117h3v2h-3zM60 178h3v2h-3zM263 218h3v1h-3zM735 496h3v1h-3zM472 358h3v2h-3zM251 700h3v1h-3zM460 277h4v1h-4zM526 661h3v1h-3zM495 156h2v2h-2zM250 560h4v1h-4zM573 71h3v2h-3zM265 494h2v1h-2zM147 327h3v2h-3zM280 447h2v2h-2zM500 334h2v1h-2zM693 259h3v2h-3zM158 266h4v1h-4zM413 164h3v1h-3zM311 759h5v1h-5zM129 426h3v1h-3zM289 77h5v1h-5zM448 482h5v1h-5zM387 620h2v1h-2zM607 521h2v1h-2zM9 494h4v1h-4zM372 678h4v1h-4zM786 494h2v1h-2zM567 265h3v1h-3zM787 752h2v1h-2zM807 656h3v2h-3zM344 622h3v1h-3zM647 386h2v2h-2zM417 647h2v2h-2zM802 494h3v1h-3zM700 36h3v1h-3zM95 547h4v1h-4zM594 556h3v1h-3zM89 391h2v2h-2zM301 549h5v2h-5zM607 202h2v2h-2zM292 262h5v1h-5zM382 139h4v1h-4zM292 216h2v1h-2zM800 105h2v1h-2zM95 521h2v2h-2zM746 269h2v2h-2zM593 79h5v2h-5zM507 521h2v2h-2zM394 654h3v1h-3zM65 565h3v1h-3zM497 246h2v2h-2zM648 381h4v2h-4zM417 389h4v2h-4zM666 261h5v1h-5zM288 52h2v1h-2zM294 526h2v1h-2zM449 586h4v2h-4zM225 188h3v1h-3zM247 239h5v1h-5zM132 108h5v2h-5zM750 176h2v2h-2zM472 286h3v2h-3zM106 98h4v2h-4zM28 152h2v2h-2zM619 418h2v2h-2zM516 283h2v2h-2zM117 746h4v2h-4zM88 597h2v1h-2zM405 519h5v1h-5zM508 199h4v2h-4zM688 484h4v1h-4zM205 341h2v2h-2zM386 403h3v2h-3zM815 587h3v1h-3zM521 138h2v2h-2zM393 692h5v2h-5zM618 225h4v2h-4zM337 534h3v2h-3zM487 311h4v2h-4zM624 597h5v2h-5zM565 66h2v1h-2zM811 598h4v1h-4zM251 702h2v2h-2zM67 628h3v1h-3zM389 531h2v1h-2zM28 457h4v1h-4zM446 697h3v2h-3zM780 295h2v1h-2zM427 493h3v2h-3zM219 240h2v2h-2zM108 247h4v2h-4zM124 588h4v2h-4zM190 211h5v1h-5zM364 425h4v1h-4zM694 110h4v2h-4zM522 649h3v2h-3zM495 348h5v2h-5zM116 689h5v2h-5zM50 215h3v2h-3zM667 354h5v1h-5zM554 401h2v1h-2zM297 591h3v2h-3zM256 450h3v2h-3zM518 197h2v2h-2zM89 133h5v2h-5zM519 140h2v1h-2zM108 400h4v2h-4zM403 151h2v2h-2zM148 328h2v2h-2zM354 64h3v2h-3zM235 514h5v2h-5zM604 701h4v2h-4zM479 614h3v1h-3zM92 175h5v2h-5zM431 590h2v2h-2zM231 90h2v1h-2zM429 571h4v1h-4zM602 189h5v2h-5zM731 600h2v1h-2zM668 753h3v2h-3zM651 509h4v1h-4zM527 350h2v1h-2zM463 255h3v2h-3zM456 735h5v1h-5zM257 169h3v2h-3zM250 606h3v1h-3zM352 481h2v1h-2zM415 665h2v1h-2zM388 380h2v2h-2zM380 177h2v2h-2zM43 28h3v2h-3zM431 216h2v1h-2zM43 329h2v1h-2zM135 701h5v1h-5zM391 168h4v2h-4zM631 290h3v2h-3zM132 31h2v2h-2zM317 441h3v2h-3zM764 137h3v2h-3zM709 524h3v2h-3zM592 100h5v2h-5zM319 712h2v1h-2zM233 222h2v1h-2zM505 701h3v2h-3zM390 553h4v1h-4zM214 403h2v2h-2zM268 137h2v2h-2zM509 640h5v1h-5zM628 218h2v1h-2zM724 722h2v2h-2zM692 312h2v1h-2zM344 104h4v2h-4zM813 618h3v1h-3zM650 575h2v2h-2zM354 170h3v1h-3zM207 383h2v1h-2zM760 739h3v1h-3zM243 176h2v1h-2zM256 589h2v1h-2zM468 262h3v1h-3zM229 729h3v2h-3zM73 187h4v2h-4zM624 577h3v2h-3zM211 188h4v2h-4zM791 647h3v1h-3zM231 25h3v2h-3zM10 637h4v1h-4zM430 619h4v2h-4zM310 546h4v2h-4zM79 314h2v2h-2zM460 310h4v1h-4zM192 88h2v2h-2zM345 670h3v1h-3zM23 653h3v2h-3zM492 34h2v2h-2zM128 57h3v1h-3zM122 635h2v2h-2zM135 275h3v2h-3zM796 99h2v1h-2zM31 544h3v2h-3zM612 381h4v1h-4zM64 657h5v1h-5zM395 159h2v1h-2zM725 716h3v1h-3zM315 114h2v1h-2zM141 466h4v2h-4zM592 427h2v1h-2zM44 623h3v2h-3zM103 757h3v2h-3zM603 68h2v1h-2zM814 500h2v2h-2zM46 504h2v2h-2zM527 184h3v2h-3zM343 197h4v2h-4zM382 528h3v1h-3zM514 580h3v2h-3zM595 283h4v2h-4zM422 758h2v2h-2zM341 599h5v2h-5zM559 297h4v2h-4zM117 579h3v1h-3zM111 639h5v1h-5zM596 333h2v1h-2zM782 461h3v2h-3zM154 323h3v2h-3zM268 462h3v1h-3zM444 251h3v1h-3zM120 647h3v2h-3zM467 599h3v2h-3zM234 384h2v2h-2zM617 49h2v1h-2zM395 621h3v1h-3zM229 357h2v1h-2zM687 633h2v2h-2zM684 193h3v2h-3zM595 359h3v1h-3zM327 410h3v2h-3zM307 227h2v1h-2zM525 646h4v1h-4zM208 624h2v2h-2zM671 371h4v2h-4zM264 626h3v1h-3zM45 191h4v2h-4zM578 117h4v1h-4zM180 422h5v1h-5zM518 552h2v2h-2zM373 244h2v1h-2zM441 752h3v1h-3zM719 393h3v2h-3zM148 538h2v2h-2zM428 486h5v1h-5zM44 159h3v2h-3zM72 413h4v2h-4zM199 560h2v1h-2zM398 269h2v1h-2zM430 488h4v1h-4zM397 69h4v2h-4zM542 598h2v1h-2zM62 494h2v1h-2zM296 589h2v2h-2zM335 163h4v2h-4zM648 154h4v1h-4zM736 711h5v2h-5zM227 37h2v2h-2zM795 156h2v1h-2zM259 121h4v2h-4zM312 635h2v2h-2zM331 54h4v2h-4zM35 69h3v2h-3zM153 46h2v1h-2zM785 195h5v1h-5zM426 656h5v2h-5zM204 616h4v1h-4zM747 407h4v2h-4zM121 600h2v2h-2zM745 420h3v1h-3zM210 136h2v2h-2zM121 680h2v2h-2zM651 219h5v2h-5zM718 465h3v1h-3zM92 504h2v1h-2zM143 747h3v1h-3zM160 286h5v1h-5zM220 127h4v1h-4zM122 67h5v2h-5zM641 97h5v2h-5zM425 57h2v2h-2zM625 263h4v2h-4zM245 712h4v1h-4zM166 317h2v1h-2zM706 678h2v1h-2zM242 343h5v2h-5zM35 448h2v2h-2zM149 62h4v1h-4zM67 530h3v1h-3zM185 559h2v1h-2zM203 295h2v1h-2zM617 245h4v2h-4zM577 389h2v2h-2zM701 116h5v2h-5zM235 459h4v1h-4zM486 252h5v2h-5zM37 358h5v2h-5zM203 700h5v2h-5zM163 199h2v2h-2zM102 351h5v2h-5zM686 339h5v2h-5zM445 432h2v2h-2zM363 653h4v1h-4zM10 586h2v2h-2zM165 411h3v1h-3zM328 642h4v2h-4zM682 351h2v1h-2zM616 483h2v2h-2zM702 170h4v2h-4zM291 579h3v2h-3zM263 237h3v2h-3zM564 60h5v1h-5zM53 346h2v1h-2zM205 489h2v1h-2zM754 86h5v1h-5zM784 156h4v2h-4zM355 591h2v2h-2zM353 703h3v2h-3zM474 441h4v2h-4zM360 21h3v1h-3zM508 124h5v1h-5zM650 178h2v1h-2zM617 176h3v1h-3zM292 716h2v1h-2zM281 171h3v2h-3zM481 607h4v2h-4zM447 281h2v1h-2zM283 621h2v1h-2zM27 80h5v2h-5zM191 702h2v2h-2zM196 175h3v1h-3zM441 25h2v1h-2zM465 284h2v1h-2zM53 362h2v1h-2zM464 751h3v1h-3zM411 649h2v1h-2zM438 738h3v1h-3zM532 455h2v2h-2zM208 225h3v1h-3zM485 144h5v2h-5zM750 90h2v2h-2zM429 585h3v1h-3zM716 590h3v2h-3zM303 365h2v2h-2zM790 603h3v2h-3zM112 148h2v1h-2zM764 230h3v1h-3zM746 173h3v2h-3zM70 312h2v1h-2zM13 615h5v1h-5zM722 177h2v1h-2zM505 55h4v1h-4zM528 147h4v1h-4zM268 568h2v2h-2zM512 80h3v2h-3zM142 352h3v1h-3zM87 158h2v1h-2zM101 764h4v1h-4zM146 134h3v2h-3zM402 45h2v1h-2zM332 676h3v1h-3zM485 737h5v2h-5zM110 370h3v1h-3zM18 451h3v2h-3zM673 489h3v1h-3zM477 34h2v1h-2zM717 100h3v2h-3zM621 742h3v2h-3zM569 234h3v2h-3zM717 548h3v2h-3zM610 525h3v1h-3zM43 545h2v1h-2zM314 325h5v2h-5zM381 610h3v1h-3zM571 620h3v2h-3zM63 70h3v1h-3zM721 732h5v2h-5zM177 21h3v2h-3zM98 466h2v1h-2zM97 235h2v2h-2zM100 187h4v1h-4zM708 683h2v2h-2zM338 156h5v2h-5zM642 47h2v2h-2zM56 134h2v1h-2zM734 75h3v1h-3zM592 436h3v1h-3zM599 261h4v2h-4zM558 435h2v1h-2zM145 586h2v1h-2zM63 230h5v1h-5zM83 697h3v1h-3zM253 271h3v1h-3zM483 491h5v2h-5zM599 241h3v2h-3zM516 456h3v2h-3zM34 729h2v1h-2zM759 50h3v1h-3zM138 743h2v1h-2zM815 715h5v1h-5zM810 634h2v1h-2zM599 495h4v1h-4zM436 96h3v2h-3zM258 408h3v1h-3zM217 752h3v2h-3zM812 181h5v1h-5zM680 53h5v1h-5zM285 570h2v1h-2zM534 574h3v2h-3zM586 531h2v2h-2zM101 679h3v1h-3zM144 82h5v1h-5zM732 101h2v2h-2zM706 708h5v1h-5zM156 308h4v1h-4zM757 263h5v2h-5zM651 281h2v2h-2zM764 620h2v2h-2zM600 107h5v1h-5zM491 48h2v2h-2zM570 341h5v2h-5zM503 697h4v2h-4zM220 199h4v1h-4zM214 746h2v2h-2zM657 608h2v1h-2zM586 654h3v1h-3zM526 522h2v2h-2zM731 254h2v1h-2zM381 619h4v2h-4zM559 103h2v1h-2zM433 393h2v1h-2zM606 499h4v1h-4zM130 625h2v2h-2zM389 541h2v2h-2zM197 389h2v1h-2zM52 306h4v2h-4z"/><path fill="#0b0b8a" d="M550 117h3v1h-3zM397 705h3v1h-3zM431 568h3v2h-3zM641 645h2v2h-2zM354 679h2v1h-2zM803 749h2v2h-2zM431 155h2v2h-2zM255 736h4v2h-4zM219 706h3v1h-3zM60 725h2v2h-2zM126 485h2v2h-2zM44 157h5v2h-5zM409 143h2v1h-2zM294 671h2v1h-2zM805 459h2v2h-2zM511 584h2v2h-2zM40 681h5v2h-5zM617 22h2v2h-2zM242 581h2v1h-2zM518 90h2v2h-2zM230 517h3v1h-3zM633 65h3v2h-3zM241 130h3v2h-3zM215 119h3v2h-3zM416 229h2v2h-2zM292 186h4v1h-4zM805 160h2v1h-2zM595 726h2v2h-2zM291 70h5v2h-5zM366 118h3v2h-3zM620 435h2v1h-2zM421 551h5v1h-5zM337 31h3v2h-3zM113 250h3v2h-3zM89 696h3v1h-3zM464 375h2v1h-2zM478 404h3v2h-3zM187 58h3v1h-3zM11 721h5v1h-5zM284 757h3v1h-3zM146 606h2v2h-2zM695 425h3v1h-3zM799 307h3v1h-3zM471 519h2v2h-2zM203 636h2v1h-2zM576 75h3v1h-3zM43 56h5v2h-5zM624 269h3v1h-3zM12 23h3v1h-3zM396 41h2v1h-2zM257 249h2v1h-2zM477 664h5v1h-5zM182 51h3v2h-3zM235 604h3v2h-3zM688 721h4v2h-4zM601 642h5v1h-5zM355 109h3v2h-3zM115 739h3v2h-3zM481 518h2v2h-2zM579 291h2v2h-2zM111 601h5v2h-5zM75 698h2v2h-2zM66 470h2v1h-2zM549 661h2v2h-2zM306 599h4v2h-4zM125 745h2v2h-2zM91 657h2v1h-2zM337 638h2v1h-2zM542 619h2v1h-2zM803 514h4v2h-4zM622 395h5v1h-5zM579 406h3v2h-3zM327 573h3v2h-3zM398 415h3v1h-3zM695 350h2v1h-2zM594 153h4v1h-4zM196 551h2v1h-2zM136 74h2v2h-2zM10 566h2v2h-2zM608 646h3v2h-3zM478 118h2v1h-2zM362 146h5v1h-5zM204 311h3v1h-3zM247 765h4v1h-4zM354 164h2v1h-2zM704 360h5v1h-5zM190 420h3v2h-3zM373 192h2v2h-2zM11 21h2v1h-2zM640 360h3v2h-3zM372 333h5v2h-5zM694 675h3v2h-3zM590 528h2v2h-2zM535 195h5v2h-5zM603 325h3v2h-3zM485 294h2v1h-2zM774 265h4v1h-4zM144 478h3v1h-3zM644 188h4v2h-4zM216 383h3v1h-3zM485 641h2v1h-2zM248 245h5v1h-5zM755 233h5v2h-5zM468 438h4v1h-4zM367 357h2v1h-2zM56 686h5v1h-5zM117 760h4v2h-4zM87 509h3v2h-3zM313 342h4v1h-4zM805 488h3v1h-3zM125 301h3v1h-3zM679 249h2v2h-2zM513 694h4v2h-4zM334 259h3v1h-3zM214 576h3v2h-3zM737 728h3v1h-3zM760 758h3v1h-3zM753 153h5v1h-5zM783 281h4v1h-4zM336 254h3v2h-3zM292 133h2v1h-2zM58 233h4v1h-4zM733 750h2v2h-2zM181 258h4v1h-4zM436 544h2v2h-2zM473 196h5v1h-5zM346 439h5v1h-5zM789 627h3v2h-3zM747 509h3v2h-3zM636 326h2v1h-2zM342 315h3v1h-3zM727 204h4v1h-4zM690 223h3v1h-3zM747 699h3v2h-3zM595 650h2v2h-2zM197 296h2v1h-2zM346 183h4v2h-4zM327 431h5v2h-5zM64 247h2v2h-2zM456 238h2v2h-2zM476 513h4v1h-4zM99 397h3v1h-3zM145 531h4v2h-4zM703 733h3v2h-3zM621 215h3v2h-3zM438 110h3v2h-3zM440 393h5v1h-5zM243 453h2v1h-2zM444 353h2v2h-2zM603 67h3v1h-3zM679 485h2v1h-2zM419 110h4v2h-4zM88 93h2v1h-2zM45 383h2v2h-2zM327 593h4v2h-4zM278 519h2v1h-2zM280 471h4v2h-4zM109 287h5v2h-5zM720 377h4v2h-4zM136 365h3v1h-3zM231 118h2v2h-2zM19 225h3v1h-3zM801 334h5v1h-5zM653 534h5v2h-5zM456 413h2v2h-2zM36 649h3v2h-3zM452 748h2v1h-2zM443 228h2v2h-2zM558 261h4v2h-4zM720 82h2v1h-2zM74 180h3v1h-3zM3 76h3v1h-3zM188 469h5v2h-5zM614 209h5v1h-5zM425 297h5v2h-5zM800 224h3v2h-3zM785 363h3v1h-3zM770 574h2v2h-2zM216 269h2v1h-2zM60 539h2v2h-2zM525 568h4v1h-4zM767 363h5v1h-5zM728 313h3v2h-3zM724 753h3v1h-3zM315 569h4v1h-4zM406 333h3v2h-3zM729 464h2v1h-2zM281 645h2v1h-2zM193 690h3v2h-3zM572 572h2v1h-2zM790 173h2v2h-2zM615 697h4v2h-4zM17 561h3v2h-3zM363 378h3v1h-3zM222 439h4v2h-4zM261 568h2v1h-2zM571 747h3v2h-3zM243 203h5v2h-5zM359 39h2v1h-2zM706 552h3v1h-3zM534 28h2v2h-2zM659 368h5v2h-5zM212 516h2v1h-2zM553 755h5v1h-5zM7 173h2v1h-2zM148 568h4v1h-4zM53 277h5v1h-5zM139 660h5v1h-5zM662 110h3v2h-3zM337 207h3v1h-3zM729 68h5v1h-5zM788 128h2v2h-2zM728 248h3v2h-3zM711 682h2v2h-2zM319 644h3v2h-3zM419 161h5v1h-5zM68 724h4v1h-4zM651 162h2v1h-2zM595 376h2v2h-2zM170 248h5v1h-5zM634 105h5v2h-5zM17 716h3v2h-3zM680 526h2v1h-2zM458 337h4v1h-4zM166 32h3v2h-3zM5 296h3v1h-3zM532 541h4v1h-4zM319 693h3v2h-3zM85 504h2v1h-2zM801 417h3v1h-3zM95 292h5v2h-5zM788 332h5v2h-5zM93 326h2v1h-2zM120 156h2v1h-2zM116 267h4v2h-4zM405 113h3v1h-3zM199 200h3v2h-3zM123 42h2v1h-2zM343 709h3v2h-3zM157 479h2v2h-2zM460 38h2v1h-2zM669 503h2v2h-2zM725 516h4v2h-4zM290 164h2v1h-2zM161 59h3v2h-3zM292 551h2v1h-2zM374 522h3v2h-3zM64 208h2v2h-2zM270 637h5v2h-5zM673 529h3v2h-3zM293 633h5v1h-5zM739 276h3v2h-3zM569 95h2v1h-2zM30 123h2v1h-2zM6 175h3v1h-3zM88 164h5v2h-5zM152 635h5v1h-5zM292 393h3v1h-3zM793 459h2v1h-2zM769 578h4v1h-4zM767 100h3v1h-3zM56 624h3v2h-3zM506 74h3v1h-3zM264 199h2v2h-2zM274 342h5v1h-5zM603 289h3v1h-3zM223 453h4v1h-4zM500 408h3v2h-3zM552 337h2v2h-2zM723 180h2v2h-2zM333 599h5v1h-5zM685 662h2v1h-2zM351 226h4v1h-4zM107 754h2v2h-2zM793 503h4v1h-4zM387 66h2v2h-2zM398 314h3v2h-3zM405 443h3v2h-3zM780 155h3v2h-3zM809 351h3v1h-3zM621 117h4v1h-4zM481 114h2v1h-2zM220 421h3v2h-3zM553 141h4v2h-4zM198 605h3v2h-3zM275 356h4v2h-4zM313 464h3v1h-3zM542 296h4v1h-4zM103 275h3v2h-3zM126 259h5v1h-5zM245 458h4v1h-4zM394 666h3v1h-3zM226 676h4v1h-4zM472 29h2v2h-2zM379 330h3v2h-3zM153 110h2v2h-2zM747 670h3v1h-3zM90 262h2v2h-2zM555 590h3v2h-3zM147 224h3v2h-3zM63 654h2v1h-2zM651 586h2v2h-2zM442 89h2v2h-2zM104 677h2v1h-2zM717 583h2v2h-2zM277 670h3v1h-3zM292 540h3v2h-3zM310 510h2v2h-2zM719 734h3v1h-3zM160 23h5v2h-5zM493 526h4v1h-4zM142 577h3v1h-3zM52 337h3v1h-3zM51 416h2v1h-2zM452 537h4v2h-4zM737 521h4v1h-4zM815 712h3v2h-3zM122 576h3v1h-3zM303 45h3v1h-3zM344 366h2v2h-2zM159 199h2v1h-2zM211 347h4v1h-4zM192 525h3v2h-3zM253 683h3v2h-3zM163 674h5v2h-5zM472 388h2v1h-2zM340 149h3v2h-3zM573 449h4v2h-4zM207 217h3v2h-3zM774 80h5v1h-5zM707 339h5v1h-5zM719 656h4v2h-4zM143 429h2v2h-2zM307 294h4v2h-4zM196 482h4v2h-4zM526 209h5v2h-5zM275 121h2v1h-2zM597 765h2v1h-2zM783 458h3v2h-3zM358 85h4v2h-4zM758 728h5v1h-5zM564 564h2v1h-2zM665 569h3v1h-3zM446 682h2v1h-2zM652 535h3v1h-3zM561 661h2v2h-2zM203 752h4v2h-4zM66 325h4v2h-4zM470 486h3v1h-3zM516 633h2v2h-2zM108 611h3v2h-3zM192 328h4v2h-4zM379 672h3v1h-3zM550 216h4v1h-4zM249 329h2v2h-2zM705 209h3v2h-3zM167 245h3v1h-3zM787 588h2v1h-2zM196 456h2v2h-2zM147 139h2v1h-2zM739 566h4v1h-4zM62 328h3v1h-3zM528 405h5v1h-5zM189 217h4v2h-4zM308 177h2v1h-2zM73 618h5v2h-5zM74 205h5v1h-5zM498 298h2v2h-2zM151 106h3v1h-3zM651 72h3v2h-3zM207 85h3v1h-3zM58 660h2v2h-2zM670 145h5v1h-5zM123 416h5v2h-5zM28 403h3v2h-3zM151 96h2v2h-2zM177 728h2v1h-2zM430 449h2v1h-2zM330 310h3v1h-3zM133 764h3v1h-3zM184 679h2v1h-2zM536 249h3v1h-3zM700 170h4v2h-4zM26 288h3v2h-3zM746 116h5v1h-5zM792 158h5v2h-5zM65 450h3v2h-3zM188 729h2v1h-2zM620 171h4v1h-4zM548 401h2v1h-2zM755 614h4v1h-4zM493 288h3v1h-3zM531 370h2v2h-2zM206 184h3v2h-3zM381 359h2v2h-2zM688 477h5v1h-5zM742 502h5v1h-5zM322 297h3v1h-3zM255 171h4v1h-4zM212 97h3v2h-3zM139 50h2v1h-2zM158 485h3v2h-3zM297 126h2v1h-2zM645 185h3v1h-3zM524 484h2v2h-2zM741 276h3v1h-3zM663 390h5v2h-5zM221 679h3v2h-3zM809 694h2v1h-2zM281 107h2v2h-2zM481 688h4v2h-4zM109 659h4v2h-4zM641 748h4v1h-4zM189 487h2v1h-2zM317 333h2v2h-2zM156 98h2v1h-2zM116 506h2v2h-2zM42 570h2v1h-2zM314 33h2v2h-2zM66 229h3v2h-3zM472 336h3v1h-3zM5 597h2v1h-2zM678 507h2v2h-2zM785 409h3v1h-3zM398 621h4v1h-4zM27 309h2v1h-2zM73 727h5v2h-5zM509 571h2v1h-2zM150 626h2v2h-2zM301 530h5v1h-5zM620 313h2v2h-2zM448 340h3v2h-3zM333 29h3v2h-3zM685 431h4v2h-4zM576 145h3v2h-3zM648 140h2v1h-2zM768 224h3v2h-3zM491 533h4v2h-4zM210 125h4v2h-4zM7 32h2v2h-2zM192 716h2v2h-2zM270 334h3v1h-3zM748 292h4v2h-4zM520 468h3v1h-3zM392 567h4v1h-4zM58 549h2v1h-2zM593 341h2v1h-2zM601 196h3v2h-3zM164 57h2v1h-2zM393 224h5v2h-5zM44 690h2v2h-2zM424 357h5v2h-5zM305 658h4v1h-4zM682 513h3v2h-3zM573 605h4v1h-4zM175 449h4v2h-4zM55 579h3v2h-3zM811 491h5v2h-5zM133 56h5v2h-5zM325 432h5v1h-5zM329 279h3v2h-3zM208 180h5v1h-5zM272 326h3v2h-3zM187 191h2v1h-2zM613 127h3v2h-3zM470 668h2v1h-2zM13 183h3v2h-3zM86 442h3v2h-3zM725 531h3v1h-3zM334 625h2v1h-2zM777 82h3v1h-3zM298 698h2v1h-2zM406 134h5v2h-5zM725 410h4v2h-4zM674 223h5v2h-5zM723 526h3v1h-3zM731 218h2v1h-2zM704 689h3v1h-3zM697 278h2v2h-2zM544 90h3v2h-3zM61 189h5v2h-5zM72 440h4v1h-4zM608 360h2v1h-2zM794 551h3v2h-3zM376 458h3v1h-3zM708 707h4v2h-4zM484 354h4v2h-4zM627 242h2v1h-2zM391 306h2v1h-2zM774 150h2v1h-2zM137 739h3v1h-3zM461 540h3v1h-3zM457 444h5v2h-5zM472 718h3v2h-3zM776 108h2v2h-2zM443 217h2v1h-2zM514 610h3v2h-3zM490 577h2v1h-2zM218 707h3v1h-3zM721 231h4v2h-4zM513 390h4v1h-4zM299 397h2v2h-2zM113 269h3v2h-3zM695 545h2v2h-2zM69 183h3v1h-3zM385 712h2v2h-2zM357 48h3v2h-3zM641 378h2v2h-2zM549 202h3v1h-3zM769 394h4v1h-4zM549 585h5v1h-5zM643 231h3v1h-3zM290 689h3v2h-3zM31 166h3v1h-3zM268 172h4v2h-4zM627 26h3v2h-3zM776 534h2v1h-2zM387 152h3v2h-3zM120 439h5v1h-5zM730 169h3v2h-3zM594 166h3v1h-3zM71 391h2v2h-2zM260 46h3v1h-3zM182 139h3v2h-3zM467 520h2v2h-2zM602 628h5v2h-5zM607 264h3v1h-3zM694 324h2v1h-2zM568 698h2v1h-2zM118 702h3v1h-3zM210 99h2v2h-2zM4 548h5v1h-5zM502 513h4v2h-4zM139 22h2v1h-2zM510 131h3v2h-3zM165 301h5v1h-5zM303 623h3v1h-3zM164 327h2v1h-2zM727 247h4v1h-4zM154 647h4v2h-4zM89 64h5v2h-5zM565 310h2v2h-2zM364 32h2v1h-2zM343 87h2v1h-2zM628 722h3v2h-3zM523 475h5v2h-5zM360 590h3v1h-3zM591 498h2v2h-2zM473 597h3v2h-3zM373 341h5v2h-5zM410 599h2v2h-2zM442 206h3v1h-3zM201 91h3v2h-3zM493 657h4v2h-4zM175 739h3v2h-3zM188 507h3v1h-3zM690 486h2v1h-2zM681 628h2v1h-2zM772 323h5v1h-5zM265 603h3v1h-3zM625 164h4v2h-4zM168 573h2v1h-2zM606 345h5v1h-5zM667 249h2v1h-2zM430 80h3v1h-3zM699 465h4v1h-4zM33 482h3v2h-3zM539 430h5v2h-5zM325 654h2v1h-2zM20 702h4v1h-4zM670 270h3v2h-3zM97 102h4v1h-4zM343 342h4v2h-4zM490 65h3v1h-3zM25 558h2v2h-2zM321 277h4v1h-4zM778 87h5v1h-5zM56 47h4v2h-4zM795 657h3v1h-3zM160 470h5v2h-5zM495 76h2v2h-2zM127 28h4v1h-4zM691 125h3v2h-3zM291 672h4v2h-4zM670 168h3v2h-3zM411 570h4v2h-4zM15 246h3v2h-3zM209 204h2v2h-2zM294 335h4v2h-4zM502 220h3v1h-3zM324 307h4v2h-4zM429 589h3v1h-3zM180 407h3v2h-3zM257 519h4v1h-4zM434 459h5v2h-5zM550 30h3v2h-3zM722 479h3v2h-3zM148 477h2v2h-2zM600 518h2v2h-2zM561 281h3v1h-3zM91 271h3v1h-3zM744 479h3v2h-3zM244 520h3v2h-3zM576 229h5v2h-5zM551 283h4v2h-4zM806 541h3v2h-3zM808 624h4v1h-4zM548 339h3v2h-3zM668 153h2v1h-2zM696 451h2v2h-2zM711 622h5v2h-5zM661 615h5v2h-5zM3 674h3v1h-3zM655 305h2v1h-2zM665 401h4v1h-4zM595 86h3v1h-3zM460 457h2v2h-2zM427 174h5v1h-5zM709 299h5v1h-5zM528 111h3v2h-3zM557 366h5v1h-5zM584 700h3v1h-3zM53 348h4v1h-4zM480 424h2v2h-2zM682 116h4v2h-4zM531 727h2v2h-2zM273 264h5v2h-5zM581 273h5v1h-5zM402 408h2v1h-2zM399 537h5v2h-5zM429 293h2v1h-2zM694 51h3v2h-3zM534 272h4v2h-4zM566 484h2v1h-2zM794 106h3v1h-3zM577 116h2v1h-2zM281 745h5v2h-5zM460 27h5v2h-5zM799 756h5v2h-5zM424 331h2v2h-2zM86 736h2v1h-2zM404 525h3v2h-3zM190 238h2v1h-2zM338 272h5v1h-5zM581 665h2v1h-2zM773 580h3v2h-3zM686 549h2v2h-2zM210 100h5v1h-5zM300 598h4v1h-4zM199 738h3v1h-3zM15 248h4v2h-4zM169 255h2v2h-2zM657 377h4v2h-4zM96 258h5v1h-5zM269 683h3v1h-3zM766 356h4v1h-4zM650 741h5v2h-5zM138 51h5v2h-5zM768 478h2v2h-2zM455 619h4v2h-4zM733 504h5v1h-5zM743 231h3v1h-3zM68 574h2v1h-2zM542 683h3v2h-3zM142 127h2v1h-2zM655 658h5v2h-5zM477 91h2v2h-2zM410 745h2v2h-2zM479 43h4v1h-4zM567 96h3v2h-3zM72 50h2v2h-2zM10 310h3v1h-3zM421 542h2v2h-2zM492 119h2v1h-2zM373 681h2v1h-2zM505 100h2v1h-2zM519 578h2v2h-2zM714 274h5v1h-5zM287 641h5v2h-5zM702 283h4v1h-4zM85 122h2v2h-2zM810 428h3v1h-3zM131 202h5v2h-5zM196 335h2v1h-2zM284 242h3v1h-3zM427 470h2v2h-2zM448 449h3v2h-3zM129 199h5v1h-5zM605 161h3v2h-3zM239 429h4v2h-4zM349 223h3v2h-3zM585 594h3v1h-3zM539 485h2v2h-2zM256 429h3v1h-3zM153 750h2v1h-2zM4 481h3v1h-3zM173 117h5v2h-5zM217 460h2v2h-2zM684 158h4v1h-4zM495 673h5v1h-5zM674 391h5v2h-5zM684 274h4v1h-4zM653 760h5v1h-5zM612 692h3v2h-3zM195 513h2v1h-2zM599 292h2v1h-2zM544 56h4v2h-4zM626 109h5v2h-5zM197 724h4v2h-4zM239 595h3v1h-3zM548 93h3v2h-3zM787 433h2v2h-2zM348 514h4v2h-4zM708 725h4v2h-4zM393 688h3v1h-3zM318 652h3v1h-3zM299 558h3v2h-3zM145 200h2v1h-2zM60 504h4v2h-4zM137 534h5v1h-5zM317 576h4v1h-4zM58 460h3v1h-3zM490 502h3v1h-3zM430 388h3v1h-3zM161 330h2v1h-2zM574 142h3v1h-3zM319 430h4v2h-4zM655 226h4v1h-4zM77 49h3v2h-3zM116 555h3v2h-3zM534 98h4v2h-4zM232 155h3v1h-3zM565 483h2v2h-2zM558 376h2v2h-2zM692 657h4v1h-4zM122 171h2v1h-2zM403 502h2v2h-2zM518 264h4v1h-4zM597 746h5v1h-5zM744 694h5v2h-5zM493 723h3v1h-3zM539 255h3v1h-3zM120 583h2v1h-2zM301 746h3v2h-3zM127 251h2v1h-2zM72 303h2v1h-2zM395 402h2v2h-2zM446 51h2v2h-2zM374 236h5v2h-5zM240 73h2v1h-2zM629 715h3v2h-3zM499 512h4v2h-4zM814 406h3v1h-3zM14 501h5v1h-5zM317 380h5v2h-5zM146 88h3v2h-3zM363 482h2v2h-2zM169 718h3v1h-3zM270 157h2v1h-2zM600 621h4v2h-4zM598 111h2v1h-2zM259 92h2v2h-2zM326 513h2v2h-2zM326 77h5v1h-5zM660 229h3v2h-3zM57 738h2v2h-2zM283 165h3v2h-3zM227 507h5v1h-5zM108 208h4v2h-4zM12 381h5v2h-5zM68 205h2v2h-2zM367 107h2v2h-2zM730 738h4v2h-4zM610 246h3v1h-3zM30 542h2v1h-2zM614 567h2v1h-2zM709 619h4v2h-4zM579 449h2v1h-2zM485 665h5v1h-5zM790 373h2v2h-2zM256 454h2v2h-2zM356 344h5v1h-5zM201 37h4v2h-4zM169 307h4v1h-4zM204 105h3v1h-3zM348 152h5v2h-5zM89 520h5v2h-5zM561 588h4v2h-4zM177 429h2v2h-2zM467 236h2v2h-2zM675 128h3v2h-3zM535 146h5v1h-5zM364 573h2v1h-2zM64 101h5v1h-5zM119 31h2v1h-2zM542 437h3v2h-3zM385 211h4v1h-4zM248 676h2v1h-2zM746 126h3v2h-3zM474 495h4v1h-4zM493 272h3v1h-3zM542 171h4v2h-4zM734 380h5v2h-5zM238 446h2v1h-2zM30 157h3v1h-3zM212 155h2v2h-2zM607 152h2v2h-2zM30 645h3v2h-3zM523 89h4v2h-4zM291 414h4v2h-4zM343 447h2v2h-2zM53 185h2v2h-2zM218 719h4v2h-4zM397 44h4v2h-4zM425 102h4v1h-4zM104 338h4v1h-4zM21 571h2v2h-2zM104 270h3v1h-3zM712 574h5v2h-5zM787 419h2v1h-2zM682 357h3v1h-3zM384 735h2v1h-2zM38 22h4v1h-4zM310 56h3v2h-3zM549 444h3v1h-3zM412 326h3v2h-3zM260 548h3v2h-3zM257 342h2v2h-2zM787 714h5v1h-5zM130 194h4v2h-4zM412 438h2v1h-2zM717 468h4v2h-4zM248 632h4v1h-4zM533 695h3v2h-3zM765 150h3v2h-3zM72 295h2v2h-2zM763 47h4v1h-4zM286 326h3v1h-3zM174 608h2v1h-2zM549 578h5v2h-5zM296 318h3v2h-3zM453 258h2v1h-2zM52 158h5v1h-5zM324 482h4v1h-4zM661 167h5v1h-5zM704 473h2v1h-2zM468 527h3v2h-3zM811 214h4v2h-4zM159 590h2v1h-2zM625 380h4v1h-4zM220 147h3v1h-3zM334 739h2v1h-2zM241 689h3v1h-3zM802 502h4v2h-4zM644 196h3v1h-3zM520 415h2v1h-2zM73 180h2v2h-2zM27 571h4v1h-4zM95 122h3v2h-3zM188 690h3v1h-3zM378 580h3v2h-3zM693 632h5v2h-5zM191 470h4v2h-4zM611 722h5v2h-5zM605 337h2v2h-2zM467 579h3v2h-3zM304 365h3v1h-3zM342 335h3v1h-3zM734 624h3v1h-3zM280 495h2v1h-2zM745 624h2v2h-2zM419 234h4v1h-4zM168 269h3v1h-3zM681 305h2v2h-2zM598 275h3v2h-3zM626 38h5v1h-5zM71 304h3v2h-3zM437 257h2v2h-2zM809 223h3v1h-3zM815 172h2v2h-2zM196 521h2v1h-2zM610 542h2v1h-2zM390 144h2v2h-2zM47 488h3v1h-3zM334 661h4v1h-4zM601 148h3v2h-3zM449 88h4v2h-4zM5 365h2v1h-2zM693 228h2v2h-2zM634 47h4v2h-4zM585 32h3v2h-3z"/></g><g filter="url(#b1)"><rect x="2" y="210.5" width="3" height="2.2" fill="#4a20a0" opacity="0.86"/><rect x="5" y="210.4" width="5" height="2.2" fill="#4a20a0" opacity="0.90"/><rect x="10" y="210.2" width="5" height="2.2" fill="#2a1a90" opacity="0.98"/><rect x="15" y="210.4" width="5" height="2.2" fill="#24148a" opacity="0.86"/><rect x="20" y="210.3" width="2" height="2.2" fill="#2a1a90" opacity="0.85"/><rect x="22" y="210.5" width="4" height="2.2" fill="#24148a" opacity="0.91"/><rect x="26" y="210.5" width="3" height="2.2" fill="#4a20a0" opacity="0.86"/><rect x="29" y="210.5" width="2" height="2.2" fill="#2a1a90" opacity="0.98"/><rect x="31" y="210.5" width="3" height="2.2" fill="#5a22a0" opacity="0.81"/><rect x="34" y="210.3" width="3" height="2.2" fill="#4a20a0" opacity="0.93"/><rect x="37" y="210.4" width="2" height="2.2" fill="#5a22a0" opacity="1.00"/><rect x="39" y="210.2" width="2" height="2.2" fill="#24148a" opacity="0.94"/><rect x="42" y="210.7" width="2" height="2.2" fill="#4a20a0" opacity="0.95"/><rect x="44" y="210.3" width="4" height="2.2" fill="#4a20a0" opacity="0.94"/><rect x="48" y="210.7" width="4" height="2.2" fill="#3a1ea0" opacity="0.88"/><rect x="52" y="210.5" width="3" height="2.2" fill="#2a1a90" opacity="0.86"/><rect x="55" y="210.7" width="5" height="2.2" fill="#4a20a0" opacity="1.00"/><rect x="60" y="210.3" width="4" height="2.2" fill="#3a1ea0" opacity="0.80"/><rect x="64" y="210.5" width="4" height="2.2" fill="#5a22a0" opacity="0.98"/><rect x="68" y="210.8" width="5" height="2.2" fill="#5a22a0" opacity="0.81"/><rect x="73" y="210.9" width="4" height="2.2" fill="#5a22a0" opacity="0.91"/><rect x="101" y="210.8" width="5" height="2.2" fill="#5a22a0" opacity="0.90"/><rect x="106" y="210.7" width="5" height="2.2" fill="#3a1ea0" opacity="0.95"/><rect x="111" y="210.7" width="4" height="2.2" fill="#3a1ea0" opacity="0.82"/><rect x="115" y="210.6" width="3" height="2.2" fill="#24148a" opacity="0.89"/><rect x="118" y="210.8" width="3" height="2.2" fill="#24148a" opacity="0.91"/><rect x="121" y="210.8" width="3" height="2.2" fill="#3a1ea0" opacity="0.82"/><rect x="124" y="210.9" width="4" height="2.2" fill="#2a1a90" opacity="0.76"/><rect x="129" y="210.6" width="4" height="2.2" fill="#4a20a0" opacity="0.99"/><rect x="133" y="210.9" width="5" height="2.2" fill="#24148a" opacity="0.99"/><rect x="138" y="210.8" width="5" height="2.2" fill="#24148a" opacity="0.78"/><rect x="143" y="210.7" width="2" height="2.2" fill="#24148a" opacity="0.93"/><rect x="145" y="210.8" width="5" height="2.2" fill="#2a1a90" opacity="0.99"/><rect x="150" y="210.9" width="3" height="2.2" fill="#2a1a90" opacity="0.94"/><rect x="153" y="210.4" width="4" height="2.2" fill="#24148a" opacity="0.79"/><rect x="157" y="210.6" width="2" height="2.2" fill="#2a1a90" opacity="0.99"/><rect x="159" y="210.8" width="4" height="2.2" fill="#4a20a0" opacity="0.96"/><rect x="163" y="210.6" width="3" height="2.2" fill="#5a22a0" opacity="0.83"/><rect x="166" y="210.9" width="2" height="2.2" fill="#3a1ea0" opacity="0.78"/><rect x="168" y="210.5" width="2" height="2.2" fill="#4a20a0" opacity="0.85"/><rect x="170" y="210.9" width="4" height="2.2" fill="#4a20a0" opacity="0.88"/><rect x="174" y="210.6" width="2" height="2.2" fill="#3a1ea0" opacity="0.92"/><rect x="196" y="211.0" width="2" height="2.2" fill="#4a20a0" opacity="0.80"/><rect x="200" y="211.0" width="3" height="2.2" fill="#3a1ea0" opacity="0.86"/><rect x="203" y="210.6" width="2" height="2.2" fill="#4a20a0" opacity="0.82"/><rect x="205" y="211.1" width="5" height="2.2" fill="#3a1ea0" opacity="0.80"/><rect x="210" y="210.7" width="5" height="2.2" fill="#5a22a0" opacity="0.76"/><rect x="215" y="211.1" width="3" height="2.2" fill="#24148a" opacity="0.93"/><rect x="218" y="210.8" width="3" height="2.2" fill="#24148a" opacity="0.91"/><rect x="221" y="210.7" width="3" height="2.2" fill="#2a1a90" opacity="0.75"/><rect x="224" y="210.9" width="3" height="2.2" fill="#24148a" opacity="0.94"/><rect x="227" y="210.9" width="2" height="2.2" fill="#24148a" opacity="0.82"/><rect x="229" y="211.1" width="2" height="2.2" fill="#2a1a90" opacity="0.78"/><rect x="231" y="211.1" width="4" height="2.2" fill="#3a1ea0" opacity="0.85"/><rect x="235" y="210.9" width="4" height="2.2" fill="#5a22a0" opacity="0.81"/><rect x="239" y="210.8" width="3" height="2.2" fill="#3a1ea0" opacity="0.75"/><rect x="242" y="211.1" width="4" height="2.2" fill="#2a1a90" opacity="0.86"/><rect x="246" y="210.9" width="3" height="2.2" fill="#4a20a0" opacity="0.81"/><rect x="249" y="211.0" width="3" height="2.2" fill="#24148a" opacity="0.85"/><rect x="252" y="211.2" width="3" height="2.2" fill="#2a1a90" opacity="0.97"/><rect x="255" y="211.0" width="4" height="2.2" fill="#24148a" opacity="0.99"/><rect x="259" y="210.8" width="3" height="2.2" fill="#5a22a0" opacity="0.83"/><rect x="262" y="211.0" width="5" height="2.2" fill="#5a22a0" opacity="0.82"/><rect x="267" y="210.8" width="4" height="2.2" fill="#24148a" opacity="0.80"/><rect x="271" y="211.2" width="5" height="2.2" fill="#2a1a90" opacity="0.84"/><rect x="276" y="211.1" width="4" height="2.2" fill="#24148a" opacity="0.88"/><rect x="280" y="210.9" width="3" height="2.2" fill="#5a22a0" opacity="0.98"/><rect x="283" y="210.9" width="4" height="2.2" fill="#3a1ea0" opacity="0.99"/><rect x="300" y="211.2" width="5" height="2.2" fill="#4a20a0" opacity="0.75"/><rect x="305" y="210.9" width="4" height="2.2" fill="#24148a" opacity="0.76"/><rect x="309" y="211.3" width="2" height="2.2" fill="#3a1ea0" opacity="1.00"/><rect x="311" y="210.8" width="3" height="2.2" fill="#24148a" opacity="0.94"/><rect x="314" y="211.0" width="4" height="2.2" fill="#4a20a0" opacity="0.93"/><rect x="318" y="210.9" width="3" height="2.2" fill="#3a1ea0" opacity="0.98"/><rect x="321" y="211.3" width="2" height="2.2" fill="#2a1a90" opacity="0.77"/><rect x="323" y="211.3" width="5" height="2.2" fill="#24148a" opacity="0.83"/><rect x="328" y="211.0" width="3" height="2.2" fill="#4a20a0" opacity="0.81"/><rect x="331" y="211.0" width="4" height="2.2" fill="#5a22a0" opacity="0.96"/><rect x="336" y="210.9" width="4" height="2.2" fill="#2a1a90" opacity="0.77"/><rect x="341" y="211.1" width="2" height="2.2" fill="#5a22a0" opacity="0.83"/><rect x="343" y="211.4" width="4" height="2.2" fill="#4a20a0" opacity="0.95"/><rect x="347" y="211.1" width="3" height="2.2" fill="#4a20a0" opacity="0.89"/><rect x="350" y="211.4" width="5" height="2.2" fill="#4a20a0" opacity="0.86"/><rect x="355" y="211.1" width="5" height="2.2" fill="#4a20a0" opacity="0.79"/><rect x="368" y="211.4" width="4" height="2.2" fill="#3a1ea0" opacity="0.98"/><rect x="372" y="211.1" width="4" height="2.2" fill="#3a1ea0" opacity="0.84"/><rect x="376" y="211.4" width="4" height="2.2" fill="#4a20a0" opacity="0.79"/><rect x="380" y="211.0" width="3" height="2.2" fill="#24148a" opacity="0.81"/><rect x="383" y="211.4" width="5" height="2.2" fill="#4a20a0" opacity="0.91"/><rect x="388" y="211.1" width="5" height="2.2" fill="#5a22a0" opacity="0.96"/><rect x="393" y="211.3" width="3" height="2.2" fill="#5a22a0" opacity="0.81"/><rect x="396" y="211.5" width="2" height="2.2" fill="#4a20a0" opacity="0.82"/><rect x="398" y="211.4" width="2" height="2.2" fill="#24148a" opacity="0.97"/><rect x="400" y="211.0" width="2" height="2.2" fill="#4a20a0" opacity="0.98"/><rect x="425" y="211.1" width="5" height="2.2" fill="#4a20a0" opacity="0.76"/><rect x="430" y="211.5" width="3" height="2.2" fill="#24148a" opacity="0.88"/><rect x="433" y="211.2" width="4" height="2.2" fill="#2a1a90" opacity="0.84"/><rect x="439" y="211.5" width="4" height="2.2" fill="#4a20a0" opacity="0.78"/><rect x="443" y="211.4" width="2" height="2.2" fill="#4a20a0" opacity="0.94"/><rect x="445" y="211.2" width="3" height="2.2" fill="#5a22a0" opacity="0.89"/><rect x="448" y="211.6" width="5" height="2.2" fill="#24148a" opacity="0.87"/><rect x="453" y="211.2" width="5" height="2.2" fill="#2a1a90" opacity="0.94"/><rect x="458" y="211.4" width="5" height="2.2" fill="#3a1ea0" opacity="0.88"/><rect x="463" y="211.2" width="5" height="2.2" fill="#4a20a0" opacity="0.80"/><rect x="489" y="211.8" width="2" height="2.2" fill="#24148a" opacity="0.78"/><rect x="491" y="211.5" width="4" height="2.2" fill="#3a1ea0" opacity="0.99"/><rect x="495" y="211.8" width="2" height="2.2" fill="#4a20a0" opacity="0.90"/><rect x="497" y="211.2" width="2" height="2.2" fill="#5a22a0" opacity="0.98"/><rect x="499" y="211.2" width="2" height="2.2" fill="#3a1ea0" opacity="0.85"/><rect x="501" y="211.4" width="4" height="2.2" fill="#2a1a90" opacity="0.89"/><rect x="525" y="211.3" width="3" height="2.2" fill="#5a22a0" opacity="0.92"/><rect x="528" y="211.5" width="3" height="2.2" fill="#2a1a90" opacity="0.87"/><rect x="531" y="211.3" width="4" height="2.2" fill="#4a20a0" opacity="0.85"/><rect x="535" y="211.3" width="5" height="2.2" fill="#5a22a0" opacity="0.90"/><rect x="540" y="211.5" width="3" height="2.2" fill="#24148a" opacity="0.89"/><rect x="543" y="211.6" width="4" height="2.2" fill="#2a1a90" opacity="1.00"/><rect x="547" y="211.6" width="3" height="2.2" fill="#4a20a0" opacity="0.88"/><rect x="550" y="211.6" width="5" height="2.2" fill="#5a22a0" opacity="0.86"/><rect x="565" y="211.4" width="5" height="2.2" fill="#5a22a0" opacity="0.97"/><rect x="570" y="211.7" width="4" height="2.2" fill="#3a1ea0" opacity="0.83"/><rect x="574" y="211.6" width="4" height="2.2" fill="#4a20a0" opacity="0.89"/><rect x="578" y="211.8" width="2" height="2.2" fill="#24148a" opacity="0.77"/><rect x="590" y="211.8" width="4" height="2.2" fill="#3a1ea0" opacity="0.77"/><rect x="594" y="211.6" width="5" height="2.2" fill="#2a1a90" opacity="0.77"/><rect x="599" y="211.7" width="3" height="2.2" fill="#2a1a90" opacity="0.98"/><rect x="602" y="211.9" width="5" height="2.2" fill="#5a22a0" opacity="0.93"/><rect x="607" y="212.0" width="2" height="2.2" fill="#5a22a0" opacity="0.87"/><rect x="609" y="211.5" width="4" height="2.2" fill="#5a22a0" opacity="0.81"/><rect x="613" y="212.0" width="2" height="2.2" fill="#5a22a0" opacity="0.92"/><rect x="630" y="212.0" width="3" height="2.2" fill="#2a1a90" opacity="0.92"/><rect x="633" y="211.9" width="5" height="2.2" fill="#2a1a90" opacity="0.82"/><rect x="638" y="211.6" width="2" height="2.2" fill="#2a1a90" opacity="0.99"/><rect x="640" y="212.1" width="2" height="2.2" fill="#24148a" opacity="0.83"/><rect x="642" y="211.8" width="2" height="2.2" fill="#3a1ea0" opacity="0.91"/><rect x="644" y="212.1" width="3" height="2.2" fill="#2a1a90" opacity="0.95"/><rect x="647" y="211.6" width="5" height="2.2" fill="#5a22a0" opacity="0.85"/><rect x="652" y="211.8" width="3" height="2.2" fill="#2a1a90" opacity="0.92"/><rect x="655" y="211.9" width="3" height="2.2" fill="#3a1ea0" opacity="1.00"/><rect x="658" y="211.6" width="5" height="2.2" fill="#5a22a0" opacity="0.99"/><rect x="663" y="212.0" width="3" height="2.2" fill="#24148a" opacity="0.78"/><rect x="666" y="211.6" width="2" height="2.2" fill="#2a1a90" opacity="0.76"/><rect x="680" y="211.8" width="2" height="2.2" fill="#3a1ea0" opacity="0.77"/><rect x="684" y="211.8" width="2" height="2.2" fill="#4a20a0" opacity="0.89"/><rect x="693" y="211.9" width="3" height="2.2" fill="#24148a" opacity="0.85"/><rect x="696" y="211.9" width="5" height="2.2" fill="#2a1a90" opacity="0.88"/><rect x="701" y="211.6" width="3" height="2.2" fill="#24148a" opacity="0.80"/><rect x="704" y="212.1" width="3" height="2.2" fill="#5a22a0" opacity="0.91"/><rect x="712" y="212.0" width="3" height="2.2" fill="#3a1ea0" opacity="0.83"/><rect x="715" y="212.1" width="3" height="2.2" fill="#4a20a0" opacity="0.97"/><rect x="718" y="212.0" width="2" height="2.2" fill="#24148a" opacity="0.84"/><rect x="725" y="212.0" width="2" height="2.2" fill="#5a22a0" opacity="0.91"/><rect x="727" y="212.2" width="3" height="2.2" fill="#5a22a0" opacity="0.79"/><rect x="730" y="212.0" width="4" height="2.2" fill="#3a1ea0" opacity="0.83"/><rect x="734" y="211.8" width="3" height="2.2" fill="#4a20a0" opacity="0.76"/><rect x="737" y="211.7" width="3" height="2.2" fill="#4a20a0" opacity="0.99"/><rect x="740" y="212.0" width="2" height="2.2" fill="#24148a" opacity="0.96"/><rect x="742" y="212.2" width="5" height="2.2" fill="#3a1ea0" opacity="0.91"/><rect x="747" y="211.8" width="3" height="2.2" fill="#3a1ea0" opacity="0.91"/><rect x="750" y="211.8" width="5" height="2.2" fill="#3a1ea0" opacity="0.96"/><rect x="755" y="212.1" width="4" height="2.2" fill="#3a1ea0" opacity="0.80"/><rect x="759" y="212.0" width="1" height="2.2" fill="#4a20a0" opacity="0.95"/><rect x="762" y="212.3" width="3" height="2.2" fill="#3a1ea0" opacity="1.00"/><rect x="765" y="211.9" width="4" height="2.2" fill="#3a1ea0" opacity="0.76"/><rect x="769" y="212.2" width="2" height="2.2" fill="#5a22a0" opacity="0.78"/><rect x="771" y="211.9" width="2" height="2.2" fill="#3a1ea0" opacity="0.86"/><rect x="773" y="211.8" width="4" height="2.2" fill="#3a1ea0" opacity="0.97"/><rect x="778" y="211.9" width="2" height="2.2" fill="#4a20a0" opacity="0.93"/><rect x="790" y="212.0" width="3" height="2.2" fill="#2a1a90" opacity="0.87"/><rect x="793" y="212.2" width="3" height="2.2" fill="#4a20a0" opacity="0.87"/><rect x="796" y="212.4" width="2" height="2.2" fill="#4a20a0" opacity="0.89"/><rect x="798" y="212.2" width="2" height="2.2" fill="#4a20a0" opacity="0.76"/><rect x="795" y="211.9" width="3" height="2.2" fill="#5a22a0" opacity="0.84"/><rect x="798" y="211.9" width="3" height="2.2" fill="#4a20a0" opacity="0.78"/><rect x="801" y="212.3" width="5" height="2.2" fill="#5a22a0" opacity="0.84"/><rect x="806" y="212.1" width="3" height="2.2" fill="#5a22a0" opacity="0.97"/><rect x="809" y="212.1" width="4" height="2.2" fill="#2a1a90" opacity="0.86"/><rect x="815" y="212.3" width="3" height="2.2" fill="#2a1a90" opacity="0.88"/><rect x="11" y="210.6" width="21" height="1.8" fill="#8a2a90" opacity="0.8"/><rect x="130" y="210.9" width="15" height="1.8" fill="#8a2a90" opacity="0.8"/><rect x="220" y="211.1" width="20" height="1.8" fill="#8a2a90" opacity="0.8"/><rect x="320" y="211.3" width="25" height="1.8" fill="#8a2a90" opacity="0.8"/><rect x="640" y="212.0" width="10" height="1.8" fill="#8a2a90" opacity="0.8"/><rect x="745" y="212.2" width="15" height="1.8" fill="#8a2a90" opacity="0.8"/><rect x="800" y="212.4" width="18" height="1.8" fill="#8a2a90" opacity="0.8"/><rect x="535" y="211.8" width="10" height="1.8" fill="#8a2a90" opacity="0.8"/><rect x="600" y="211.9" width="12" height="1.8" fill="#8a2a90" opacity="0.8"/><rect x="174.0" y="200" width="2" height="3" fill="#4a20a0" opacity="0.61"/><rect x="174.0" y="203" width="2" height="3" fill="#4a20a0" opacity="0.75"/><rect x="174.0" y="208" width="2" height="2" fill="#4a20a0" opacity="0.69"/><rect x="174.0" y="210" width="2" height="2" fill="#4a20a0" opacity="0.67"/><rect x="174.0" y="212" width="2" height="1" fill="#4a20a0" opacity="0.80"/><rect x="195.0" y="177" width="2" height="3" fill="#2a1a90" opacity="0.59"/><rect x="195.0" y="180" width="2" height="3" fill="#2a1a90" opacity="0.69"/><rect x="195.0" y="183" width="2" height="4" fill="#2a1a90" opacity="0.56"/><rect x="195.0" y="187" width="2" height="2" fill="#2a1a90" opacity="0.69"/><rect x="195.0" y="189" width="2" height="4" fill="#2a1a90" opacity="0.53"/><rect x="195.0" y="193" width="2" height="2" fill="#2a1a90" opacity="0.55"/><rect x="195.0" y="195" width="2" height="2" fill="#2a1a90" opacity="0.74"/><rect x="195.0" y="197" width="2" height="4" fill="#2a1a90" opacity="0.72"/><rect x="195.0" y="201" width="2" height="4" fill="#2a1a90" opacity="0.72"/><rect x="195.0" y="207" width="2" height="2" fill="#2a1a90" opacity="0.72"/><rect x="195.0" y="209" width="2" height="3" fill="#2a1a90" opacity="0.53"/><rect x="195.0" y="212" width="2" height="2" fill="#2a1a90" opacity="0.46"/><rect x="195.0" y="214" width="2" height="2" fill="#2a1a90" opacity="0.55"/><rect x="195.0" y="216" width="2" height="2" fill="#2a1a90" opacity="0.49"/><rect x="239.0" y="219" width="2" height="4" fill="#4a1ea0" opacity="0.47"/><rect x="239.0" y="223" width="2" height="4" fill="#4a1ea0" opacity="0.58"/><rect x="239.0" y="227" width="2" height="2" fill="#4a1ea0" opacity="0.53"/><rect x="239.0" y="229" width="2" height="4" fill="#4a1ea0" opacity="0.51"/><rect x="239.0" y="235" width="2" height="2" fill="#4a1ea0" opacity="0.75"/><rect x="239.0" y="239" width="2" height="4" fill="#4a1ea0" opacity="0.65"/><rect x="239.0" y="243" width="2" height="3" fill="#4a1ea0" opacity="0.51"/><rect x="304.5" y="186" width="2" height="3" fill="#2a1a90" opacity="0.65"/><rect x="304.5" y="189" width="2" height="3" fill="#2a1a90" opacity="0.79"/><rect x="304.5" y="192" width="2" height="4" fill="#2a1a90" opacity="0.64"/><rect x="304.5" y="196" width="2" height="2" fill="#2a1a90" opacity="0.66"/><rect x="304.5" y="200" width="2" height="3" fill="#2a1a90" opacity="0.60"/><rect x="304.5" y="205" width="2" height="2" fill="#2a1a90" opacity="0.60"/><rect x="304.5" y="207" width="2" height="2" fill="#2a1a90" opacity="0.54"/><rect x="304.5" y="211" width="2" height="4" fill="#2a1a90" opacity="0.72"/><rect x="304.5" y="215" width="2" height="4" fill="#2a1a90" opacity="0.80"/><rect x="304.5" y="219" width="2" height="4" fill="#2a1a90" opacity="0.72"/><rect x="304.5" y="225" width="2" height="4" fill="#2a1a90" opacity="0.68"/><rect x="304.5" y="229" width="2" height="3" fill="#2a1a90" opacity="0.59"/><rect x="304.5" y="232" width="2" height="4" fill="#2a1a90" opacity="0.60"/><rect x="304.5" y="236" width="2" height="3" fill="#2a1a90" opacity="0.60"/><rect x="304.5" y="239" width="2" height="2" fill="#2a1a90" opacity="0.50"/><rect x="304.5" y="241" width="2" height="1" fill="#2a1a90" opacity="0.77"/><rect x="402.0" y="193" width="2" height="3" fill="#3a1ea0" opacity="0.74"/><rect x="402.0" y="196" width="2" height="4" fill="#3a1ea0" opacity="0.70"/><rect x="402.0" y="202" width="2" height="4" fill="#3a1ea0" opacity="0.78"/><rect x="402.0" y="206" width="2" height="4" fill="#3a1ea0" opacity="0.63"/><rect x="402.0" y="210" width="2" height="4" fill="#3a1ea0" opacity="0.61"/><rect x="402.0" y="214" width="2" height="1" fill="#3a1ea0" opacity="0.76"/><rect x="446.0" y="206" width="2" height="2" fill="#3a1ea0" opacity="0.46"/><rect x="446.0" y="210" width="2" height="4" fill="#3a1ea0" opacity="0.59"/><rect x="446.0" y="214" width="2" height="3" fill="#3a1ea0" opacity="0.75"/><rect x="446.0" y="217" width="2" height="2" fill="#3a1ea0" opacity="0.59"/><rect x="577.0" y="195" width="2" height="2" fill="#2a1a90" opacity="0.55"/><rect x="577.0" y="197" width="2" height="3" fill="#2a1a90" opacity="0.50"/><rect x="577.0" y="200" width="2" height="2" fill="#2a1a90" opacity="0.58"/><rect x="577.0" y="202" width="2" height="4" fill="#2a1a90" opacity="0.47"/><rect x="577.0" y="206" width="2" height="4" fill="#2a1a90" opacity="0.64"/><rect x="577.0" y="210" width="2" height="3" fill="#2a1a90" opacity="0.54"/><rect x="577.0" y="215" width="2" height="2" fill="#2a1a90" opacity="0.53"/><rect x="577.0" y="217" width="2" height="3" fill="#2a1a90" opacity="0.65"/><rect x="577.0" y="220" width="2" height="2" fill="#2a1a90" opacity="0.52"/><rect x="577.0" y="222" width="2" height="3" fill="#2a1a90" opacity="0.57"/><rect x="755.5" y="207" width="2" height="3" fill="#5a20a0" opacity="0.66"/><rect x="755.5" y="210" width="2" height="3" fill="#5a20a0" opacity="0.55"/><rect x="755.5" y="215" width="2" height="4" fill="#5a20a0" opacity="0.77"/><rect x="755.5" y="219" width="2" height="2" fill="#5a20a0" opacity="0.49"/><rect x="755.5" y="221" width="2" height="2" fill="#5a20a0" opacity="0.58"/><rect x="755.5" y="225" width="2" height="3" fill="#5a20a0" opacity="0.60"/><rect x="755.5" y="228" width="2" height="2" fill="#5a20a0" opacity="0.68"/></g><g filter="url(#b2)"><ellipse cx="246.5" cy="208" rx="2.3" ry="6" fill="#e88830"/><ellipse cx="246.5" cy="209" rx="1.2" ry="2.5" fill="#ffb840"/><rect x="245.3" y="196" width="2.4" height="8" fill="#7a2090"/><ellipse cx="257" cy="202" rx="1.6" ry="4" fill="#a03a80"/><ellipse cx="305.5" cy="211.5" rx="2.6" ry="7" fill="#f8a020"/><ellipse cx="305.5" cy="211.5" rx="1.5" ry="3.5" fill="#ffe060"/><ellipse cx="542" cy="213" rx="2" ry="2" fill="#c03a80"/><ellipse cx="607.5" cy="216" rx="2" ry="2.5" fill="#c03a80"/><ellipse cx="756.5" cy="214" rx="1.6" ry="3" fill="#d04a70"/></g><path d="M487.4 14.0 L487.4 21.6 L487.4 29.1 L487.4 36.7 L487.4 44.2 L487.5 51.8 L487.5 59.4 L487.5 66.9 L487.5 74.5 L487.6 82.0 L487.6 89.6 L487.7 97.2 L487.8 104.7 L487.9 112.3 L487.9 119.8 L488.0 127.4 L488.1 135.0 L488.2 142.5 L488.4 150.1 L488.5 157.6 L488.6 165.2 L488.7 172.8 L488.7 180.3 L488.8 187.9 L488.9 195.4 L488.9 203.0 L488.9 210.6 L488.9 218.1 L488.9 225.7 L488.8 233.2 L488.7 240.8 L488.6 248.4 L488.6 255.9 L488.4 263.5 L488.3 271.0 L488.2 278.6 L488.1 286.2 L488.0 293.7 L487.9 301.3 L487.8 308.8 L487.8 316.4 L487.7 324.0 L487.6 331.5 L487.6 339.1 L487.5 346.6 L487.5 354.2 L487.5 361.8 L487.5 369.3 L487.4 376.9 L487.4 384.4 L487.4 392.0 L484.2 392.0 L484.2 384.4 L484.2 376.9 L484.1 369.3 L484.1 361.8 L484.1 354.2 L484.1 346.6 L484.0 339.1 L484.0 331.5 L483.9 324.0 L483.8 316.4 L483.8 308.8 L483.7 301.3 L483.6 293.7 L483.5 286.2 L483.4 278.6 L483.3 271.0 L483.2 263.5 L483.0 255.9 L483.0 248.4 L482.9 240.8 L482.8 233.2 L482.7 225.7 L482.7 218.1 L482.7 210.6 L482.7 203.0 L482.7 195.4 L482.8 187.9 L482.9 180.3 L482.9 172.8 L483.0 165.2 L483.1 157.6 L483.2 150.1 L483.4 142.5 L483.5 135.0 L483.6 127.4 L483.7 119.8 L483.7 112.3 L483.8 104.7 L483.9 97.2 L484.0 89.6 L484.0 82.0 L484.1 74.5 L484.1 66.9 L484.1 59.4 L484.1 51.8 L484.2 44.2 L484.2 36.7 L484.2 29.1 L484.2 21.6 L484.2 14.0Z" fill="url(#g1)" filter="url(#b1)"/><path d="M562.1 20.0 L562.1 27.1 L562.1 34.2 L562.1 41.3 L562.1 48.4 L562.2 55.5 L562.2 62.6 L562.2 69.7 L562.2 76.8 L562.3 83.9 L562.3 91.0 L562.4 98.1 L562.4 105.2 L562.5 112.3 L562.6 119.4 L562.6 126.5 L562.7 133.6 L562.8 140.7 L562.9 147.8 L563.0 154.9 L563.1 162.0 L563.2 169.1 L563.3 176.2 L563.4 183.3 L563.5 190.4 L563.5 197.5 L563.6 204.6 L563.6 211.7 L563.6 218.8 L563.6 225.9 L563.5 233.0 L563.5 240.1 L563.4 247.2 L563.3 254.3 L563.3 261.4 L563.2 268.5 L563.1 275.6 L563.0 282.7 L562.9 289.8 L562.8 296.9 L562.7 304.0 L562.6 311.1 L562.5 318.2 L562.4 325.3 L562.4 332.4 L562.3 339.5 L562.3 346.6 L562.2 353.7 L562.2 360.8 L562.2 367.9 L562.2 375.0 L559.0 375.0 L559.0 367.9 L559.0 360.8 L559.0 353.7 L558.9 346.6 L558.9 339.5 L558.8 332.4 L558.8 325.3 L558.7 318.2 L558.6 311.1 L558.5 304.0 L558.4 296.9 L558.3 289.8 L558.2 282.7 L558.1 275.6 L558.0 268.5 L557.9 261.4 L557.9 254.3 L557.8 247.2 L557.7 240.1 L557.7 233.0 L557.6 225.9 L557.6 218.8 L557.6 211.7 L557.6 204.6 L557.7 197.5 L557.7 190.4 L557.8 183.3 L557.9 176.2 L558.0 169.1 L558.1 162.0 L558.2 154.9 L558.3 147.8 L558.4 140.7 L558.5 133.6 L558.6 126.5 L558.6 119.4 L558.7 112.3 L558.8 105.2 L558.8 98.1 L558.9 91.0 L558.9 83.9 L559.0 76.8 L559.0 69.7 L559.0 62.6 L559.0 55.5 L559.1 48.4 L559.1 41.3 L559.1 34.2 L559.1 27.1 L559.1 20.0Z" fill="url(#g2)" filter="url(#b1)"/></svg><div id="label" class="abs mono"><div style="margin-top:1.6px">Screen Capture Time: 2026-04-21 02:44:37 UTC</div><div>143048050 Hz</div><div>Config = V8</div></div><div class="abs" style="left:5px;top:53px;width:99px;height:39px;background:#fff"></div><div class="abs" style="left:5px;top:53px;width:99px;height:15px;background:linear-gradient(90deg,#000 0%,#000 19%,#000060 30%,#000080 36%,#400880 45%,#801070 52%,#c03040 60%,#e86818 68%,#ffa000 75%,#ffe000 84%,#fff8a0 89%,#fff 92%,#fff 100%)"></div><svg class="abs" style="left:0;top:0" width="120" height="100"><rect x="8" y="68" width="1" height="5" fill="#000"/><rect x="13" y="68" width="1" height="5" fill="#000"/><rect x="17" y="68" width="1" height="5" fill="#000"/><rect x="21" y="68" width="1" height="5" fill="#000"/><rect x="26" y="68" width="1" height="11" fill="#000"/><rect x="30" y="68" width="1" height="5" fill="#000"/><rect x="35" y="68" width="1" height="5" fill="#000"/><rect x="39" y="68" width="1" height="5" fill="#000"/><rect x="44" y="68" width="1" height="5" fill="#000"/><rect x="48" y="68" width="1" height="11" fill="#000"/><rect x="52" y="68" width="1" height="5" fill="#000"/><rect x="57" y="68" width="1" height="5" fill="#000"/><rect x="61" y="68" width="1" height="5" fill="#000"/><rect x="66" y="68" width="1" height="5" fill="#000"/><rect x="70" y="68" width="1" height="11" fill="#000"/><rect x="75" y="68" width="1" height="5" fill="#000"/><rect x="79" y="68" width="1" height="5" fill="#000"/><rect x="83" y="68" width="1" height="5" fill="#000"/><rect x="88" y="68" width="1" height="5" fill="#000"/><rect x="92" y="68" width="1" height="11" fill="#000"/><rect x="97" y="68" width="1" height="5" fill="#000"/><rect x="101" y="68" width="1" height="5" fill="#000"/><rect x="5" y="68" width="99" height="1" fill="#000"/></svg><div class="abs sans" style="left:4px;top:79.5px;font-size:11px;color:#000;white-space:pre">-80 dB -60</div><div class="abs sans" style="left:84px;top:79.5px;font-size:11px;color:#000;white-space:pre">-40</div><div class="abs" style="left:37px;top:760px;width:1px;height:20px;background:#fff"></div><div class="abs sans tl" style="left:24px;top:779px">2026-04-21 02:43:10</div><div class="abs" style="left:152px;top:760px;width:1px;height:20px;background:#fff"></div><div class="abs sans tl" style="left:139px;top:779px">2026-04-21 02:43:20</div><div class="abs" style="left:266px;top:760px;width:1px;height:20px;background:#fff"></div><div class="abs sans tl" style="left:253px;top:779px">2026-04-21 02:43:30</div><div class="abs" style="left:380px;top:760px;width:1px;height:20px;background:#fff"></div><div class="abs sans tl" style="left:367px;top:779px">2026-04-21 02:43:40</div><div class="abs" style="left:495px;top:760px;width:1px;height:20px;background:#fff"></div><div class="abs sans tl" style="left:482px;top:779px">2026-04-21 02:43:50</div><div class="abs" style="left:594px;top:760px;width:1px;height:20px;background:#fff"></div><div class="abs sans tl" style="left:581px;top:779px">2026-04-21 02:44:00</div><div class="abs" style="left:703px;top:760px;width:1px;height:20px;background:#fff"></div><div class="abs sans tl" style="left:690px;top:779px">2026-04-21 02:44:10</div><svg class="abs" style="left:0;top:0" width="941" height="783"><rect x="818" y="1" width="42" height="781" fill="#fff"/><rect x="818" y="4" width="8" height="1" fill="#000"/><rect x="818" y="12" width="8" height="1" fill="#000"/><rect x="818" y="20" width="8" height="1" fill="#000"/><rect x="818" y="28" width="11" height="1" fill="#000"/><rect x="818" y="36" width="8" height="1" fill="#000"/><rect x="818" y="43" width="8" height="1" fill="#000"/><rect x="818" y="51" width="8" height="1" fill="#000"/><rect x="818" y="59" width="8" height="1" fill="#000"/><rect x="818" y="67" width="8" height="1" fill="#000"/><rect x="818" y="75" width="8" height="1" fill="#000"/><rect x="818" y="82" width="8" height="1" fill="#000"/><rect x="818" y="90" width="8" height="1" fill="#000"/><rect x="818" y="98" width="8" height="1" fill="#000"/><rect x="818" y="106" width="26" height="1" fill="#000"/><rect x="818" y="114" width="8" height="1" fill="#000"/><rect x="818" y="121" width="8" height="1" fill="#000"/><rect x="818" y="129" width="8" height="1" fill="#000"/><rect x="818" y="137" width="8" height="1" fill="#000"/><rect x="818" y="145" width="8" height="1" fill="#000"/><rect x="818" y="153" width="8" height="1" fill="#000"/><rect x="818" y="160" width="8" height="1" fill="#000"/><rect x="818" y="168" width="8" height="1" fill="#000"/><rect x="818" y="176" width="8" height="1" fill="#000"/><rect x="818" y="184" width="11" height="1" fill="#000"/><rect x="818" y="192" width="8" height="1" fill="#000"/><rect x="818" y="199" width="8" height="1" fill="#000"/><rect x="818" y="207" width="8" height="1" fill="#000"/><rect x="818" y="215" width="8" height="1" fill="#000"/><rect x="818" y="223" width="8" height="1" fill="#000"/><rect x="818" y="231" width="8" height="1" fill="#000"/><rect x="818" y="239" width="8" height="1" fill="#000"/><rect x="818" y="246" width="8" height="1" fill="#000"/><rect x="818" y="254" width="8" height="1" fill="#000"/><rect x="818" y="262" width="26" height="1" fill="#000"/><rect x="818" y="270" width="8" height="1" fill="#000"/><rect x="818" y="278" width="8" height="1" fill="#000"/><rect x="818" y="285" width="8" height="1" fill="#000"/><rect x="818" y="293" width="8" height="1" fill="#000"/><rect x="818" y="301" width="8" height="1" fill="#000"/><rect x="818" y="309" width="8" height="1" fill="#000"/><rect x="818" y="317" width="8" height="1" fill="#000"/><rect x="818" y="324" width="8" height="1" fill="#000"/><rect x="818" y="332" width="8" height="1" fill="#000"/><rect x="818" y="340" width="11" height="1" fill="#000"/><rect x="818" y="348" width="8" height="1" fill="#000"/><rect x="818" y="356" width="8" height="1" fill="#000"/><rect x="818" y="363" width="8" height="1" fill="#000"/><rect x="818" y="371" width="8" height="1" fill="#000"/><rect x="818" y="379" width="8" height="1" fill="#000"/><rect x="818" y="387" width="8" height="1" fill="#000"/><rect x="818" y="395" width="8" height="1" fill="#000"/><rect x="818" y="402" width="8" height="1" fill="#000"/><rect x="818" y="410" width="8" height="1" fill="#000"/><rect x="818" y="418" width="26" height="1" fill="#000"/><rect x="818" y="426" width="8" height="1" fill="#000"/><rect x="818" y="434" width="8" height="1" fill="#000"/><rect x="818" y="441" width="8" height="1" fill="#000"/><rect x="818" y="449" width="8" height="1" fill="#000"/><rect x="818" y="457" width="8" height="1" fill="#000"/><rect x="818" y="465" width="8" height="1" fill="#000"/><rect x="818" y="473" width="8" height="1" fill="#000"/><rect x="818" y="480" width="8" height="1" fill="#000"/><rect x="818" y="488" width="8" height="1" fill="#000"/><rect x="818" y="496" width="11" height="1" fill="#000"/><rect x="818" y="504" width="8" height="1" fill="#000"/><rect x="818" y="512" width="8" height="1" fill="#000"/><rect x="818" y="520" width="8" height="1" fill="#000"/><rect x="818" y="527" width="8" height="1" fill="#000"/><rect x="818" y="535" width="8" height="1" fill="#000"/><rect x="818" y="543" width="8" height="1" fill="#000"/><rect x="818" y="551" width="8" height="1" fill="#000"/><rect x="818" y="559" width="8" height="1" fill="#000"/><rect x="818" y="566" width="8" height="1" fill="#000"/><rect x="818" y="574" width="26" height="1" fill="#000"/><rect x="818" y="582" width="8" height="1" fill="#000"/><rect x="818" y="590" width="8" height="1" fill="#000"/><rect x="818" y="598" width="8" height="1" fill="#000"/><rect x="818" y="605" width="8" height="1" fill="#000"/><rect x="818" y="613" width="8" height="1" fill="#000"/><rect x="818" y="621" width="8" height="1" fill="#000"/><rect x="818" y="629" width="8" height="1" fill="#000"/><rect x="818" y="637" width="8" height="1" fill="#000"/><rect x="818" y="644" width="8" height="1" fill="#000"/><rect x="818" y="652" width="11" height="1" fill="#000"/><rect x="818" y="660" width="8" height="1" fill="#000"/><rect x="818" y="668" width="8" height="1" fill="#000"/><rect x="818" y="676" width="8" height="1" fill="#000"/><rect x="818" y="683" width="8" height="1" fill="#000"/><rect x="818" y="691" width="8" height="1" fill="#000"/><rect x="818" y="699" width="8" height="1" fill="#000"/><rect x="818" y="707" width="8" height="1" fill="#000"/><rect x="818" y="715" width="8" height="1" fill="#000"/><rect x="818" y="722" width="8" height="1" fill="#000"/><rect x="818" y="730" width="26" height="1" fill="#000"/><rect x="818" y="738" width="8" height="1" fill="#000"/><rect x="818" y="746" width="8" height="1" fill="#000"/><rect x="818" y="754" width="8" height="1" fill="#000"/><rect x="818" y="762" width="8" height="1" fill="#000"/><rect x="818" y="769" width="8" height="1" fill="#000"/><rect x="818" y="777" width="8" height="1" fill="#000"/><path d="M823 4.5 L839.5 13.5 M839.5 10 L839.5 769.5 L823 778.5" fill="none" stroke="#1818a8" stroke-width="1"/></svg><div class="abs mono fl" style="left:858px;top:75.5px">143050400</div><div class="abs mono fl" style="left:858px;top:231.6px">143050200</div><div class="abs mono fl" style="left:858px;top:387.8px">143050000</div><div class="abs mono fl" style="left:858px;top:543.9px">143049800</div><div class="abs mono fl" style="left:858px;top:689.7px">143049600 Hz</div><svg class="abs" style="left:0;top:0" width="941" height="783"><rect x="860" y="1" width="80" height="781" fill="#555"/><rect x="860" y="1" width="80" height="8" fill="#000"/><rect x="860" y="774" width="80" height="8" fill="#000"/><path fill="#000" d="M860 18h15v1h-15zM860 19h10v1h-10zM860 20h8v1h-8zM860 21h22v1h-22zM860 22h18v1h-18zM860 23h11v1h-11zM860 24h15v1h-15zM860 25h1v1h-1zM860 27h14v1h-14zM860 28h14v1h-14zM860 29h14v1h-14zM860 30h12v1h-12zM860 31h8v1h-8zM860 32h2v1h-2zM860 33h3v1h-3zM860 35h4v1h-4zM860 36h9v1h-9zM860 37h6v1h-6zM860 38h7v1h-7zM860 39h7v1h-7zM860 40h11v1h-11zM860 41h8v1h-8zM860 42h6v1h-6zM860 43h14v1h-14zM860 44h8v1h-8zM860 45h1v1h-1zM860 46h1v1h-1zM860 47h2v1h-2zM860 50h8v1h-8zM860 51h4v1h-4zM860 52h1v1h-1zM860 53h1v1h-1zM860 54h2v1h-2zM860 55h9v1h-9zM860 56h6v1h-6zM860 57h9v1h-9zM860 58h8v1h-8zM860 59h11v1h-11zM860 60h8v1h-8zM860 61h18v1h-18zM860 62h2v1h-2zM860 63h4v1h-4zM860 64h2v1h-2zM860 67h3v1h-3zM860 68h17v1h-17zM860 69h14v1h-14zM860 70h18v1h-18zM860 71h11v1h-11zM860 73h12v1h-12zM860 74h12v1h-12zM860 75h8v1h-8zM860 78h6v1h-6zM860 79h5v1h-5zM860 80h15v1h-15zM860 81h3v1h-3zM860 82h8v1h-8zM860 83h11v1h-11zM860 86h9v1h-9zM860 87h21v1h-21zM860 88h11v1h-11zM860 89h3v1h-3zM860 91h2v1h-2zM860 92h2v1h-2zM860 94h11v1h-11zM860 95h18v1h-18zM860 96h11v1h-11zM860 97h9v1h-9zM860 98h7v1h-7zM860 99h15v1h-15zM860 100h10v1h-10zM860 101h10v1h-10zM860 102h8v1h-8zM860 104h3v1h-3zM860 105h10v1h-10zM860 106h15v1h-15zM860 109h8v1h-8zM860 110h6v1h-6zM860 111h7v1h-7zM860 112h9v1h-9zM860 115h3v1h-3zM860 117h5v1h-5zM860 118h4v1h-4zM860 119h2v1h-2zM860 120h6v1h-6zM860 121h4v1h-4zM860 122h10v1h-10zM860 123h6v1h-6zM860 126h3v1h-3zM860 127h5v1h-5zM860 128h11v1h-11zM860 129h1v1h-1zM860 131h4v1h-4zM860 133h5v1h-5zM860 137h10v1h-10zM860 140h14v1h-14zM860 141h3v1h-3zM860 143h4v1h-4zM860 145h2v1h-2zM860 147h4v1h-4zM860 148h9v1h-9zM860 150h4v1h-4zM860 153h7v1h-7zM860 154h10v1h-10zM860 156h2v1h-2zM860 158h2v1h-2zM860 159h6v1h-6zM860 160h6v1h-6zM860 161h8v1h-8zM860 162h7v1h-7zM860 163h7v1h-7zM860 164h1v1h-1zM860 165h6v1h-6zM860 166h13v1h-13zM860 167h12v1h-12zM860 168h9v1h-9zM860 169h9v1h-9zM860 170h8v1h-8zM860 171h4v1h-4zM860 172h12v1h-12zM860 173h9v1h-9zM860 174h8v1h-8zM860 175h1v1h-1zM860 177h7v1h-7zM860 178h5v1h-5zM860 179h11v1h-11zM860 180h10v1h-10zM860 181h8v1h-8zM860 182h1v1h-1zM860 185h8v1h-8zM860 186h10v1h-10zM860 187h18v1h-18zM860 188h14v1h-14zM860 189h6v1h-6zM860 190h13v1h-13zM860 191h11v1h-11zM860 192h12v1h-12zM860 194h6v1h-6zM860 195h4v1h-4zM860 196h8v1h-8zM860 197h7v1h-7zM860 198h6v1h-6zM860 200h16v1h-16zM860 201h12v1h-12zM860 202h12v1h-12zM860 203h16v1h-16zM860 204h14v1h-14zM860 205h12v1h-12zM860 207h1v1h-1zM860 208h19v1h-19zM860 209h22v1h-22zM860 210h20v1h-20zM860 211h19v1h-19zM860 212h22v1h-22zM860 213h23v1h-23zM860 214h4v1h-4zM860 215h14v1h-14zM860 216h11v1h-11zM860 217h11v1h-11zM860 218h13v1h-13zM860 219h13v1h-13zM860 220h25v1h-25zM860 221h17v1h-17zM860 222h12v1h-12zM860 223h11v1h-11zM860 225h10v1h-10zM860 226h7v1h-7zM860 227h7v1h-7zM860 228h6v1h-6zM860 229h11v1h-11zM860 231h4v1h-4zM860 232h4v1h-4zM860 234h3v1h-3zM860 235h9v1h-9zM860 236h12v1h-12zM860 237h2v1h-2zM860 238h9v1h-9zM860 241h5v1h-5zM860 242h5v1h-5zM860 243h9v1h-9zM860 244h15v1h-15zM860 245h5v1h-5zM860 246h10v1h-10zM860 247h6v1h-6zM860 248h1v1h-1zM860 250h13v1h-13zM860 251h11v1h-11zM860 252h9v1h-9zM860 253h12v1h-12zM860 254h9v1h-9zM860 255h6v1h-6zM860 256h12v1h-12zM860 257h14v1h-14zM860 259h4v1h-4zM860 261h1v1h-1zM860 263h12v1h-12zM860 264h13v1h-13zM860 265h15v1h-15zM860 266h11v1h-11zM860 267h11v1h-11zM860 268h17v1h-17zM860 269h14v1h-14zM860 270h1v1h-1zM860 271h1v1h-1zM860 275h4v1h-4zM860 276h9v1h-9zM860 277h6v1h-6zM860 278h14v1h-14zM860 279h10v1h-10zM860 280h5v1h-5zM860 282h1v1h-1zM860 284h5v1h-5zM860 285h6v1h-6zM860 286h11v1h-11zM860 287h6v1h-6zM860 288h3v1h-3zM860 289h9v1h-9zM860 290h6v1h-6zM860 291h5v1h-5zM860 293h2v1h-2zM860 294h7v1h-7zM860 299h3v1h-3zM860 304h4v1h-4zM860 306h2v1h-2zM860 307h2v1h-2zM860 308h8v1h-8zM860 309h5v1h-5zM860 310h2v1h-2zM860 312h5v1h-5zM860 314h1v1h-1zM860 316h12v1h-12zM860 317h10v1h-10zM860 318h8v1h-8zM860 319h8v1h-8zM860 320h6v1h-6zM860 321h8v1h-8zM860 322h9v1h-9zM860 323h17v1h-17zM860 324h2v1h-2zM860 326h8v1h-8zM860 327h7v1h-7zM860 328h6v1h-6zM860 329h5v1h-5zM860 330h7v1h-7zM860 331h13v1h-13zM860 332h15v1h-15zM860 333h14v1h-14zM860 334h24v1h-24zM860 335h3v1h-3zM860 336h5v1h-5zM860 339h13v1h-13zM860 340h11v1h-11zM860 341h17v1h-17zM860 342h15v1h-15zM860 343h13v1h-13zM860 344h8v1h-8zM860 345h18v1h-18zM860 346h11v1h-11zM860 347h13v1h-13zM860 348h9v1h-9zM860 349h16v1h-16zM860 350h10v1h-10zM860 351h9v1h-9zM860 353h1v1h-1zM860 356h11v1h-11zM860 357h10v1h-10zM860 358h13v1h-13zM860 359h15v1h-15zM860 360h13v1h-13zM860 361h14v1h-14zM860 362h17v1h-17zM860 363h17v1h-17zM860 364h4v1h-4zM860 365h9v1h-9zM860 366h10v1h-10zM860 367h14v1h-14zM860 368h12v1h-12zM860 369h11v1h-11zM860 371h1v1h-1zM860 374h7v1h-7zM860 375h11v1h-11zM860 376h16v1h-16zM860 377h8v1h-8zM860 378h15v1h-15zM860 379h13v1h-13zM860 380h13v1h-13zM860 381h10v1h-10zM860 382h4v1h-4zM860 387h20v1h-20zM860 388h12v1h-12zM860 389h11v1h-11zM860 390h9v1h-9zM860 391h15v1h-15zM860 392h4v1h-4zM860 393h4v1h-4zM860 395h4v1h-4zM860 397h13v1h-13zM860 398h22v1h-22zM860 399h14v1h-14zM860 400h13v1h-13zM860 401h15v1h-15zM860 404h2v1h-2zM860 406h1v1h-1zM860 407h9v1h-9zM860 408h15v1h-15zM860 409h11v1h-11zM860 410h8v1h-8zM860 411h11v1h-11zM860 412h2v1h-2zM860 414h12v1h-12zM860 415h9v1h-9zM860 416h20v1h-20zM860 417h11v1h-11zM860 418h9v1h-9zM860 419h21v1h-21zM860 421h12v1h-12zM860 422h12v1h-12zM860 425h11v1h-11zM860 426h13v1h-13zM860 427h3v1h-3zM860 428h8v1h-8zM860 429h15v1h-15zM860 430h12v1h-12zM860 431h7v1h-7zM860 432h7v1h-7zM860 433h14v1h-14zM860 434h8v1h-8zM860 435h7v1h-7zM860 438h3v1h-3zM860 439h3v1h-3zM860 441h8v1h-8zM860 442h16v1h-16zM860 443h9v1h-9zM860 444h15v1h-15zM860 445h10v1h-10zM860 446h8v1h-8zM860 447h1v1h-1zM860 448h3v1h-3zM860 449h8v1h-8zM860 452h2v1h-2zM860 455h4v1h-4zM860 456h4v1h-4zM860 457h6v1h-6zM860 458h2v1h-2zM860 459h10v1h-10zM860 460h4v1h-4zM860 464h11v1h-11zM860 465h15v1h-15zM860 466h15v1h-15zM860 467h17v1h-17zM860 468h16v1h-16zM860 469h12v1h-12zM860 470h12v1h-12zM860 471h18v1h-18zM860 472h8v1h-8zM860 473h2v1h-2zM860 482h8v1h-8zM860 484h4v1h-4zM860 485h4v1h-4zM860 486h2v1h-2zM860 487h6v1h-6zM860 488h7v1h-7zM860 489h9v1h-9zM860 490h12v1h-12zM860 491h1v1h-1zM860 492h2v1h-2zM860 493h1v1h-1zM860 495h1v1h-1zM860 496h15v1h-15zM860 497h13v1h-13zM860 498h14v1h-14zM860 499h12v1h-12zM860 501h13v1h-13zM860 502h13v1h-13zM860 503h18v1h-18zM860 504h11v1h-11zM860 505h9v1h-9zM860 506h15v1h-15zM860 507h2v1h-2zM860 509h13v1h-13zM860 510h12v1h-12zM860 519h1v1h-1zM860 520h1v1h-1zM860 528h3v1h-3zM860 530h4v1h-4zM860 531h3v1h-3zM860 533h10v1h-10zM860 534h3v1h-3zM860 535h2v1h-2zM860 536h6v1h-6zM860 540h3v1h-3zM860 541h4v1h-4zM860 542h13v1h-13zM860 543h10v1h-10zM860 544h9v1h-9zM860 545h10v1h-10zM860 546h11v1h-11zM860 547h8v1h-8zM860 548h11v1h-11zM860 549h8v1h-8zM860 551h1v1h-1zM860 553h4v1h-4zM860 554h4v1h-4zM860 555h2v1h-2zM860 556h1v1h-1zM860 557h2v1h-2zM860 558h4v1h-4zM860 560h2v1h-2zM860 562h1v1h-1zM860 563h12v1h-12zM860 564h17v1h-17zM860 565h10v1h-10zM860 566h1v1h-1zM860 567h2v1h-2zM860 570h8v1h-8zM860 571h10v1h-10zM860 572h9v1h-9zM860 576h2v1h-2zM860 578h10v1h-10zM860 579h13v1h-13zM860 580h6v1h-6zM860 581h9v1h-9zM860 582h10v1h-10zM860 583h10v1h-10zM860 584h4v1h-4zM860 587h1v1h-1zM860 589h9v1h-9zM860 590h14v1h-14zM860 592h3v1h-3zM860 593h6v1h-6zM860 594h4v1h-4zM860 595h4v1h-4zM860 598h6v1h-6zM860 599h10v1h-10zM860 600h1v1h-1zM860 602h4v1h-4zM860 605h17v1h-17zM860 606h13v1h-13zM860 607h12v1h-12zM860 608h8v1h-8zM860 609h7v1h-7zM860 610h7v1h-7zM860 611h7v1h-7zM860 612h19v1h-19zM860 613h8v1h-8zM860 614h4v1h-4zM860 615h1v1h-1zM860 618h5v1h-5zM860 619h8v1h-8zM860 620h2v1h-2zM860 621h7v1h-7zM860 622h20v1h-20zM860 623h4v1h-4zM860 624h2v1h-2zM860 625h5v1h-5zM860 626h12v1h-12zM860 627h14v1h-14zM860 628h18v1h-18zM860 629h2v1h-2zM860 631h20v1h-20zM860 632h10v1h-10zM860 633h11v1h-11zM860 634h8v1h-8zM860 635h3v1h-3zM860 637h10v1h-10zM860 638h15v1h-15zM860 639h5v1h-5zM860 640h7v1h-7zM860 643h10v1h-10zM860 644h8v1h-8zM860 646h5v1h-5zM860 647h1v1h-1zM860 649h11v1h-11zM860 650h10v1h-10zM860 651h10v1h-10zM860 652h12v1h-12zM860 653h19v1h-19zM860 654h8v1h-8zM860 655h13v1h-13zM860 656h11v1h-11zM860 657h3v1h-3zM860 659h5v1h-5zM860 660h7v1h-7zM860 661h9v1h-9zM860 662h9v1h-9zM860 663h7v1h-7zM860 664h6v1h-6zM860 665h7v1h-7zM860 666h16v1h-16zM860 667h10v1h-10zM860 668h13v1h-13zM860 669h5v1h-5zM860 670h4v1h-4zM860 671h9v1h-9zM860 674h10v1h-10zM860 675h3v1h-3zM860 676h3v1h-3zM860 678h2v1h-2zM860 679h11v1h-11zM860 681h7v1h-7zM860 682h4v1h-4zM860 683h7v1h-7zM860 684h8v1h-8zM860 685h5v1h-5zM860 686h3v1h-3zM860 687h8v1h-8zM860 688h5v1h-5zM860 692h15v1h-15zM860 693h17v1h-17zM860 694h21v1h-21zM860 695h12v1h-12zM860 697h1v1h-1zM860 699h6v1h-6zM860 700h10v1h-10zM860 701h19v1h-19zM860 702h10v1h-10zM860 703h11v1h-11zM860 704h14v1h-14zM860 705h14v1h-14zM860 706h11v1h-11zM860 707h4v1h-4zM860 709h2v1h-2zM860 711h1v1h-1zM860 712h11v1h-11zM860 713h13v1h-13zM860 714h7v1h-7zM860 715h12v1h-12zM860 716h9v1h-9zM860 717h13v1h-13zM860 718h13v1h-13zM860 719h5v1h-5zM860 720h3v1h-3zM860 722h4v1h-4zM860 723h2v1h-2zM860 725h13v1h-13zM860 726h12v1h-12zM860 727h13v1h-13zM860 728h15v1h-15zM860 729h15v1h-15zM860 731h3v1h-3zM860 732h5v1h-5zM860 733h6v1h-6zM860 735h2v1h-2zM860 738h2v1h-2zM860 739h10v1h-10zM860 740h11v1h-11zM860 741h15v1h-15zM860 742h11v1h-11zM860 743h10v1h-10zM860 744h11v1h-11zM860 745h3v1h-3zM860 746h7v1h-7zM860 749h3v1h-3zM860 751h1v1h-1zM860 753h2v1h-2zM860 754h2v1h-2zM860 755h4v1h-4zM860 764h5v1h-5zM860 769h2v1h-2zM860 771h7v1h-7z"/><path fill="#0c0c48" d="M860 135h5v1h-5zM860 136h8v1h-8zM860 138h12v1h-12zM860 139h4v1h-4zM860 296h6v1h-6zM860 297h2v1h-2zM860 298h3v1h-3zM860 300h5v1h-5zM860 301h7v1h-7zM860 302h2v1h-2zM860 420h11v1h-11zM860 423h8v1h-8zM860 424h16v1h-16zM860 474h2v1h-2zM860 475h10v1h-10zM860 476h5v1h-5zM860 477h8v1h-8zM860 478h6v1h-6zM860 479h5v1h-5zM860 514h8v1h-8zM860 515h12v1h-12zM860 516h8v1h-8zM860 517h12v1h-12zM860 518h14v1h-14zM860 532h3v1h-3zM860 537h5v1h-5zM860 759h3v1h-3zM860 760h3v1h-3zM860 761h4v1h-4zM860 762h3v1h-3zM860 763h4v1h-4zM860 765h8v1h-8zM860 31h18v1h-18zM860 32h14v1h-14zM860 106h20v1h-20zM860 107h16v1h-16zM860 163h18v1h-18zM860 205h20v1h-20zM860 206h16v1h-16zM860 212h33v1h-33zM860 213h30v1h-30zM860 214h26v1h-26zM860 216h22v1h-22zM860 302h18v1h-18zM860 303h14v1h-14zM860 429h20v1h-20zM860 460h16v1h-16zM860 622h16v1h-16zM860 716h22v1h-22zM860 719h20v1h-20z"/><rect x="860" y="28" width="80" height="1" fill="#9a9a9a"/><rect x="860" y="106" width="80" height="1" fill="#9a9a9a"/><rect x="860" y="184" width="80" height="1" fill="#9a9a9a"/><rect x="860" y="262" width="80" height="1" fill="#9a9a9a"/><rect x="860" y="340" width="80" height="1" fill="#9a9a9a"/><rect x="860" y="418" width="80" height="1" fill="#9a9a9a"/><rect x="860" y="496" width="80" height="1" fill="#9a9a9a"/><rect x="860" y="574" width="80" height="1" fill="#9a9a9a"/><rect x="860" y="652" width="80" height="1" fill="#9a9a9a"/><rect x="860" y="730" width="80" height="1" fill="#9a9a9a"/><polyline fill="none" stroke="#c03838" stroke-width="1.3" points="860.7,3.0 860.7,5.1 860.7,7.2 860.7,9.3 860.7,11.3 860.7,13.4 860.7,15.5 860.7,17.6 862.4,19.6 863.7,21.5 866.3,23.4 866.1,25.3 866.9,27.2 867.8,29.1 870.3,31.4 868.0,33.7 870.0,36.0 867.7,38.3 869.6,40.6 870.1,42.4 868.3,44.2 869.9,46.0 868.2,48.0 870.4,50.0 867.9,52.0 870.3,54.0 868.3,56.0 869.5,58.0 867.6,60.0 869.9,62.0 870.1,64.0 867.6,66.0 869.7,68.0 867.9,70.0 869.8,72.0 868.0,74.0 869.5,76.0 867.9,78.0 870.2,80.0 867.7,82.0 869.7,84.0 868.1,86.0 870.1,88.0 868.5,90.0 870.3,92.0 869.5,94.0 868.4,96.0 870.3,98.0 867.7,100.0 869.6,102.0 869.7,104.0 868.6,106.0 870.0,108.0 868.0,110.0 870.4,112.0 868.3,114.0 870.1,116.0 870.8,118.0 868.4,120.0 870.9,122.0 870.6,124.0 868.4,126.0 870.8,128.0 868.7,130.0 870.7,132.0 868.7,134.0 871.1,136.0 871.2,138.0 870.8,140.0 871.5,142.0 869.2,144.0 869.3,146.0 871.1,148.0 869.2,150.0 872.0,152.0 871.9,154.0 869.5,156.0 871.4,158.0 872.1,160.0 870.6,162.0 872.7,164.0 870.8,166.0 872.6,168.0 872.9,170.0 870.8,172.0 871.2,174.0 873.2,176.0 871.5,178.0 873.7,180.0 872.8,181.9 875.2,183.8 874.0,185.6 876.0,187.5 875.0,189.4 875.5,191.2 875.5,193.1 878.0,195.0 878.2,197.5 881.5,200.0 881.9,202.5 879.7,205.0 882.5,206.8 885.8,208.5 890.2,210.2 891.0,212.0 895.2,214.0 892.6,216.0 889.2,218.0 888.8,220.0 885.9,222.0 885.9,224.0 883.0,226.0 883.3,228.0 880.2,230.0 880.6,231.9 878.8,233.8 879.4,235.6 876.7,237.5 877.1,239.4 875.2,241.2 875.7,243.1 874.8,245.0 874.2,246.9 874.1,248.8 872.1,250.6 873.5,252.5 872.1,254.4 873.2,256.2 872.4,258.1 871.1,260.0 872.2,262.0 870.1,264.0 872.0,266.0 872.0,268.0 871.8,270.0 869.4,272.0 871.0,274.0 870.9,276.0 869.2,278.0 871.0,280.0 868.3,282.0 870.2,284.0 868.7,286.0 868.5,288.0 868.6,290.0 868.2,292.0 870.4,294.0 870.0,296.0 867.8,298.0 868.2,300.0 870.3,302.0 867.7,304.0 870.0,306.0 869.5,308.0 869.7,310.0 868.3,312.0 868.1,314.0 870.2,316.0 868.1,318.0 870.3,320.0 870.0,322.0 870.1,324.0 867.6,326.0 870.0,328.0 870.3,330.0 867.8,332.0 867.7,334.0 869.7,336.0 868.2,338.0 870.0,340.0 870.2,342.0 867.9,344.0 870.2,346.0 870.0,348.0 867.9,350.0 869.8,352.0 868.0,354.0 870.3,356.0 867.8,358.0 869.7,360.0 867.9,362.0 870.4,364.0 867.8,366.0 870.1,368.0 870.2,370.0 868.4,372.0 870.2,374.0 867.8,376.0 870.0,378.0 869.6,380.0 868.1,382.0 870.3,384.0 868.5,386.0 870.4,388.0 868.0,390.0 870.2,392.0 868.3,394.0 870.0,396.0 870.2,398.0 868.1,400.0 869.6,402.0 870.0,404.0 868.1,406.0 869.6,408.0 867.7,410.0 869.8,412.0 870.1,414.0 867.7,416.0 869.4,418.0 869.8,420.0 870.0,422.0 867.6,424.0 867.7,426.0 867.7,428.0 869.9,430.0 867.9,432.0 867.3,434.0 869.7,436.0 868.1,438.0 869.6,440.0 867.5,442.0 869.8,444.0 869.1,446.0 869.5,448.0 867.5,450.0 869.4,452.0 867.2,454.0 869.5,456.0 867.4,458.0 869.1,460.0 869.4,462.0 867.2,464.0 867.9,466.0 869.1,468.0 867.1,470.0 868.9,472.0 869.0,474.0 867.5,476.0 867.6,478.0 868.8,480.0 869.1,482.0 866.8,484.0 869.4,486.0 866.8,488.0 869.5,490.0 867.0,492.0 868.6,494.0 866.7,496.0 866.9,498.0 867.5,500.0 869.2,502.0 868.9,504.0 867.6,506.0 868.6,508.0 867.3,510.0 869.3,512.0 866.9,514.0 868.7,516.0 866.7,518.0 867.1,520.0 866.9,522.0 869.0,524.0 867.5,526.0 867.5,528.0 866.9,530.0 867.2,532.0 868.6,534.0 867.0,536.0 866.7,538.0 868.5,540.0 867.4,542.0 868.9,544.0 867.3,546.0 869.3,548.0 867.2,550.0 868.7,552.0 868.6,554.0 867.6,556.0 868.8,558.0 867.0,560.0 868.6,562.0 867.6,564.0 869.2,566.0 866.8,568.0 869.3,570.0 869.3,572.0 869.0,574.0 866.8,576.0 868.5,578.0 867.2,580.0 869.0,582.0 868.5,584.0 866.8,586.0 867.4,588.0 868.5,590.0 866.8,592.0 866.9,594.0 867.3,596.0 868.7,598.0 866.6,600.0 868.5,602.0 869.1,604.0 867.4,606.0 867.5,608.0 869.3,610.1 866.6,612.1 868.9,614.1 867.5,616.1 868.5,618.1 867.3,620.1 868.5,622.1 869.0,624.1 868.4,626.2 867.2,628.2 869.2,630.2 868.7,632.2 867.0,634.2 868.9,636.2 866.9,638.2 869.2,640.2 866.9,642.3 868.8,644.3 868.9,646.3 867.4,648.3 868.6,650.3 867.5,652.3 867.4,654.3 868.7,656.3 867.0,658.4 868.5,660.4 867.5,662.4 868.6,664.4 866.7,666.4 869.1,668.4 867.5,670.4 867.5,672.4 869.1,674.5 867.0,676.5 867.1,678.5 869.3,680.5 867.1,682.5 866.9,684.5 869.3,686.5 867.2,688.5 868.7,690.5 866.7,692.6 868.7,694.6 867.0,696.6 868.7,698.6 867.3,700.6 868.8,702.6 869.1,704.6 867.5,706.6 869.0,708.7 867.0,710.7 869.0,712.7 867.0,714.7 868.8,716.7 867.4,718.7 868.9,720.7 867.0,722.7 868.7,724.8 867.0,726.8 867.6,728.8 868.8,730.8 866.7,732.8 868.8,734.8 868.7,736.8 867.0,738.8 866.6,740.9 869.3,742.9 866.7,744.9 868.5,746.9 867.2,748.9 868.8,750.9 867.6,752.9 867.1,754.9 869.2,757.0 867.5,759.0 869.0,761.0 868.9,763.0 868.0,765.0 866.7,766.8 865.3,768.7 864.0,770.5 862.7,772.3 861.3,774.2 860.0,776.0 860.0,778.0 860.0,780.0 860.0,782.0"/><polyline fill="none" stroke="#38e038" stroke-width="1.1" points="861.1,7.3 864.9,8.8 868.0,10.3 871.8,12.3 876.4,13.0 879.5,13.4 883.3,15.3 885.2,17.6 885.6,20.7 884.4,23.0 887.1,24.5 888.7,27.6 889.8,30.7 889.0,32.2 892.9,35.2 891.7,36.8 885.6,38.3 889.0,40.0 892.5,41.8 891.7,43.7 891.0,45.6 890.2,47.5 892.1,49.8 894.0,52.1 894.8,55.2 896.0,57.1 897.1,59.0 898.7,61.1 896.7,63.2 898.5,65.3 896.6,67.4 899.2,69.5 897.1,71.6 899.2,73.7 898.1,75.8 899.6,77.9 897.5,80.0 900.0,82.2 898.3,84.4 898.3,86.7 900.2,88.9 900.7,91.1 899.0,93.3 900.7,95.6 900.7,97.8 900.9,100.0 899.0,102.0 898.6,104.0 898.9,106.0 901.3,108.3 899.6,110.7 901.6,113.0 902.7,115.3 900.8,117.7 903.3,120.0 903.8,122.2 902.1,124.4 904.1,126.7 902.4,128.9 904.8,131.1 902.6,133.3 903.3,135.6 905.1,137.8 903.8,140.0 905.4,142.0 903.5,144.0 905.7,146.0 904.3,148.0 905.6,150.0 905.4,152.0 908.2,154.0 908.7,156.0 908.4,158.0 911.4,160.0 909.3,162.2 912.6,164.4 911.1,166.7 913.6,168.9 914.7,171.1 912.9,173.3 914.2,175.6 916.3,177.8 915.3,180.0 917.8,182.0 916.6,184.0 918.5,186.0 919.9,188.0 923.8,190.0 923.7,192.0 927.0,194.0 926.6,196.0 929.5,198.0 931.6,200.0 932.2,202.5 931.5,205.0 932.5,207.5 932.6,210.0 929.9,213.0 934.1,216.0 935.7,218.0 931.6,220.0 931.1,222.0 930.0,224.0 925.5,226.0 925.8,228.0 922.4,230.4 921.1,232.8 921.6,235.2 917.5,237.6 916.9,240.0 915.6,242.0 917.0,244.0 913.4,246.0 912.1,248.0 913.0,250.0 912.4,252.0 910.5,254.0 911.7,256.0 908.2,258.0 909.4,260.0 906.0,262.5 906.4,265.0 904.2,267.0 905.2,269.0 902.3,271.0 902.0,273.0 903.0,275.0 903.5,277.5 901.8,280.0 903.2,282.0 900.4,284.0 901.6,286.0 898.6,288.0 899.0,290.0 897.6,292.0 899.3,294.0 896.1,296.0 896.7,298.0 895.9,300.0 898.7,302.0 898.8,304.0 894.9,306.0 897.8,308.0 894.4,310.0 896.6,312.0 895.8,314.0 895.9,316.0 891.9,318.0 895.1,320.0 890.5,322.0 893.4,324.0 888.3,326.0 888.0,328.0 890.3,330.0 886.0,332.0 888.2,334.0 885.4,336.0 887.8,338.0 883.4,340.0 884.9,342.0 885.3,344.0 888.8,346.0 885.4,348.0 885.4,350.0 888.4,352.0 888.1,354.0 884.1,356.0 883.8,358.0 886.8,360.0 883.6,362.0 888.5,364.0 885.1,366.0 884.5,368.0 888.5,370.0 885.6,372.0 887.6,374.0 884.5,376.0 886.5,378.0 882.1,380.0 884.2,382.5 882.7,385.0 883.1,387.0 880.0,389.0 881.2,391.0 884.9,393.0 881.4,395.0 880.5,397.5 884.1,400.0 884.8,402.2 881.8,404.4 884.5,406.7 884.1,408.9 880.8,411.1 883.3,413.3 884.9,415.6 884.5,417.8 884.5,420.0 881.3,422.2 884.5,424.4 881.3,426.7 883.6,428.9 880.4,431.1 883.7,433.3 880.9,435.6 884.6,437.8 881.1,440.0 884.5,442.2 883.3,444.4 880.3,446.7 883.8,448.9 880.8,451.1 884.0,453.3 883.4,455.6 880.7,457.8 884.3,460.0 881.2,462.2 884.2,464.4 881.3,466.7 881.1,468.9 883.2,471.1 881.0,473.3 884.9,475.6 880.9,477.8 884.5,480.0 880.3,482.2 883.3,484.4 880.8,486.7 883.6,488.9 880.3,491.1 883.8,493.3 880.4,495.6 883.5,497.8 884.8,500.0 880.8,502.2 884.6,504.4 881.2,506.7 884.1,508.9 884.5,511.1 881.6,513.3 883.8,515.6 880.1,517.8 883.6,520.0 881.4,522.2 884.9,524.4 880.6,526.7 883.7,528.9 880.2,531.1 884.5,533.3 881.4,535.6 884.0,537.8 883.3,540.0 880.6,542.2 884.2,544.4 880.5,546.7 883.7,548.9 880.6,551.1 884.3,553.3 880.8,555.6 880.2,557.8 884.0,560.0 881.7,562.2 881.3,564.4 883.3,566.7 880.8,568.9 884.1,571.1 881.4,573.3 884.6,575.6 880.3,577.8 884.7,580.0 880.6,582.2 883.8,584.4 881.3,586.7 880.6,588.9 880.7,591.1 884.1,593.3 883.8,595.6 880.6,597.8 884.2,600.0 884.4,602.2 883.8,604.4 883.5,606.7 880.8,608.9 883.8,611.1 880.5,613.3 883.9,615.6 881.0,617.8 880.1,620.0 880.6,622.2 883.6,624.4 884.3,626.7 880.3,628.9 884.3,631.1 880.2,633.3 883.7,635.6 881.5,637.8 881.0,640.0 880.7,642.2 884.7,644.4 880.3,646.7 884.7,648.9 880.2,651.1 883.8,653.3 881.5,655.6 883.5,657.8 884.7,660.0 883.6,662.2 880.9,664.4 880.8,666.7 880.7,668.9 884.5,671.1 883.4,673.3 880.6,675.6 883.6,677.8 881.6,680.0 881.1,682.2 884.7,684.4 881.0,686.7 884.0,688.9 880.8,691.1 884.4,693.3 881.4,695.6 884.8,697.8 884.3,700.0 884.2,702.1 881.5,704.3 880.5,706.4 884.2,708.6 880.7,710.7 884.4,712.9 880.4,715.0 883.6,717.1 881.4,719.3 881.6,721.4 884.0,723.6 883.9,725.7 881.1,727.9 884.4,730.0 881.6,732.2 885.0,734.5 881.7,736.8 884.6,739.0 880.9,741.2 884.5,743.5 881.1,745.8 884.2,748.0 880.2,750.2 882.6,752.5 878.6,754.8 881.7,757.0 878.1,759.2 879.8,761.5 879.4,763.8 879.0,766.0 876.8,768.2 874.5,770.5 872.2,772.8 870.0,775.0 867.3,777.3 864.7,779.7 862.0,782.0"/><circle cx="889.5" cy="729.5" r="3.2" fill="#000" stroke="#b83030" stroke-width="1"/><path d="M936 782 Q937 778 940 778" fill="none" stroke="#30e030" stroke-width="1.2"/></svg></body></html>
